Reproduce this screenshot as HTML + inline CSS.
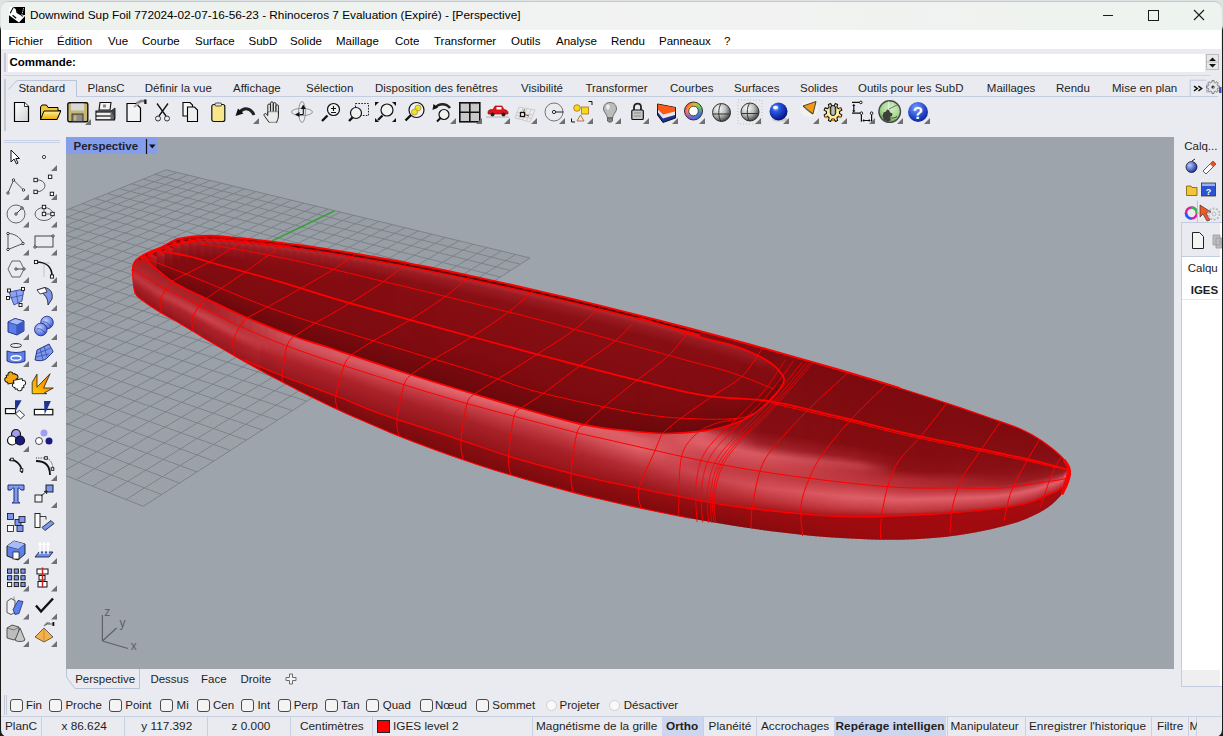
<!DOCTYPE html>
<html><head><meta charset="utf-8"><style>
html,body{margin:0;padding:0;width:1223px;height:736px;overflow:hidden;background:#dfe3e6}
.r{position:absolute;display:block}
.t{position:absolute;white-space:pre;line-height:1;font-family:"Liberation Sans", sans-serif}
</style></head><body>
<div class="r" style="left:0px;top:0px;width:1223px;height:736px;background:linear-gradient(180deg,#dfe3e6 0px,#dfe3e6 26px,#1c1c1c 30px,#1c1c1c 100%)"></div><div class="r" style="left:1px;top:1px;width:1221px;height:736px;background:#eaebf0;border-radius:8px 8px 7px 7px;border-top:1px solid #c4c8cb;box-sizing:border-box;overflow:hidden"></div><div class="r" style="left:1px;top:2px;width:1220px;height:28px;background:linear-gradient(90deg,#edf2ee 0%,#eff2f0 35%,#f2f2f3 50%,#f1f2f1 65%,#edf3ee 100%);border-radius:7px 7px 0 0"></div><svg class="r" style="left:9px;top:7px" width="16" height="16" viewBox="0 0 16 16"><rect x="0" y="0" width="16" height="16" fill="#000"/><path d="M0,0 H3.6 L6.6,1.9 L7.6,6 L12,8.4 L16,8 L16,9 L10,15.5 L0,8.3 Z" fill="#fff"/><path d="M4.2,0.8 C3,2.5 2.2,4.5 1.3,6.3" stroke="#000" stroke-width="1.1" fill="none"/><path d="M3.6,8.2 L7.2,11.2" stroke="#000" stroke-width="1.2"/><path d="M14.6,1.2 L12.6,9" stroke="#ddd" stroke-width="1" stroke-dasharray="1.2 0.8"/><path d="M12,8.4 L14,9.5" stroke="#000" stroke-width="0.8"/></svg><span class="t" style="left:30.0px;top:10.31px;font-size:11.8px;font-weight:400;color:#000;">Downwind Sup Foil 772024-02-07-16-56-23 - Rhinoceros 7 Evaluation (Expiré) - [Perspective]</span><svg class="r" style="left:1095px;top:5px" width="120" height="20"><path d="M8 10.5 H18" stroke="#1a1a1a" stroke-width="1"/><rect x="53.5" y="5.5" width="10" height="10" fill="none" stroke="#1a1a1a" stroke-width="1"/><path d="M99 5 L109 15 M109 5 L99 15" stroke="#1a1a1a" stroke-width="1.1"/></svg><div class="r" style="left:1px;top:30px;width:1220px;height:19px;background:#fff"></div><span class="t" style="left:8.5px;top:35.77px;font-size:11.5px;font-weight:400;color:#000;">Fichier</span><span class="t" style="left:57.0px;top:35.77px;font-size:11.5px;font-weight:400;color:#000;">Édition</span><span class="t" style="left:108.0px;top:35.77px;font-size:11.5px;font-weight:400;color:#000;">Vue</span><span class="t" style="left:142.0px;top:35.77px;font-size:11.5px;font-weight:400;color:#000;">Courbe</span><span class="t" style="left:195.0px;top:35.77px;font-size:11.5px;font-weight:400;color:#000;">Surface</span><span class="t" style="left:248.5px;top:35.77px;font-size:11.5px;font-weight:400;color:#000;">SubD</span><span class="t" style="left:290.0px;top:35.77px;font-size:11.5px;font-weight:400;color:#000;">Solide</span><span class="t" style="left:336.0px;top:35.77px;font-size:11.5px;font-weight:400;color:#000;">Maillage</span><span class="t" style="left:395.0px;top:35.77px;font-size:11.5px;font-weight:400;color:#000;">Cote</span><span class="t" style="left:434.0px;top:35.77px;font-size:11.5px;font-weight:400;color:#000;">Transformer</span><span class="t" style="left:511.0px;top:35.77px;font-size:11.5px;font-weight:400;color:#000;">Outils</span><span class="t" style="left:556.0px;top:35.77px;font-size:11.5px;font-weight:400;color:#000;">Analyse</span><span class="t" style="left:611.0px;top:35.77px;font-size:11.5px;font-weight:400;color:#000;">Rendu</span><span class="t" style="left:659.0px;top:35.77px;font-size:11.5px;font-weight:400;color:#000;">Panneaux</span><span class="t" style="left:724.0px;top:35.77px;font-size:11.5px;font-weight:400;color:#000;">?</span><div class="r" style="left:4px;top:53px;width:2px;height:19px;border-left:1px solid #c4cad6;border-right:1px solid #c4cad6;box-sizing:border-box"></div><div class="r" style="left:8px;top:54px;width:1197px;height:18px;background:#fff"></div><span class="t" style="left:9.5px;top:56.77px;font-size:11.5px;font-weight:700;color:#000;">Commande:</span><div class="r" style="left:1206px;top:54px;width:13px;height:16px;background:#e8e8e8;border:1px solid #bcbcbc;box-sizing:border-box"></div><svg class="r" style="left:1206px;top:54px" width="13" height="16"><path d="M3 7 L6.5 3.5 L10 7 Z M3 10 L10 10 L6.5 13.5 Z" fill="#111"/><path d="M1 8 H12" stroke="#bcbcbc"/></svg><div class="r" style="left:4px;top:75px;width:1206px;height:1px;background:#cfd6e3"></div><div class="r" style="left:4px;top:79px;width:2px;height:52px;border-left:1px solid #c4cad6;border-right:1px solid #c4cad6;box-sizing:border-box"></div><div class="r" style="left:76px;top:96px;width:1142px;height:1px;background:#c3cde0"></div><svg class="r" style="left:7px;top:79px" width="72" height="19"><path d="M1.4,10.5 L9.3,2 Q9.8,1.5 11,1.5 L69.5,1.5 L69.5,18" fill="none" stroke="#b8c4da" stroke-width="1"/></svg><span class="t" style="left:18.4px;top:82.77px;font-size:11.5px;font-weight:400;color:#1e1e1e;">Standard</span><span class="t" style="left:87.6px;top:82.77px;font-size:11.5px;font-weight:400;color:#1e1e1e;">PlansC</span><span class="t" style="left:144.7px;top:82.77px;font-size:11.5px;font-weight:400;color:#1e1e1e;">Définir la vue</span><span class="t" style="left:233.0px;top:82.77px;font-size:11.5px;font-weight:400;color:#1e1e1e;">Affichage</span><span class="t" style="left:306.0px;top:82.77px;font-size:11.5px;font-weight:400;color:#1e1e1e;">Sélection</span><span class="t" style="left:375.0px;top:82.77px;font-size:11.5px;font-weight:400;color:#1e1e1e;">Disposition des fenêtres</span><span class="t" style="left:521.0px;top:82.77px;font-size:11.5px;font-weight:400;color:#1e1e1e;">Visibilité</span><span class="t" style="left:585.4px;top:82.77px;font-size:11.5px;font-weight:400;color:#1e1e1e;">Transformer</span><span class="t" style="left:670.0px;top:82.77px;font-size:11.5px;font-weight:400;color:#1e1e1e;">Courbes</span><span class="t" style="left:734.0px;top:82.77px;font-size:11.5px;font-weight:400;color:#1e1e1e;">Surfaces</span><span class="t" style="left:800.0px;top:82.77px;font-size:11.5px;font-weight:400;color:#1e1e1e;">Solides</span><span class="t" style="left:858.0px;top:82.77px;font-size:11.5px;font-weight:400;color:#1e1e1e;">Outils pour les SubD</span><span class="t" style="left:986.8px;top:82.77px;font-size:11.5px;font-weight:400;color:#1e1e1e;">Maillages</span><span class="t" style="left:1056.0px;top:82.77px;font-size:11.5px;font-weight:400;color:#1e1e1e;">Rendu</span><span class="t" style="left:1112.0px;top:82.77px;font-size:11.5px;font-weight:400;color:#1e1e1e;">Mise en plan</span><svg class="r" style="left:1185px;top:76px" width="38" height="24"><path d="M5.2,20.5 V4.2 H21.5" fill="none" stroke="#bcc8dc" stroke-width="1"/><rect x="21" y="8" width="1.5" height="9" fill="#c8b8e8"/><rect x="34" y="11" width="2.5" height="6" fill="#4050c0"/></svg><svg class="r" style="left:0;top:0" width="1223" height="100"><path d="M1194,86.2 L1197.2,88.5 L1194,90.8 M1198.4,86.2 L1201.6,88.5 L1198.4,90.8" fill="none" stroke="#111" stroke-width="1.5"/><path d="M1217.89,85.94 L1219.53,86.01 L1219.53,87.99 L1217.89,88.06 L1217.20,89.71 L1218.32,90.91 L1216.91,92.32 L1215.71,91.20 L1214.06,91.89 L1213.99,93.53 L1212.01,93.53 L1211.94,91.89 L1210.29,91.20 L1209.09,92.32 L1207.68,90.91 L1208.80,89.71 L1208.11,88.06 L1206.47,87.99 L1206.47,86.01 L1208.11,85.94 L1208.80,84.29 L1207.68,83.09 L1209.09,81.68 L1210.29,82.80 L1211.94,82.11 L1212.01,80.47 L1213.99,80.47 L1214.06,82.11 L1215.71,82.80 L1216.91,81.68 L1218.32,83.09 L1217.20,84.29Z" fill="#e6e6e6" stroke="#7d7d7d" stroke-width="1"/><circle cx="1213" cy="87" r="1.6" fill="#2a2a2a"/><circle cx="1213.6" cy="87.4" r="0.8" fill="#4aa0f0"/></svg><svg class="r" style="left:0;top:0" width="1223" height="140"><g transform="translate(13,102) scale(1.0)"><defs><linearGradient id="pg" x1="0" y1="0" x2="1" y2="1"><stop offset="0" stop-color="#ffffff"/><stop offset="1" stop-color="#d2d2d2"/></linearGradient></defs><path d="M1.5,0.5 H11.5 L15.5,4.5 V19.5 H1.5 Z" fill="url(#pg)" stroke="#000" stroke-width="1.2"/><path d="M11.5,0.5 V4.5 H15.5" fill="#fff" stroke="#000" stroke-width="0.8"/></g><g transform="translate(40,104) scale(1.0)"><defs><linearGradient id="fy" x1="0" y1="0" x2="0" y2="1"><stop offset="0" stop-color="#fff3a0"/><stop offset="1" stop-color="#e8a800"/></linearGradient></defs><path d="M0.5,3 L0.5,15.5 L17,15.5 L20.5,6.5 L18,6.5 L18,3.5 L8,3.5 L6.5,1 L2,1 Z" fill="#f2c63a" stroke="#000" stroke-width="1"/><path d="M0.5,15.5 L4,7 L20.8,7 L17,15.5 Z" fill="url(#fy)" stroke="#000" stroke-width="1"/></g><g transform="translate(67,102) scale(1.0)"><rect x="0.8" y="0.8" width="20" height="19" rx="1.5" fill="#c6b671" stroke="#111" stroke-width="1.4"/><rect x="4" y="1.5" width="13" height="7" fill="#d8d8d8"/><rect x="5" y="12" width="11" height="7.5" fill="#8c8c8c" stroke="#222" stroke-width="0.8"/><rect x="7" y="13.5" width="2.5" height="5" fill="#c6b671"/></g><path d="M85,125 L91,119 L91,125 Z" fill="#707070"/><g transform="translate(95,102) scale(1.0)"><path d="M5,0.5 H16 L15,8 H4 Z" fill="#f4f4f4" stroke="#111" stroke-width="1.1"/><rect x="8" y="2.5" width="3" height="3" fill="#888"/><path d="M1,9 H19.5 V18 H1 Z" fill="#6a6a6a" stroke="#111" stroke-width="1.2"/><rect x="1.5" y="11" width="14" height="2" fill="#f0f0f0"/><rect x="1.5" y="15" width="14" height="2" fill="#f0f0f0"/><path d="M16,9 L20,6 V17" fill="#444" stroke="#111" stroke-width="0.8"/></g><g transform="translate(126,100) scale(1.0)"><path d="M1,3.5 H10 L14.5,8 V21.5 H1 Z" fill="#f3f3f3" stroke="#000" stroke-width="1.2"/><path d="M10.5,3.5 L15,1 H19" stroke="#888" stroke-width="2.6" fill="none"/><rect x="18.3" y="-0.5" width="2.2" height="4.5" fill="#111"/><path d="M8,7 L13,3" stroke="#aaa" stroke-width="2"/></g><g transform="translate(155,103) scale(1.0)"><path d="M2,0.5 L11,13 M13,0.5 L4,13" stroke="#111" stroke-width="1.3"/><ellipse cx="3" cy="15.5" rx="2.5" ry="2.5" fill="none" stroke="#333" stroke-width="1"/><ellipse cx="12" cy="15.5" rx="2.5" ry="2.5" fill="none" stroke="#333" stroke-width="1"/></g><g transform="translate(182,102) scale(1.0)"><path d="M1,0.5 H8 L10.5,3 V14 H1 Z" fill="#f6f6f6" stroke="#000" stroke-width="1.1"/><path d="M5.5,5 H12.5 L15.5,8 V19.5 H5.5 Z" fill="#efefef" stroke="#000" stroke-width="1.1"/></g><g transform="translate(211,103) scale(1.0)"><rect x="0.8" y="1.5" width="13" height="17" rx="2" fill="#f8e68a" stroke="#111" stroke-width="1.2"/><rect x="4" y="0" width="6.5" height="3" rx="1" fill="#e8e8e8" stroke="#222" stroke-width="0.8"/></g><g transform="translate(235,105) scale(1.0)"><path d="M19,10 C16,3 9,2 5,7" stroke="#222" stroke-width="3" fill="none"/><path d="M0.5,11 L3,3.5 L8.5,8.5 Z" fill="#111"/></g><path d="M253,124 L259,118 L259,124 Z" fill="#707070"/><g transform="translate(263,101) scale(1.0)"><g fill="#efefef" stroke="#111" stroke-width="0.9"><rect x="4.8" y="3" width="2.6" height="11" rx="1.3"/><rect x="7.6" y="0.8" width="2.6" height="12" rx="1.3"/><rect x="10.4" y="1.6" width="2.6" height="11.5" rx="1.3"/><rect x="13" y="3.8" width="2.4" height="10" rx="1.2"/></g><path d="M4.8,11 H15.4 V15 C15.4,18 14,19.5 13.6,21.5 H6.2 L1.2,14.6 C0.4,13.2 2,12 3.2,13 L4.8,14.5 Z" fill="#ebebeb" stroke="#111" stroke-width="0.9"/><path d="M5.5,11.2 H14.8" stroke="#ebebeb" stroke-width="1.2"/><path d="M6.5,21 H13" stroke="#c8c8c8" stroke-width="1.5"/></g><g transform="translate(291,101) scale(1.0)"><ellipse cx="11" cy="11" rx="10.5" ry="3.6" fill="none" stroke="#8a8a8a" stroke-width="0.9"/><ellipse cx="11" cy="11" rx="3.4" ry="10.5" fill="none" stroke="#8a8a8a" stroke-width="0.9"/><path d="M12.2,3.5 L14.8,8 L9.8,8 Z M4,13.5 L8.5,11 L8.5,16 Z" fill="#111"/><path d="M12.3,8 V13.5 M8.5,13.5 H12.3" stroke="#111" stroke-width="1.1" fill="none"/></g><g transform="translate(321,103) scale(1.0)"><path d="M1,18 L6.5,12.5" stroke="#111" stroke-width="2.4"/><circle cx="12.5" cy="6.5" r="6" fill="#f2f2f2" stroke="#111" stroke-width="1.2"/><path d="M12.5,3 V8 M10,5.5 H15 M10,9.5 H15" stroke="#111" stroke-width="1.1"/></g><g transform="translate(348,103) scale(1.0)"><rect x="7.5" y="0.5" width="13" height="12" fill="none" stroke="#222" stroke-width="1" stroke-dasharray="1.6 1.3"/><path d="M1,18 L6.5,12.5" stroke="#111" stroke-width="2.4"/><circle cx="8" cy="10" r="5.5" fill="#f2f2f2" stroke="#111" stroke-width="1.2"/></g><g transform="translate(375,102) scale(1.0)"><path d="M0,0 H4 L0,4 Z M21,0 H17 L21,4 Z M0,20 H4 L0,16 Z M21,20 H17 L21,16 Z" fill="#111"/><path d="M3,18 L7.5,13.5" stroke="#111" stroke-width="2.2"/><circle cx="12" cy="8" r="6" fill="#f2f2f2" stroke="#111" stroke-width="1.2"/></g><g transform="translate(405,102) scale(1.0)"><path d="M0.5,18.5 L6.5,12.5" stroke="#111" stroke-width="2.4"/><circle cx="11.5" cy="8" r="7.5" fill="#f2f2f2" stroke="#111" stroke-width="1.2"/><circle cx="13" cy="6" r="3" fill="#f5e21a" stroke="#777" stroke-width="0.6"/><circle cx="9.5" cy="10" r="3" fill="#f5e21a" stroke="#777" stroke-width="0.6"/></g><g transform="translate(432,103) scale(1.0)"><path d="M18,5 C14,0 7,0 3,5" stroke="#222" stroke-width="2.6" fill="none"/><path d="M0.5,7 L1.5,1 L6,4.5 Z" fill="#111"/><path d="M5,18.5 L9,14.5" stroke="#111" stroke-width="2"/><circle cx="12" cy="11.5" r="5" fill="#f2f2f2" stroke="#111" stroke-width="1.2"/></g><path d="M450,124 L456,118 L456,124 Z" fill="#707070"/><g transform="translate(459,102) scale(1.0)"><rect x="0.8" y="0.8" width="20" height="19" fill="#c8c8c8" stroke="#111" stroke-width="1.6"/><path d="M10.8,1 V20 M1,10.3 H21" stroke="#111" stroke-width="1.6"/><path d="M13,1.6 H18" stroke="#2a4fd0" stroke-width="1"/></g><path d="M476,124 L482,118 L482,124 Z" fill="#707070"/><g transform="translate(487,104) scale(1.0)"><path d="M1,8 C1,6 3,5.5 6,5.5 L8,2 H15 L17,5.5 C20,6 21,7 21,8.5 V10 H1 Z" fill="#e0131b" stroke="#900" stroke-width="0.6"/><rect x="9.5" y="3" width="5" height="2.5" fill="#fff"/><circle cx="5.5" cy="10.5" r="2" fill="#222"/><circle cx="16.5" cy="10.5" r="2" fill="#222"/><path d="M-1,13 H22" stroke="#999" stroke-width="0.7"/></g><path d="M504,124 L510,118 L510,124 Z" fill="#707070"/><g transform="translate(515,106) scale(1.0)"><path d="M4,1 L20,4 L15,16 L0,12 Z M8,2 L3.5,13 M12,2.8 L7.5,14 M16,3.5 L11.5,15 M2,6.5 L18,9 M1,9.3 L16.5,12.6" fill="none" stroke="#bfbfbf" stroke-width="0.7"/><path d="M8,8 L9.5,3" stroke="#2a9a2a" stroke-width="1"/><path d="M8,8 L14,10" stroke="#d02020" stroke-width="1"/><rect x="5.5" y="6.5" width="4" height="4" fill="#fff" stroke="#111" stroke-width="1.3"/></g><path d="M531,124 L537,118 L537,124 Z" fill="#707070"/><g transform="translate(544,102) scale(1.0)"><circle cx="10" cy="10" r="9" fill="none" stroke="#666" stroke-width="0.9"/><path d="M10,10 H19.5" stroke="#222" stroke-width="1"/><circle cx="10" cy="10" r="1.6" fill="#fff" stroke="#111" stroke-width="0.9"/></g><path d="M559,124 L565,118 L565,124 Z" fill="#707070"/><g transform="translate(571,101) scale(1.0)"><path d="M17.5,0.5 H21 V4" fill="none" stroke="#111" stroke-width="1"/><path d="M0.5,17.5 V21 H4" fill="none" stroke="#111" stroke-width="1"/><circle cx="6" cy="7" r="3.3" fill="#f3dc16" stroke="#b56a20" stroke-width="0.8"/><rect x="10.5" y="6" width="7" height="7" fill="#f3dc16" stroke="#b56a20" stroke-width="0.8"/><path d="M9.5,14 L13,20 H6 Z" fill="none" stroke="#b56a20" stroke-width="0.9"/></g><path d="M587,124 L593,118 L593,124 Z" fill="#707070"/><g transform="translate(603,102) scale(1.0)"><path d="M7,0.5 C2,0.5 0.5,4 0.5,7 C0.5,10 4,12 4.5,16 H9.5 C10,12 13.5,10 13.5,7 C13.5,4 12,0.5 7,0.5 Z" fill="#bcbcbc" stroke="#555" stroke-width="0.8"/><path d="M4.5,16 H9.5 V19 C9,20.5 5,20.5 4.5,19 Z" fill="#888" stroke="#444" stroke-width="0.7"/><ellipse cx="5" cy="5" rx="1.8" ry="2.8" fill="#efefef"/></g><path d="M615,124 L621,118 L621,124 Z" fill="#707070"/><g transform="translate(631,102) scale(1.0)"><path d="M3,8 V5 C3,0.5 10,0.5 10,5 V8" fill="none" stroke="#222" stroke-width="1.8"/><rect x="0.8" y="8" width="11.5" height="9.5" rx="1" fill="#c8c8c8" stroke="#111" stroke-width="1.2"/><path d="M3,11 H10 M3,14 H10" stroke="#888" stroke-width="1"/></g><path d="M643,124 L649,118 L649,124 Z" fill="#707070"/><g transform="translate(657,103) scale(1.0)"><path d="M0.5,1 L18.5,4.5 V15 L6,19.5 L0.5,12 Z" fill="#1f2f9a" stroke="#111" stroke-width="1"/><path d="M0.8,1.2 L18.2,4.6 V9 L6,12 L0.8,6 Z" fill="#ff5a14"/><path d="M1,6.5 L6,11.5 L18,8.5 V12 L6,15.5 L1,9.5 Z" fill="#e8e8e8"/></g><path d="M672,124 L678,118 L678,124 Z" fill="#707070"/><g transform="translate(684,102) scale(1.0)"><defs><linearGradient id="cw1" x1="0" y1="0" x2="1" y2="1"><stop offset="0" stop-color="#ff2a2a"/><stop offset="0.3" stop-color="#ffd800"/><stop offset="0.6" stop-color="#00c8a0"/><stop offset="1" stop-color="#3050ff"/></linearGradient><linearGradient id="cw2" x1="1" y1="0" x2="0" y2="1"><stop offset="0" stop-color="#80ff20" stop-opacity="0.9"/><stop offset="0.5" stop-color="#ff20c0" stop-opacity="0"/><stop offset="1" stop-color="#c020ff" stop-opacity="0.9"/></linearGradient></defs><circle cx="9.5" cy="9" r="7" fill="none" stroke="url(#cw1)" stroke-width="4"/><circle cx="9.5" cy="9" r="7" fill="none" stroke="url(#cw2)" stroke-width="4"/><circle cx="9.5" cy="9" r="9" fill="none" stroke="#222" stroke-width="0.9"/><circle cx="9.5" cy="9" r="4.8" fill="#fff" stroke="#222" stroke-width="0.8"/></g><path d="M699,124 L705,118 L705,124 Z" fill="#707070"/><g transform="translate(712,103) scale(1.0)"><defs><radialGradient id="sg" cx="0.35" cy="0.3" r="0.75"><stop offset="0" stop-color="#ffffff"/><stop offset="0.5" stop-color="#bdbdbd"/><stop offset="1" stop-color="#3c3c3c"/></radialGradient></defs><circle cx="9.5" cy="9.5" r="9" fill="url(#sg)" stroke="#222" stroke-width="0.9"/><path d="M9,1 C6,5 6,14 9,18.5 M1,11 H18" stroke="#333" stroke-width="1" fill="none"/></g><g transform="translate(738,100) scale(1.0)"><rect x="0" y="0" width="24" height="24" fill="none" stroke="#d6d6d6" stroke-width="2" stroke-dasharray="1 2"/><path d="M0,6 H24 M0,12 H24 M0,18 H24 M6,0 V24 M12,0 V24 M18,0 V24" stroke="#dcdcdc" stroke-width="1.2" stroke-dasharray="1 2"/><g transform="translate(2.5,2.5)"><defs><radialGradient id="sg2" cx="0.35" cy="0.3" r="0.75"><stop offset="0" stop-color="#ffffff"/><stop offset="0.5" stop-color="#bdbdbd"/><stop offset="1" stop-color="#3c3c3c"/></radialGradient></defs><circle cx="9.5" cy="9.5" r="9" fill="url(#sg2)" stroke="#222" stroke-width="0.9"/><path d="M9,1 C6,5 6,14 9,18.5 M1,11 H18" stroke="#333" stroke-width="1" fill="none"/></g></g><path d="M755,124 L761,118 L761,124 Z" fill="#707070"/><g transform="translate(769,102) scale(1.0)"><defs><radialGradient id="bs" cx="0.35" cy="0.3" r="0.8"><stop offset="0" stop-color="#c8dcff"/><stop offset="0.25" stop-color="#2a5ce8"/><stop offset="0.8" stop-color="#0a1a90"/><stop offset="1" stop-color="#050a40"/></radialGradient></defs><ellipse cx="11" cy="17.5" rx="8" ry="2" fill="#bbb" opacity="0.7"/><circle cx="9.5" cy="9.5" r="9" fill="url(#bs)"/><ellipse cx="6.5" cy="5.5" rx="2.6" ry="1.8" fill="#fff" opacity="0.9"/></g><path d="M783,124 L789,118 L789,124 Z" fill="#707070"/><g transform="translate(802,100) scale(1.0)"><ellipse cx="7" cy="9" rx="9" ry="8" fill="#f4f4f4" opacity="0.8"/><path d="M1,6 L14,1.5 L11,14 Z" fill="#f59a10" stroke="#333" stroke-width="0.9"/><path d="M1,6 C3,9 7,12 11,14 C8,12 4,8 1,6" fill="#fff4c0" stroke="#333" stroke-width="0.6"/></g><path d="M813,124 L819,118 L819,124 Z" fill="#707070"/><g transform="translate(822,103) scale(1.0)"><defs><linearGradient id="gcap" x1="0" y1="0" x2="1" y2="0"><stop offset="0" stop-color="#6a6a6a"/><stop offset="0.5" stop-color="#d0d0d0"/><stop offset="1" stop-color="#777"/></linearGradient></defs><path d="M17.52,10.53 L19.89,11.86 L18.96,14.12 L16.34,13.38 L14.88,14.84 L15.62,17.46 L13.36,18.39 L12.03,16.02 L9.97,16.02 L8.64,18.39 L6.38,17.46 L7.12,14.84 L5.66,13.38 L3.04,14.12 L2.11,11.86 L4.48,10.53 L4.48,8.47 L2.11,7.14 L3.04,4.88 L5.66,5.62 L7.12,4.16 L6.38,1.54 L8.64,0.61 L9.97,2.98 L12.03,2.98 L13.36,0.61 L15.62,1.54 L14.88,4.16 L16.34,5.62 L18.96,4.88 L19.89,7.14 L17.52,8.47Z" fill="#f7ee9e" stroke="#111" stroke-width="1.1" stroke-linejoin="round"/><circle cx="4" cy="14" r="1.3" fill="#e07a10"/><circle cx="11" cy="17" r="1.3" fill="#e07a10"/><circle cx="18" cy="14" r="1.3" fill="#e07a10"/><circle cx="18" cy="6" r="1.1" fill="#e8a040"/><rect x="8.3" y="2.5" width="5.4" height="10" rx="2.7" fill="url(#gcap)" stroke="#111" stroke-width="1"/></g><path d="M841,124 L847,118 L847,124 Z" fill="#707070"/><g transform="translate(852,101) scale(1.0)"><path d="M0,1.4 H7.6 M0,12.2 H8.1 M9.4,13.5 V20.8 M19.6,13.5 V20.8 M1.8,4.5 V10 M12,19.5 H17" fill="none" stroke="#111" stroke-width="1.2"/><path d="M0.2,5 L1.8,2.8 L3.4,5 Z M0.2,9.5 L1.8,11.7 L3.4,9.5 Z M12.2,18 L10.2,19.5 L12.2,21 Z M16.8,18 L18.8,19.5 L16.8,21 Z" fill="#111"/><circle cx="8.8" cy="1.4" r="1.3" fill="#fff" stroke="#111" stroke-width="1"/><circle cx="9.4" cy="12.2" r="1.3" fill="#fff" stroke="#111" stroke-width="1"/><circle cx="19.6" cy="12.2" r="1.3" fill="#fff" stroke="#111" stroke-width="1"/></g><path d="M869,124 L875,118 L875,124 Z" fill="#707070"/><g transform="translate(878,100) scale(1.0)"><defs><radialGradient id="gl" cx="0.55" cy="0.35" r="0.7"><stop offset="0" stop-color="#d8f0c8"/><stop offset="0.6" stop-color="#a8d890"/><stop offset="1" stop-color="#5a9848"/></radialGradient></defs><circle cx="11.7" cy="11.6" r="10.8" fill="url(#gl)" stroke="#4a4a4a" stroke-width="1.4"/><path d="M10.5,1.5 V12" stroke="#e8f4e0" stroke-width="1.2" opacity="0.8"/><path d="M11,9 L20,4.5" stroke="#555" stroke-width="0.8"/><path d="M4.5,16 L5.5,12.5 L8,11.5 L9,9.5 L11,10 L12,12.5 L14.5,13.5 L14,16 L11.5,17 L13,20 L10,21.8 L6,20 Z" fill="#3e3e3e"/><path d="M11,17.5 C14,18.5 17,18 19,16.5" stroke="#4a4a4a" stroke-width="1" fill="none"/></g><path d="M897,124 L903,118 L903,124 Z" fill="#707070"/><g transform="translate(908,102) scale(1.0)"><defs><radialGradient id="hq" cx="0.4" cy="0.3" r="0.8"><stop offset="0" stop-color="#7aa0ff"/><stop offset="0.6" stop-color="#2444c8"/><stop offset="1" stop-color="#101e80"/></radialGradient></defs><circle cx="10" cy="10" r="10" fill="url(#hq)"/><text x="10" y="16.5" text-anchor="middle" font-family="Liberation Sans" font-weight="700" font-size="17" fill="#fff">?</text></g><path d="M924,124 L930,118 L930,124 Z" fill="#707070"/></svg><div class="r" style="left:4px;top:140px;width:56px;height:1px;background:#c7d2e6"></div><div class="r" style="left:4px;top:142px;width:56px;height:1px;background:#c7d2e6"></div><svg class="r" style="left:0;top:0" width="64" height="660"><g transform="translate(6,147) scale(1.0)"><path d="M5,3 V15 L8,12 L10.5,17 L12,16 L9.8,11.5 L13.5,11.5 Z" fill="#fff" stroke="#111" stroke-width="1"/></g><g transform="translate(34,147) scale(1.0)"><circle cx="10" cy="10" r="1.6" fill="#fff" stroke="#111" stroke-width="0.8"/></g><g transform="translate(6,176) scale(1.0)"><path d="M2,17 L7.5,4 L17.5,14" fill="none" stroke="#444" stroke-width="0.9"/><circle cx="2" cy="17" r="1.2" fill="#fff" stroke="#111" stroke-width="0.8"/><circle cx="7.5" cy="4" r="1.2" fill="#fff" stroke="#111" stroke-width="0.8"/><circle cx="17.5" cy="14" r="1.2" fill="#fff" stroke="#111" stroke-width="0.8"/></g><g transform="translate(34,176) scale(1.0)"><path d="M1.6,4 C14,3 14,16 1.6,15.9" fill="none" stroke="#444" stroke-width="0.9"/><rect x="-0.09999999999999987" y="2.3" width="3.4" height="3.4" fill="#fff" stroke="#111" stroke-width="0.9"/><rect x="14.400000000000002" y="-0.8999999999999999" width="3.4" height="3.4" fill="#fff" stroke="#111" stroke-width="0.9"/><rect x="-0.09999999999999987" y="14.200000000000001" width="3.4" height="3.4" fill="#fff" stroke="#111" stroke-width="0.9"/><rect x="16.2" y="16.2" width="3.4" height="3.4" fill="#fff" stroke="#111" stroke-width="0.9"/></g><g transform="translate(6,203.5) scale(1.0)"><circle cx="10" cy="10.5" r="9" fill="none" stroke="#555" stroke-width="0.9"/><path d="M10,10.5 L16,4.5" stroke="#222" stroke-width="0.9"/><circle cx="10" cy="10.5" r="1.2" fill="#fff" stroke="#111" stroke-width="0.8"/><circle cx="16" cy="4.5" r="1.2" fill="#fff" stroke="#111" stroke-width="0.8"/></g><g transform="translate(34,203.5) scale(1.0)"><ellipse cx="10" cy="10.5" rx="9" ry="6.5" fill="none" stroke="#555" stroke-width="0.9"/><path d="M10,3.5 V10.5 H18.5" fill="none" stroke="#222" stroke-width="0.7"/><rect x="8.3" y="1.8" width="3.4" height="3.4" fill="#fff" stroke="#111" stroke-width="0.9"/><rect x="8.3" y="8.8" width="3.4" height="3.4" fill="#fff" stroke="#111" stroke-width="0.9"/><rect x="16.8" y="8.8" width="3.4" height="3.4" fill="#fff" stroke="#111" stroke-width="0.9"/></g><g transform="translate(6,231.5) scale(1.0)"><path d="M2,2 C8,2 14,5 17,12 L2,18 Z" fill="none" stroke="#444" stroke-width="0.9"/><circle cx="2" cy="2" r="1.2" fill="#fff" stroke="#111" stroke-width="0.8"/><circle cx="17" cy="12" r="1.2" fill="#fff" stroke="#111" stroke-width="0.8"/><circle cx="2" cy="18" r="1.2" fill="#fff" stroke="#111" stroke-width="0.8"/></g><g transform="translate(34,231.5) scale(1.0)"><rect x="1" y="4.5" width="18" height="11" fill="none" stroke="#333" stroke-width="0.9"/><circle cx="1" cy="15.5" r="1.2" fill="#fff" stroke="#111" stroke-width="0.8"/><circle cx="19" cy="4.5" r="1.2" fill="#fff" stroke="#111" stroke-width="0.8"/></g><g transform="translate(6,259) scale(1.0)"><path d="M6,2 H14 L18,10 L14,18 H6 L2,10 Z" fill="none" stroke="#555" stroke-width="0.9"/><path d="M10,10 H18" stroke="#222" stroke-width="0.8"/><circle cx="10" cy="10" r="1.2" fill="#fff" stroke="#111" stroke-width="0.8"/><circle cx="18" cy="10" r="1.2" fill="#fff" stroke="#111" stroke-width="0.8"/></g><g transform="translate(34,259) scale(1.0)"><path d="M10,4 V18" stroke="#aaa" stroke-width="0.6"/><path d="M10,4 H16" stroke="#aaa" stroke-width="0.6"/><path d="M2,3 C12,3 18,8 18,17" fill="none" stroke="#111" stroke-width="1.6"/><rect x="0.3999999999999999" y="1.4" width="3.2" height="3.2" fill="#fff" stroke="#111" stroke-width="0.9"/><rect x="16.4" y="15.9" width="3.2" height="3.2" fill="#fff" stroke="#111" stroke-width="0.9"/></g><g transform="translate(6,287) scale(1.0)"><path d="M3,5 L18,2 L16,14 L8,18 Z" fill="#8aa2f2" stroke="#2a3a8a" stroke-width="0.8"/><path d="M10,3.5 L12,16 M4,11 L17,8" stroke="#2a3a8a" stroke-width="0.6"/><rect x="1.5" y="2.0" width="3" height="3" fill="#fff" stroke="#111" stroke-width="0.9"/><rect x="15.5" y="0.5" width="3" height="3" fill="#fff" stroke="#111" stroke-width="0.9"/><rect x="0.5" y="9.5" width="3" height="3" fill="#fff" stroke="#111" stroke-width="0.9"/><rect x="13.0" y="16.5" width="3" height="3" fill="#fff" stroke="#111" stroke-width="0.9"/></g><g transform="translate(34,287) scale(1.0)"><path d="M3,3 L11,0.5 C17,2 19,6 18,12 L14,18 C14,12 12,7 3,3 Z" fill="#7d96ee" stroke="#222" stroke-width="0.9"/><path d="M3,3 L11,0.5 L13,5 L6,7 Z" fill="#fff" stroke="#222" stroke-width="0.8"/></g><g transform="translate(6,316) scale(1.0)"><path d="M2,6 L9,2.5 L18,5 L18,15 L11,19 L2,16 Z" fill="#5a7ce8" stroke="#1a2a7a" stroke-width="0.9"/><path d="M2,6 L11,9 L18,5 L9,2.5 Z" fill="#a8bcf8" stroke="#1a2a7a" stroke-width="0.6"/><path d="M11,9 V19" stroke="#1a2a7a" stroke-width="0.6"/><path d="M11,9 L18,5 V15 L11,19 Z" fill="#3a58c8"/></g><g transform="translate(34,316) scale(1.0)"><defs><radialGradient id="lsp" cx="0.4" cy="0.35" r="0.7"><stop offset="0" stop-color="#c4d2ff"/><stop offset="1" stop-color="#3a5ad8"/></radialGradient></defs><circle cx="13" cy="6.5" r="6.3" fill="url(#lsp)" stroke="#1a2a7a" stroke-width="0.8"/><circle cx="6.8" cy="13.5" r="6.3" fill="url(#lsp)" stroke="#1a2a7a" stroke-width="0.8"/><path d="M9,6 C12,5 15,8 17,11 M3,13 C6,12 9,14 11,17" stroke="#1a2a7a" stroke-width="0.6" fill="none"/></g><g transform="translate(6,343) scale(1.0)"><ellipse cx="10" cy="2.5" rx="5.5" ry="2" fill="none" stroke="#222" stroke-width="0.9"/><path d="M1,8 C6,10 14,10 19,8 V18 C14,20.5 6,20.5 1,18 Z" fill="#5d80ea" stroke="#1a2a7a" stroke-width="0.9"/><ellipse cx="10" cy="15" rx="5" ry="2.2" fill="none" stroke="#fff" stroke-width="1.4"/></g><g transform="translate(34,343) scale(1.0)"><path d="M3,7 L15,1 C17,5 19,7 19,9 L12,16 C9,18 5,18 1,17 Z" fill="#7d96ee" stroke="#1a2a7a" stroke-width="0.9"/><path d="M6,5 L9,17 M10,3 L13,14 M2,11 L17,5 M2,14 L15,11" stroke="#1a2a7a" stroke-width="0.5"/></g><g transform="translate(5.5,371) rotate(-12,10,10)"><g fill="#111" stroke="#111" stroke-width="1.8"><rect x="2.5" y="3" width="8" height="8" /><circle cx="6.5" cy="2.6" r="2.1"/><circle cx="2.2" cy="7" r="2.1"/><circle cx="11" cy="6" r="1.9"/></g><g fill="#f5a50f"><rect x="2.5" y="3" width="8" height="8" /><circle cx="6.5" cy="2.6" r="2.1"/><circle cx="2.2" cy="7" r="2.1"/><circle cx="11" cy="6" r="1.9"/></g><g fill="#111" stroke="#111" stroke-width="1.8"><rect x="8.5" y="9.5" width="8" height="8"/><circle cx="17" cy="13.5" r="2.1"/><circle cx="12.5" cy="18" r="2.1"/><circle cx="8.2" cy="14" r="1.7"/></g><g fill="#ffffff"><rect x="8.5" y="9.5" width="8" height="8"/><circle cx="17" cy="13.5" r="2.1"/><circle cx="12.5" cy="18" r="2.1"/><circle cx="8.2" cy="14" r="1.7"/></g></g><defs><linearGradient id="fl" x1="0" y1="1" x2="1" y2="0"><stop offset="0" stop-color="#ffd000"/><stop offset="1" stop-color="#f06a00"/></linearGradient></defs><path d="M32.2,393.7 L32.2,382.3 L37,374.1 L37,387.2 L50.1,373.7 L43.6,388 L53.3,388 L44.4,392.9 L46.8,393.7 Z" fill="url(#fl)" stroke="#222" stroke-width="0.8" stroke-linejoin="miter"/><rect x="5.5" y="408.6" width="10" height="5" fill="#fff" stroke="#111" stroke-width="1.2"/><path d="M15,400.2 H21.6 L15,412 Z" fill="#1e3490"/><path d="M15.5,413.8 L19.3,410.3 L24.6,415.2 L20.6,418.9 Z" fill="#fff" stroke="#222" stroke-width="0.9"/><rect x="34.4" y="409.4" width="18.4" height="5.4" fill="#fff" stroke="#111" stroke-width="1.2"/><path d="M44,401 H50.9 L44.6,414.6 Z" fill="#1e3490"/><g transform="translate(6,428) scale(1.0)"><circle cx="10" cy="6" r="4.5" fill="#9f9ff0" stroke="#111" stroke-width="1.2"/><circle cx="6" cy="12.5" r="4.5" fill="#fff" stroke="#111" stroke-width="1.2"/><circle cx="14" cy="12.5" r="4.5" fill="#1a1a80" stroke="#111" stroke-width="1.2"/></g><g transform="translate(34,428) scale(1.0)"><circle cx="10" cy="5" r="3.5" fill="#9f9ff0"/><circle cx="5" cy="13" r="3.5" fill="#fff" stroke="#222" stroke-width="0.8"/><circle cx="15" cy="13" r="3.5" fill="#1a1a80"/></g><g transform="translate(6,457) scale(1.0)"><path d="M3,3 C10,2 16,8 16,16" fill="none" stroke="#111" stroke-width="1.6"/><rect x="4.7" y="1.2" width="2.6" height="2.6" fill="#fff" stroke="#111" stroke-width="0.9"/><rect x="14.2" y="11.7" width="2.6" height="2.6" fill="#fff" stroke="#111" stroke-width="0.9"/></g><g transform="translate(34,457) scale(1.0)"><path d="M2,4 C12,4 16,10 16,18" fill="none" stroke="#111" stroke-width="1.8"/><path d="M2,1 H12 C16,2 19,6 19,13" fill="none" stroke="#111" stroke-width="0.9" stroke-dasharray="1 1.3"/><rect x="10.7" y="-0.30000000000000004" width="2.6" height="2.6" fill="#fff" stroke="#111" stroke-width="0.9"/><rect x="17.2" y="10.7" width="2.6" height="2.6" fill="#fff" stroke="#111" stroke-width="0.9"/></g><g transform="translate(6,484) scale(1.0)"><path d="M2,1 H18 V6 H15 C14,4 13,4 12,4 V17 C12,18 13,18 14,19 H6 C7,18 8,18 8,17 V4 C7,4 6,4 5,6 H2 Z" fill="#7f9cf2" stroke="#1a2a7a" stroke-width="1"/></g><g transform="translate(34,484) scale(1.0)"><rect x="1" y="11" width="7" height="7" fill="#f3f3f3" stroke="#111" stroke-width="0.9"/><rect x="12" y="1" width="7" height="7" fill="#7d96ee" stroke="#111" stroke-width="0.9"/><path d="M7,12 L13,7 M10,7.5 L13,7 L12.5,10" stroke="#111" stroke-width="0.9" fill="none"/></g><g transform="translate(6,512.5) scale(1.0)"><rect x="1.5" y="1" width="6" height="6" fill="#7d96ee" stroke="#111" stroke-width="0.8"/><rect x="1.5" y="13" width="6" height="6" fill="#fff" stroke="#111" stroke-width="0.8"/><rect x="9" y="7" width="6" height="6" fill="#7d96ee" stroke="#111" stroke-width="0.8"/><rect x="13" y="4" width="6" height="6" fill="#7d96ee" stroke="#111" stroke-width="0.8"/><rect x="11" y="13" width="6" height="6" fill="#7d96ee" stroke="#111" stroke-width="0.8"/></g><g transform="translate(34,512.5) scale(1.0)"><rect x="1" y="1" width="5" height="14" fill="#fff" stroke="#111" stroke-width="0.9"/><path d="M6,4 H12 L12,7" fill="none" stroke="#111" stroke-width="0.8"/><path d="M8,15 L17,8 L20,11 L11,18 Z" fill="#7d96ee" stroke="#111" stroke-width="0.8"/></g><g transform="translate(6,540) scale(1.0)"><path d="M1,6 L8,1 L19,4 V14 L12,20 L1,16 Z" fill="#5d80ea" stroke="#111" stroke-width="0.9"/><path d="M1,6 L12,9 L19,4" fill="none" stroke="#111" stroke-width="0.7"/><path d="M1,6 L8,1 L19,4 L12,9 Z" fill="#a8bcf8"/><rect x="7" y="12" width="6" height="7" fill="#fff" stroke="#111" stroke-width="0.7"/></g><g transform="translate(34,540) scale(1.0)"><path d="M1,17 L5,12 H19 L15,17 Z" fill="#6f8ff0" stroke="#111" stroke-width="0.8"/><path d="M6,14 V3 M10,14 V3 M14,14 V3" stroke="#fff" stroke-width="1.5"/><path d="M4.5,5 L6,2 L7.5,5 M8.5,5 L10,2 L11.5,5 M12.5,5 L14,2 L15.5,5" fill="#fff" stroke="#fff" stroke-width="0.8"/></g><g transform="translate(6,567.5) scale(1.0)"><rect x="1.5" y="1.5" width="4.2" height="4.2" fill="#7d96ee" stroke="#111" stroke-width="0.9"/><rect x="8.2" y="1.5" width="4.2" height="4.2" fill="#7d96ee" stroke="#111" stroke-width="0.9"/><rect x="14.9" y="1.5" width="4.2" height="4.2" fill="#7d96ee" stroke="#111" stroke-width="0.9"/><rect x="1.5" y="8.2" width="4.2" height="4.2" fill="#7d96ee" stroke="#111" stroke-width="0.9"/><rect x="8.2" y="8.2" width="4.2" height="4.2" fill="#7d96ee" stroke="#111" stroke-width="0.9"/><rect x="14.9" y="8.2" width="4.2" height="4.2" fill="#7d96ee" stroke="#111" stroke-width="0.9"/><rect x="1.5" y="14.9" width="4.2" height="4.2" fill="#fff" stroke="#111" stroke-width="0.9"/><rect x="8.2" y="14.9" width="4.2" height="4.2" fill="#7d96ee" stroke="#111" stroke-width="0.9"/><rect x="14.9" y="14.9" width="4.2" height="4.2" fill="#7d96ee" stroke="#111" stroke-width="0.9"/></g><g transform="translate(34,567.5) scale(1.0)"><rect x="3" y="1.5" width="11" height="5" fill="#fff" stroke="#111" stroke-width="1"/><rect x="5" y="8" width="6" height="4.5" fill="#fff" stroke="#111" stroke-width="1"/><rect x="4" y="14" width="9" height="5.5" fill="#fff" stroke="#111" stroke-width="1"/><path d="M8.5,0 V20" stroke="#d02020" stroke-width="1.5"/></g><g transform="translate(6,595.5) scale(1.0)"><path d="M1,6 L5,3 L9,5 V17 L5,19 L1,17 Z" fill="#f0f0f0" stroke="#333" stroke-width="0.8"/><path d="M7,14 L12,5 L17,6 L13,18 L9,19 Z" fill="#5d80ea" stroke="#1a2a7a" stroke-width="0.8"/><path d="M8,1 V5" stroke="#666" stroke-width="0.7"/></g><g transform="translate(34,595.5) scale(1.0)"><path d="M2,10 L7,16 L19,3" fill="none" stroke="#111" stroke-width="2.4"/></g><g transform="translate(6,623) scale(1.0)"><path d="M1,5 L6,2 L13,4 V14 L8,17 L1,15 Z" fill="#bdbdbd" stroke="#333" stroke-width="0.8"/><path d="M1,5 L8,7 L13,4" fill="none" stroke="#444" stroke-width="0.6"/><path d="M14,5 L19,17 C17,19 11,19 9,17 Z" fill="#c8c8c8" stroke="#333" stroke-width="0.8"/></g><g transform="translate(34,623) scale(1.0)"><path d="M10,5 L19,14 L10,19 L1,14 Z" fill="#f5b24a" stroke="#444" stroke-width="0.8"/><path d="M10,5 L10,19" stroke="#b07020" stroke-width="0.6"/><path d="M10,3 L13,0 H16 M14,1 H20" stroke="#888" stroke-width="1.4"/><rect x="18.5" y="-1" width="1.8" height="4" fill="#111"/></g><path d="M51,171 L57,165 L57,171 Z" fill="#707070"/><path d="M23,200 L29,194 L29,200 Z" fill="#707070"/><path d="M51,200 L57,194 L57,200 Z" fill="#707070"/><path d="M23,227.5 L29,221.5 L29,227.5 Z" fill="#707070"/><path d="M51,227.5 L57,221.5 L57,227.5 Z" fill="#707070"/><path d="M23,255.5 L29,249.5 L29,255.5 Z" fill="#707070"/><path d="M51,255.5 L57,249.5 L57,255.5 Z" fill="#707070"/><path d="M23,283 L29,277 L29,283 Z" fill="#707070"/><path d="M51,283 L57,277 L57,283 Z" fill="#707070"/><path d="M23,311 L29,305 L29,311 Z" fill="#707070"/><path d="M51,311 L57,305 L57,311 Z" fill="#707070"/><path d="M23,340 L29,334 L29,340 Z" fill="#707070"/><path d="M51,340 L57,334 L57,340 Z" fill="#707070"/><path d="M23,367 L29,361 L29,367 Z" fill="#707070"/><path d="M51,367 L57,361 L57,367 Z" fill="#707070"/><path d="M23,452 L29,446 L29,452 Z" fill="#707070"/><path d="M51,481 L57,475 L57,481 Z" fill="#707070"/><path d="M51,508 L57,502 L57,508 Z" fill="#707070"/><path d="M23,564 L29,558 L29,564 Z" fill="#707070"/><path d="M51,564 L57,558 L57,564 Z" fill="#707070"/><path d="M23,591.5 L29,585.5 L29,591.5 Z" fill="#707070"/><path d="M51,591.5 L57,585.5 L57,591.5 Z" fill="#707070"/><path d="M23,619.5 L29,613.5 L29,619.5 Z" fill="#707070"/><path d="M51,619.5 L57,613.5 L57,619.5 Z" fill="#707070"/><path d="M23,647 L29,641 L29,647 Z" fill="#707070"/><path d="M51,647 L57,641 L57,647 Z" fill="#707070"/></svg><svg class="r" style="left:66px;top:137px" width="1108" height="532" viewBox="66 137 1108 532"><rect x="66" y="137" width="1108" height="532" fill="#9ea4ac"/><clipPath id="vp"><rect x="66" y="137" width="1108" height="532"/></clipPath><clipPath id="sil"><path d="M132.4,271.6 C132.4,266.5 132.8,264.7 134.8,261.8 C136.8,258.9 140.1,256.9 144.6,254.4 C149.1,251.9 155.9,249.7 161.8,247.0 C167.7,244.3 172.2,240.4 180.2,238.5 C188.2,236.6 200.0,235.8 210.0,235.7 C220.0,235.6 230.0,237.2 240.0,238.2 C250.0,239.1 260.0,240.2 270.0,241.4 C280.0,242.6 290.0,243.8 300.0,245.2 C310.0,246.6 320.0,248.0 330.0,249.6 C340.0,251.2 350.0,252.8 360.0,254.5 C370.0,256.2 380.0,258.0 390.0,259.8 C400.0,261.6 410.0,263.6 420.0,265.5 C430.0,267.4 440.0,269.4 450.0,271.5 C460.0,273.6 470.0,275.7 480.0,277.9 C490.0,280.1 500.0,282.2 510.0,284.5 C520.0,286.8 530.0,289.1 540.0,291.4 C550.0,293.7 560.0,296.0 570.0,298.4 C580.0,300.8 590.0,303.2 600.0,305.7 C610.0,308.1 620.0,310.6 630.0,313.1 C640.0,315.6 650.0,318.1 660.0,320.7 C670.0,323.3 680.0,325.9 690.0,328.5 C700.0,331.1 710.0,333.7 720.0,336.4 C730.0,339.1 740.0,341.8 750.0,344.5 C760.0,347.2 770.0,350.0 780.0,352.8 C790.0,355.6 800.0,358.4 810.0,361.3 C820.0,364.2 830.0,367.1 840.0,370.0 C850.0,372.9 860.0,375.9 870.0,378.9 C880.0,381.9 890.0,385.1 900.0,388.2 C910.0,391.3 920.0,394.5 930.0,397.7 C940.0,400.9 950.0,404.2 960.0,407.6 C970.0,411.0 980.0,414.5 990.0,418.0 C1000.0,421.5 1011.3,425.0 1020.0,428.8 C1028.7,432.6 1034.9,436.1 1042.0,441.0 C1049.1,445.9 1058.0,452.9 1062.7,458.0 C1067.4,463.1 1069.0,467.8 1070.0,471.7 C1071.0,475.6 1069.1,478.6 1068.4,481.4 C1067.7,484.1 1067.5,485.3 1065.7,488.2 C1063.9,491.1 1061.2,495.4 1057.6,499.0 C1054.0,502.6 1050.3,506.2 1044.0,509.9 C1037.7,513.6 1029.0,518.0 1020.0,521.3 C1011.0,524.6 1000.0,527.2 990.0,529.5 C980.0,531.8 970.0,533.5 960.0,535.0 C950.0,536.5 940.0,537.5 930.0,538.3 C920.0,539.1 910.0,539.5 900.0,539.7 C890.0,539.9 880.0,539.8 870.0,539.5 C860.0,539.2 850.0,538.7 840.0,538.1 C830.0,537.5 820.0,536.7 810.0,535.7 C800.0,534.7 790.0,533.5 780.0,532.3 C770.0,531.0 760.0,529.7 750.0,528.2 C740.0,526.7 730.0,525.2 720.0,523.5 C710.0,521.8 700.0,520.1 690.0,518.2 C680.0,516.3 670.0,514.3 660.0,512.3 C650.0,510.2 640.0,508.1 630.0,505.9 C620.0,503.7 610.0,501.4 600.0,499.0 C590.0,496.6 580.0,494.2 570.0,491.6 C560.0,489.0 550.0,486.3 540.0,483.5 C530.0,480.7 520.0,477.8 510.0,474.8 C500.0,471.8 490.0,468.7 480.0,465.4 C470.0,462.1 460.0,458.7 450.0,455.2 C440.0,451.7 430.0,448.0 420.0,444.2 C410.0,440.4 400.0,436.5 390.0,432.4 C380.0,428.3 370.0,424.0 360.0,419.6 C350.0,415.2 340.0,410.6 330.0,405.9 C320.0,401.2 310.0,396.2 300.0,391.2 C290.0,386.1 280.0,381.0 270.0,375.6 C260.0,370.2 250.0,364.7 240.0,359.0 C230.0,353.3 220.0,347.5 210.0,341.6 C200.0,335.7 187.9,328.0 180.0,323.4 C172.1,318.8 168.8,317.5 162.7,313.8 C156.6,310.1 148.0,304.6 143.4,301.0 C138.8,297.4 136.7,297.4 134.9,292.5 C133.1,287.6 132.4,276.7 132.4,271.6Z"/></clipPath><g clip-path="url(#vp)"><polygon points="-266.0,344.0 166.2,169.8 530.0,258.0 143.3,506.3" fill="#a1a7ae"/><path d="M-263.5,343.0L145.6,504.8M-264.6,344.6L167.6,170.1M-261.1,342.0L147.9,503.3M-263.1,345.1L168.9,170.5M-258.6,341.0L150.2,501.8M-261.7,345.7L170.3,170.8M-256.2,340.1L152.5,500.4M-260.2,346.3L171.6,171.1M-253.8,339.1L154.8,498.9M-258.8,346.9L173.0,171.4M-251.4,338.1L157.1,497.4M-257.3,347.4L174.3,171.8M-248.9,337.1L159.4,496.0M-255.9,348.0L175.7,172.1M-244.1,335.2L163.9,493.1M-253.0,349.2L178.4,172.8M-241.7,334.2L166.1,491.6M-251.5,349.8L179.8,173.1M-239.3,333.3L168.4,490.2M-250.0,350.3L181.1,173.4M-236.9,332.3L170.6,488.8M-248.6,350.9L182.5,173.8M-234.6,331.3L172.8,487.3M-247.1,351.5L183.9,174.1M-232.2,330.4L175.1,485.9M-245.6,352.1L185.2,174.4M-229.8,329.4L177.3,484.5M-244.2,352.7L186.6,174.8M-225.1,327.5L181.7,481.7M-241.2,353.8L189.4,175.4M-222.8,326.6L183.9,480.2M-239.7,354.4L190.8,175.8M-220.4,325.6L186.1,478.8M-238.2,355.0L192.1,176.1M-218.1,324.7L188.2,477.4M-236.8,355.6L193.5,176.4M-215.8,323.8L190.4,476.1M-235.3,356.2L194.9,176.8M-213.5,322.8L192.6,474.7M-233.8,356.8L196.3,177.1M-211.1,321.9L194.7,473.3M-232.3,357.4L197.7,177.4M-206.5,320.0L199.0,470.5M-229.3,358.6L200.4,178.1M-204.2,319.1L201.1,469.2M-227.8,359.1L201.8,178.4M-201.9,318.2L203.3,467.8M-226.3,359.7L203.2,178.8M-199.7,317.3L205.4,466.4M-224.8,360.3L204.6,179.1M-197.4,316.3L207.5,465.1M-223.3,360.9L206.0,179.5M-195.1,315.4L209.6,463.7M-221.8,361.5L207.4,179.8M-192.8,314.5L211.7,462.4M-220.3,362.1L208.8,180.1M-188.3,312.7L215.9,459.7M-217.2,363.3L211.6,180.8M-186.1,311.8L218.0,458.4M-215.7,363.9L213.0,181.2M-183.8,310.9L220.0,457.0M-214.2,364.5L214.4,181.5M-181.6,310.0L222.1,455.7M-212.7,365.1L215.8,181.8M-179.4,309.1L224.2,454.4M-211.1,365.8L217.3,182.2M-177.2,308.2L226.2,453.1M-209.6,366.4L218.7,182.5M-174.9,307.3L228.3,451.7M-208.1,367.0L220.1,182.9M-170.5,305.5L232.3,449.1M-205.0,368.2L222.9,183.6M-168.3,304.6L234.4,447.8M-203.5,368.8L224.3,183.9M-166.1,303.7L236.4,446.5M-201.9,369.4L225.8,184.2M-163.9,302.9L238.4,445.2M-200.4,370.0L227.2,184.6M-161.7,302.0L240.4,443.9M-198.8,370.6L228.6,184.9M-159.6,301.1L242.4,442.7M-197.3,371.2L230.0,185.3M-157.4,300.2L244.4,441.4M-195.7,371.9L231.5,185.6M-153.1,298.5L248.4,438.8M-192.6,373.1L234.3,186.3M-150.9,297.6L250.4,437.6M-191.1,373.7L235.8,186.7M-148.8,296.7L252.3,436.3M-189.5,374.3L237.2,187.0M-146.6,295.9L254.3,435.0M-188.0,374.9L238.6,187.4M-144.5,295.0L256.3,433.8M-186.4,375.6L240.1,187.7M-142.3,294.2L258.2,432.5M-184.8,376.2L241.5,188.1M-140.2,293.3L260.2,431.3M-183.2,376.8L242.9,188.4M-136.0,291.6L264.0,428.8M-180.1,378.1L245.8,189.1M-133.9,290.7L266.0,427.5M-178.5,378.7L247.3,189.5M-131.8,289.9L267.9,426.3M-176.9,379.3L248.7,189.8M-129.7,289.0L269.8,425.1M-175.3,379.9L250.2,190.2M-127.6,288.2L271.7,423.8M-173.8,380.6L251.6,190.5M-125.5,287.4L273.6,422.6M-172.2,381.2L253.1,190.9M-123.4,286.5L275.5,421.4M-170.6,381.8L254.6,191.2M-119.2,284.8L279.3,419.0M-167.4,383.1L257.5,191.9M-117.2,284.0L281.2,417.8M-165.8,383.7L258.9,192.3M-115.1,283.2L283.0,416.6M-164.2,384.4L260.4,192.6M-113.0,282.4L284.9,415.4M-162.6,385.0L261.9,193.0M-111.0,281.5L286.8,414.2M-161.0,385.7L263.3,193.3M-108.9,280.7L288.6,413.0M-159.3,386.3L264.8,193.7M-106.9,279.9L290.5,411.8M-157.7,386.9L266.3,194.1M-102.8,278.2L294.2,409.4M-154.5,388.2L269.2,194.8M-100.8,277.4L296.0,408.2M-152.9,388.9L270.7,195.1M-98.8,276.6L297.9,407.1M-151.2,389.5L272.2,195.5M-96.8,275.8L299.7,405.9M-149.6,390.2L273.7,195.9M-94.7,275.0L301.5,404.7M-148.0,390.8L275.1,196.2M-92.7,274.2L303.3,403.6M-146.3,391.4L276.6,196.6M-90.7,273.4L305.1,402.4M-144.7,392.1L278.1,196.9M-86.7,271.8L308.7,400.1M-141.4,393.4L281.1,197.7M-84.8,271.0L310.5,398.9M-139.8,394.0L282.6,198.0M-82.8,270.2L312.3,397.8M-138.1,394.7L284.1,198.4M-80.8,269.4L314.1,396.6M-136.5,395.4L285.6,198.7M-78.8,268.6L315.9,395.5M-134.8,396.0L287.1,199.1M-76.9,267.8L317.6,394.4M-133.2,396.7L288.6,199.5M-74.9,267.0L319.4,393.2M-131.5,397.3L290.1,199.8M-71.0,265.4L322.9,391.0M-128.2,398.6L293.1,200.6M-69.0,264.6L324.7,389.8M-126.5,399.3L294.6,200.9M-67.1,263.8L326.4,388.7M-124.8,400.0L296.1,201.3M-65.2,263.0L328.2,387.6M-123.2,400.6L297.6,201.7M-63.2,262.3L329.9,386.5M-121.5,401.3L299.1,202.0M-61.3,261.5L331.6,385.4M-119.8,402.0L300.6,202.4M-59.4,260.7L333.3,384.3M-118.1,402.6L302.1,202.8M-55.5,259.2L336.8,382.1M-114.8,404.0L305.2,203.5M-53.6,258.4L338.5,381.0M-113.1,404.6L306.7,203.9M-51.7,257.6L340.2,379.9M-111.4,405.3L308.2,204.2M-49.8,256.9L341.9,378.8M-109.7,406.0L309.8,204.6M-47.9,256.1L343.6,377.7M-108.0,406.7L311.3,205.0M-46.0,255.3L345.3,376.6M-106.3,407.3L312.8,205.3M-44.1,254.6L347.0,375.5M-104.6,408.0L314.4,205.7M-40.4,253.1L350.3,373.4M-101.2,409.4L317.4,206.5M-38.5,252.3L352.0,372.3M-99.4,410.0L319.0,206.8M-36.6,251.6L353.7,371.2M-97.7,410.7L320.5,207.2M-34.8,250.8L355.3,370.2M-96.0,411.4L322.0,207.6M-32.9,250.1L357.0,369.1M-94.3,412.1L323.6,208.0M-31.1,249.3L358.6,368.0M-92.6,412.8L325.1,208.3M-29.2,248.6L360.3,367.0M-90.8,413.5L326.7,208.7M-25.5,247.1L363.6,364.9M-87.4,414.8L329.8,209.5M-23.7,246.3L365.2,363.8M-85.6,415.5L331.3,209.8M-21.8,245.6L366.8,362.8M-83.9,416.2L332.9,210.2M-20.0,244.9L368.4,361.7M-82.1,416.9L334.5,210.6M-18.2,244.1L370.1,360.7M-80.4,417.6L336.0,211.0M-16.4,243.4L371.7,359.7M-78.6,418.3L337.6,211.3M-14.5,242.7L373.3,358.6M-76.9,419.0L339.1,211.7M-10.9,241.2L376.5,356.6M-73.4,420.4L342.3,212.5M-9.1,240.5L378.1,355.5M-71.6,421.1L343.8,212.9M-7.3,239.7L379.7,354.5M-69.8,421.8L345.4,213.2M-5.5,239.0L381.3,353.5M-68.1,422.5L347.0,213.6M-3.7,238.3L382.9,352.5M-66.3,423.2L348.6,214.0M-2.0,237.6L384.4,351.5M-64.5,423.9L350.1,214.4M-0.2,236.9L386.0,350.5M-62.7,424.6L351.7,214.8M3.4,235.4L389.1,348.4M-59.2,426.0L354.9,215.5M5.2,234.7L390.7,347.4M-57.4,426.7L356.5,215.9M6.9,234.0L392.3,346.4M-55.6,427.4L358.1,216.3M8.7,233.3L393.8,345.4M-53.8,428.1L359.7,216.7M10.4,232.6L395.4,344.4M-52.0,428.9L361.3,217.1M12.2,231.9L396.9,343.5M-50.2,429.6L362.9,217.5M13.9,231.2L398.5,342.5M-48.4,430.3L364.4,217.9M17.4,229.8L401.5,340.5M-44.8,431.7L367.6,218.6M19.2,229.1L403.0,339.5M-43.0,432.4L369.3,219.0M20.9,228.4L404.6,338.5M-41.1,433.2L370.9,219.4M22.6,227.7L406.1,337.6M-39.3,433.9L372.5,219.8M24.4,227.0L407.6,336.6M-37.5,434.6L374.1,220.2M26.1,226.3L409.1,335.6M-35.7,435.3L375.7,220.6M27.8,225.6L410.6,334.7M-33.8,436.1L377.3,221.0M31.2,224.2L413.6,332.7M-30.2,437.5L380.5,221.8M32.9,223.5L415.1,331.8M-28.3,438.2L382.2,222.2M34.6,222.8L416.6,330.8M-26.5,439.0L383.8,222.6M36.3,222.2L418.1,329.9M-24.6,439.7L385.4,222.9M38.0,221.5L419.6,328.9M-22.8,440.4L387.0,223.3M39.7,220.8L421.1,328.0M-20.9,441.2L388.7,223.7M41.4,220.1L422.5,327.0M-19.1,441.9L390.3,224.1M44.7,218.8L425.5,325.1M-15.4,443.4L393.6,224.9M46.4,218.1L426.9,324.2M-13.5,444.1L395.2,225.3M48.1,217.4L428.4,323.2M-11.6,444.9L396.8,225.7M49.8,216.7L429.8,322.3M-9.8,445.6L398.5,226.1M51.4,216.1L431.3,321.4M-7.9,446.4L400.1,226.5M53.1,215.4L432.7,320.5M-6.0,447.1L401.8,226.9M54.7,214.7L434.2,319.5M-4.1,447.8L403.4,227.3M58.0,213.4L437.0,317.7M-0.3,449.3L406.7,228.1M59.7,212.7L438.5,316.8M1.6,450.1L408.4,228.5M61.3,212.1L439.9,315.8M3.5,450.8L410.0,228.9M63.0,211.4L441.3,314.9M5.4,451.6L411.7,229.3M64.6,210.8L442.8,314.0M7.3,452.4L413.4,229.7M66.2,210.1L444.2,313.1M9.2,453.1L415.0,230.1M67.8,209.4L445.6,312.2M11.1,453.9L416.7,230.5M71.1,208.1L448.4,310.4M14.9,455.4L420.0,231.3M72.7,207.5L449.8,309.5M16.8,456.2L421.7,231.7M74.3,206.8L451.2,308.6M18.8,456.9L423.4,232.2M75.9,206.2L452.6,307.7M20.7,457.7L425.1,232.6M77.5,205.5L454.0,306.8M22.6,458.4L426.7,233.0M79.1,204.9L455.4,305.9M24.6,459.2L428.4,233.4M80.7,204.3L456.7,305.0M26.5,460.0L430.1,233.8M83.9,203.0L459.5,303.3M30.4,461.5L433.5,234.6M85.5,202.3L460.9,302.4M32.3,462.3L435.2,235.0M87.1,201.7L462.2,301.5M34.3,463.1L436.9,235.4M88.6,201.1L463.6,300.6M36.2,463.8L438.6,235.8M90.2,200.4L465.0,299.8M38.2,464.6L440.3,236.2M91.8,199.8L466.3,298.9M40.2,465.4L442.0,236.7M93.4,199.2L467.7,298.0M42.1,466.2L443.7,237.1M96.5,197.9L470.4,296.3M46.1,467.8L447.1,237.9M98.0,197.3L471.7,295.4M48.1,468.5L448.8,238.3M99.6,196.6L473.1,294.6M50.1,469.3L450.5,238.7M101.2,196.0L474.4,293.7M52.0,470.1L452.2,239.1M102.7,195.4L475.7,292.8M54.0,470.9L453.9,239.6M104.2,194.8L477.1,292.0M56.0,471.7L455.6,240.0M105.8,194.1L478.4,291.1M58.0,472.5L457.4,240.4M108.9,192.9L481.0,289.4M62.0,474.1L460.8,241.2M110.4,192.3L482.3,288.6M64.0,474.9L462.5,241.6M111.9,191.7L483.7,287.8M66.1,475.7L464.3,242.1M113.4,191.1L485.0,286.9M68.1,476.5L466.0,242.5M115.0,190.5L486.3,286.1M70.1,477.3L467.7,242.9M116.5,189.8L487.6,285.2M72.1,478.1L469.5,243.3M118.0,189.2L488.9,284.4M74.1,478.9L471.2,243.7M121.0,188.0L491.5,282.7M78.2,480.5L474.7,244.6M122.5,187.4L492.8,281.9M80.3,481.3L476.4,245.0M124.0,186.8L494.0,281.1M82.3,482.1L478.2,245.4M125.5,186.2L495.3,280.3M84.3,482.9L480.0,245.9M127.0,185.6L496.6,279.4M86.4,483.7L481.7,246.3M128.5,185.0L497.9,278.6M88.5,484.6L483.5,246.7M130.0,184.4L499.2,277.8M90.5,485.4L485.2,247.1M133.0,183.2L501.7,276.2M94.6,487.0L488.7,248.0M134.4,182.6L503.0,275.4M96.7,487.8L490.5,248.4M135.9,182.0L504.2,274.6M98.8,488.6L492.3,248.9M137.4,181.4L505.5,273.7M100.9,489.5L494.1,249.3M138.9,180.8L506.7,272.9M102.9,490.3L495.8,249.7M140.3,180.2L508.0,272.1M105.0,491.1L497.6,250.1M141.8,179.6L509.2,271.3M107.1,492.0L499.4,250.6M144.7,178.5L511.7,269.7M111.3,493.6L502.9,251.4M146.2,177.9L513.0,268.9M113.4,494.5L504.7,251.9M147.6,177.3L514.2,268.1M115.5,495.3L506.5,252.3M149.1,176.7L515.4,267.4M117.6,496.1L508.3,252.7M150.5,176.1L516.7,266.6M119.8,497.0L510.1,253.2M151.9,175.5L517.9,265.8M121.9,497.8L511.9,253.6M153.4,175.0L519.1,265.0M124.0,498.6L513.7,254.0M156.3,173.8L521.6,263.4M128.3,500.3L517.3,254.9M157.7,173.2L522.8,262.6M130.4,501.2L519.1,255.4M159.1,172.7L524.0,261.9M132.5,502.0L520.9,255.8M160.5,172.1L525.2,261.1M134.7,502.9L522.7,256.2M162.0,171.5L526.4,260.3M136.8,503.7L524.5,256.7M163.4,170.9L527.6,259.5M139.0,504.6L526.4,257.1M164.8,170.4L528.8,258.8M141.1,505.4L528.2,257.6" stroke="#939aa1" stroke-width="0.45" fill="none"/><path d="M-266.0,344.0L143.3,506.3M-266.0,344.0L166.2,169.8M-246.5,336.2L161.6,494.5M-254.4,348.6L177.0,172.4M-227.5,328.5L179.5,483.1M-242.7,353.2L188.0,175.1M-208.8,321.0L196.9,471.9M-230.8,358.0L199.1,177.8M-190.6,313.6L213.8,461.0M-218.8,362.7L210.2,180.5M-172.7,306.4L230.3,450.4M-206.6,367.6L221.5,183.2M-155.2,299.4L246.4,440.1M-194.2,372.5L232.9,186.0M-138.1,292.4L262.1,430.0M-181.7,377.4L244.4,188.8M-121.3,285.7L277.4,420.2M-169.0,382.5L256.0,191.6M-104.9,279.1L292.3,410.6M-156.1,387.6L267.7,194.4M-88.7,272.6L306.9,401.2M-143.1,392.7L279.6,197.3M-72.9,266.2L321.2,392.1M-129.9,398.0L291.6,200.2M-57.4,259.9L335.1,383.2M-116.5,403.3L303.7,203.1M-42.3,253.8L348.6,374.4M-102.9,408.7L315.9,206.1M-27.4,247.8L361.9,365.9M-89.1,414.1L328.2,209.1M-12.7,241.9L374.9,357.6M-75.1,419.7L340.7,212.1M1.6,236.1L387.6,349.4M-61.0,425.3L353.3,215.2M15.7,230.5L400.0,341.5M-46.6,431.0L366.0,218.3M29.5,224.9L412.1,333.7M-32.0,436.8L378.9,221.4M43.1,219.4L424.0,326.1M-17.2,442.6L391.9,224.5M56.4,214.1L435.6,318.6M-2.2,448.6L405.1,227.7M69.5,208.8L447.0,311.3M13.0,454.6L418.4,230.9M82.3,203.6L458.1,304.2M28.4,460.8L431.8,234.2M94.9,198.5L469.0,297.1M44.1,467.0L445.4,237.5M107.3,193.5L479.7,290.3M60.0,473.3L459.1,240.8M119.5,188.6L490.2,283.6M76.2,479.7L473.0,244.2M131.5,183.8L500.4,277.0M92.6,486.2L487.0,247.6M143.3,179.0L510.5,270.5M109.2,492.8L501.2,251.0M154.8,174.4L520.3,264.2M126.1,499.5L515.5,254.5M166.2,169.8L530.0,258.0M143.3,506.3L530.0,258.0" stroke="#7a8088" stroke-width="0.95" fill="none"/><path d="M272,241 L334.6,210.8" stroke="#3aa03a" stroke-width="1.5"/><g clip-path="url(#sil)"><defs><linearGradient id="g0" gradientUnits="userSpaceOnUse" x1="137.0" y1="255.0" x2="117.74" y2="289.13"><stop offset="0.000" stop-color="#600608"/><stop offset="0.071" stop-color="#600608"/><stop offset="0.084" stop-color="#a32127"/><stop offset="0.363" stop-color="#b1292f"/><stop offset="0.510" stop-color="#c0383e"/><stop offset="0.695" stop-color="#a61f27"/><stop offset="0.889" stop-color="#93151a"/><stop offset="0.916" stop-color="#881014"/><stop offset="1.000" stop-color="#7a0c10"/></linearGradient><linearGradient id="g1" gradientUnits="userSpaceOnUse" x1="145.0" y1="251.2" x2="121.16" y2="290.87"><stop offset="0.000" stop-color="#600608"/><stop offset="0.098" stop-color="#600608"/><stop offset="0.104" stop-color="#a12026"/><stop offset="0.286" stop-color="#a62329"/><stop offset="0.474" stop-color="#b32b31"/><stop offset="0.600" stop-color="#c0383e"/><stop offset="0.756" stop-color="#a61f26"/><stop offset="0.913" stop-color="#94161b"/><stop offset="0.944" stop-color="#881014"/><stop offset="1.000" stop-color="#7a0c10"/></linearGradient><linearGradient id="g2" gradientUnits="userSpaceOnUse" x1="153.0" y1="247.6" x2="123.18" y2="289.32"><stop offset="0.011" stop-color="#600608"/><stop offset="0.089" stop-color="#600608"/><stop offset="0.121" stop-color="#b02a30"/><stop offset="0.200" stop-color="#991b21"/><stop offset="0.291" stop-color="#8f1419"/><stop offset="0.302" stop-color="#a22027"/><stop offset="0.522" stop-color="#af282e"/><stop offset="0.657" stop-color="#c13940"/><stop offset="0.778" stop-color="#a82028"/><stop offset="0.925" stop-color="#94161c"/><stop offset="0.952" stop-color="#881014"/></linearGradient><linearGradient id="g3" gradientUnits="userSpaceOnUse" x1="161.0" y1="244.4" x2="130.58" y2="298.74"><stop offset="0.009" stop-color="#600608"/><stop offset="0.078" stop-color="#600608"/><stop offset="0.107" stop-color="#b02a30"/><stop offset="0.175" stop-color="#991b21"/><stop offset="0.301" stop-color="#860e13"/><stop offset="0.389" stop-color="#6c080c"/><stop offset="0.395" stop-color="#6b080b"/><stop offset="0.403" stop-color="#a42127"/><stop offset="0.579" stop-color="#af282e"/><stop offset="0.673" stop-color="#c1393f"/><stop offset="0.697" stop-color="#c33b41"/><stop offset="0.792" stop-color="#ab2129"/><stop offset="0.934" stop-color="#95171c"/><stop offset="0.958" stop-color="#881014"/><stop offset="1.000" stop-color="#7a0c10"/></linearGradient><linearGradient id="g4" gradientUnits="userSpaceOnUse" x1="169.0" y1="240.1" x2="138.42" y2="306.22"><stop offset="0.000" stop-color="#600608"/><stop offset="0.070" stop-color="#600608"/><stop offset="0.095" stop-color="#b02a30"/><stop offset="0.153" stop-color="#991c22"/><stop offset="0.260" stop-color="#880f14"/><stop offset="0.345" stop-color="#800b10"/><stop offset="0.485" stop-color="#6a080b"/><stop offset="0.488" stop-color="#a62228"/><stop offset="0.622" stop-color="#b0282e"/><stop offset="0.707" stop-color="#c23a41"/><stop offset="0.728" stop-color="#c33b42"/><stop offset="0.813" stop-color="#ab2129"/><stop offset="0.941" stop-color="#95171d"/><stop offset="0.963" stop-color="#881014"/></linearGradient><linearGradient id="g5" gradientUnits="userSpaceOnUse" x1="177.0" y1="236.4" x2="142.96" y2="308.62"><stop offset="0.000" stop-color="#600608"/><stop offset="0.064" stop-color="#600608"/><stop offset="0.086" stop-color="#b02a30"/><stop offset="0.136" stop-color="#9a1c22"/><stop offset="0.279" stop-color="#820c11"/><stop offset="0.419" stop-color="#7d0b0f"/><stop offset="0.539" stop-color="#6b080b"/><stop offset="0.546" stop-color="#a72228"/><stop offset="0.634" stop-color="#ac242a"/><stop offset="0.732" stop-color="#c43c43"/><stop offset="0.751" stop-color="#c43c43"/><stop offset="0.810" stop-color="#b0252c"/><stop offset="0.946" stop-color="#96181e"/><stop offset="0.966" stop-color="#881014"/><stop offset="1.000" stop-color="#7a0c10"/></linearGradient><linearGradient id="g6" gradientUnits="userSpaceOnUse" x1="185.0" y1="234.6" x2="147.13" y2="310.50"><stop offset="0.032" stop-color="#600608"/><stop offset="0.059" stop-color="#600608"/><stop offset="0.080" stop-color="#b02a30"/><stop offset="0.127" stop-color="#9a1c22"/><stop offset="0.264" stop-color="#820c11"/><stop offset="0.435" stop-color="#7e0b0f"/><stop offset="0.566" stop-color="#6a080b"/><stop offset="0.572" stop-color="#a82228"/><stop offset="0.656" stop-color="#ac242a"/><stop offset="0.729" stop-color="#c23a41"/><stop offset="0.748" stop-color="#c63e45"/><stop offset="0.766" stop-color="#c53c44"/><stop offset="0.821" stop-color="#af242b"/><stop offset="0.950" stop-color="#96181f"/><stop offset="0.968" stop-color="#881014"/></linearGradient><linearGradient id="g7" gradientUnits="userSpaceOnUse" x1="193.0" y1="233.5" x2="151.73" y2="312.78"><stop offset="0.030" stop-color="#600608"/><stop offset="0.056" stop-color="#600608"/><stop offset="0.075" stop-color="#b02a30"/><stop offset="0.119" stop-color="#9a1c22"/><stop offset="0.248" stop-color="#820c11"/><stop offset="0.445" stop-color="#7e0b0f"/><stop offset="0.582" stop-color="#6a080b"/><stop offset="0.585" stop-color="#a82128"/><stop offset="0.672" stop-color="#ad252b"/><stop offset="0.743" stop-color="#c43c43"/><stop offset="0.760" stop-color="#c73f47"/><stop offset="0.778" stop-color="#c53d44"/><stop offset="0.830" stop-color="#af232a"/><stop offset="0.953" stop-color="#96181f"/><stop offset="0.970" stop-color="#881014"/><stop offset="1.000" stop-color="#7a0c10"/></linearGradient><linearGradient id="g8" gradientUnits="userSpaceOnUse" x1="201.0" y1="233.0" x2="157.29" y2="316.22"><stop offset="0.000" stop-color="#600608"/><stop offset="0.053" stop-color="#600608"/><stop offset="0.072" stop-color="#b02a30"/><stop offset="0.113" stop-color="#9a1c22"/><stop offset="0.235" stop-color="#830c11"/><stop offset="0.452" stop-color="#7e0b10"/><stop offset="0.592" stop-color="#6a080b"/><stop offset="0.598" stop-color="#a82128"/><stop offset="0.687" stop-color="#ad252b"/><stop offset="0.754" stop-color="#c63e45"/><stop offset="0.778" stop-color="#ca424a"/><stop offset="0.837" stop-color="#af2229"/><stop offset="0.955" stop-color="#971920"/><stop offset="0.972" stop-color="#881014"/><stop offset="1.000" stop-color="#7a0c10"/></linearGradient><linearGradient id="g9" gradientUnits="userSpaceOnUse" x1="209.0" y1="232.7" x2="163.43" y2="320.29"><stop offset="0.000" stop-color="#600608"/><stop offset="0.050" stop-color="#600608"/><stop offset="0.068" stop-color="#b02a30"/><stop offset="0.111" stop-color="#991c21"/><stop offset="0.225" stop-color="#830c11"/><stop offset="0.456" stop-color="#7e0b10"/><stop offset="0.601" stop-color="#6a080b"/><stop offset="0.607" stop-color="#a92128"/><stop offset="0.682" stop-color="#aa2228"/><stop offset="0.715" stop-color="#b52d34"/><stop offset="0.747" stop-color="#c43c44"/><stop offset="0.779" stop-color="#cb434b"/><stop offset="0.811" stop-color="#bf343b"/><stop offset="0.844" stop-color="#af2229"/><stop offset="0.957" stop-color="#971921"/><stop offset="0.973" stop-color="#881014"/><stop offset="1.000" stop-color="#7a0c10"/></linearGradient><linearGradient id="g10" gradientUnits="userSpaceOnUse" x1="217.0" y1="232.9" x2="170.16" y2="324.87"><stop offset="0.000" stop-color="#600608"/><stop offset="0.048" stop-color="#600608"/><stop offset="0.066" stop-color="#b02a30"/><stop offset="0.111" stop-color="#981b21"/><stop offset="0.216" stop-color="#830c11"/><stop offset="0.473" stop-color="#7d0b0f"/><stop offset="0.610" stop-color="#6a080b"/><stop offset="0.614" stop-color="#ac252c"/><stop offset="0.692" stop-color="#ac252b"/><stop offset="0.755" stop-color="#c43c44"/><stop offset="0.786" stop-color="#c94149"/><stop offset="0.818" stop-color="#bd3239"/><stop offset="0.849" stop-color="#af2229"/><stop offset="0.958" stop-color="#971921"/><stop offset="0.974" stop-color="#881014"/><stop offset="1.000" stop-color="#7a0c10"/></linearGradient><linearGradient id="g11" gradientUnits="userSpaceOnUse" x1="225.0" y1="233.6" x2="177.50" y2="330.01"><stop offset="0.000" stop-color="#600608"/><stop offset="0.047" stop-color="#600608"/><stop offset="0.063" stop-color="#b02a30"/><stop offset="0.100" stop-color="#9a1c22"/><stop offset="0.209" stop-color="#830c11"/><stop offset="0.471" stop-color="#7e0b0f"/><stop offset="0.617" stop-color="#6a080b"/><stop offset="0.621" stop-color="#b02a31"/><stop offset="0.700" stop-color="#af282f"/><stop offset="0.761" stop-color="#c43b43"/><stop offset="0.792" stop-color="#c83f47"/><stop offset="0.853" stop-color="#ae2128"/><stop offset="0.960" stop-color="#971921"/><stop offset="0.975" stop-color="#881014"/><stop offset="1.000" stop-color="#7a0c10"/></linearGradient><linearGradient id="g12" gradientUnits="userSpaceOnUse" x1="233.0" y1="234.5" x2="185.39" y2="335.60"><stop offset="0.000" stop-color="#600608"/><stop offset="0.045" stop-color="#600608"/><stop offset="0.062" stop-color="#b02a30"/><stop offset="0.097" stop-color="#9a1c22"/><stop offset="0.202" stop-color="#830c11"/><stop offset="0.482" stop-color="#7d0b0f"/><stop offset="0.622" stop-color="#6a080b"/><stop offset="0.626" stop-color="#b32e36"/><stop offset="0.706" stop-color="#b22c32"/><stop offset="0.766" stop-color="#c33b43"/><stop offset="0.796" stop-color="#c63d45"/><stop offset="0.856" stop-color="#ad2128"/><stop offset="0.961" stop-color="#971921"/><stop offset="0.976" stop-color="#881014"/><stop offset="1.000" stop-color="#7a0c0f"/></linearGradient><linearGradient id="g13" gradientUnits="userSpaceOnUse" x1="241.0" y1="235.3" x2="193.20" y2="340.94"><stop offset="0.000" stop-color="#600608"/><stop offset="0.044" stop-color="#600608"/><stop offset="0.060" stop-color="#b02a30"/><stop offset="0.094" stop-color="#9a1c22"/><stop offset="0.196" stop-color="#830c11"/><stop offset="0.477" stop-color="#7e0b0f"/><stop offset="0.627" stop-color="#6a080b"/><stop offset="0.630" stop-color="#b7333b"/><stop offset="0.712" stop-color="#b42f36"/><stop offset="0.778" stop-color="#c33a42"/><stop offset="0.800" stop-color="#c43b42"/><stop offset="0.859" stop-color="#ad2128"/><stop offset="0.974" stop-color="#951820"/><stop offset="0.976" stop-color="#881014"/><stop offset="0.978" stop-color="#850f13"/></linearGradient><linearGradient id="g14" gradientUnits="userSpaceOnUse" x1="249.0" y1="236.1" x2="200.31" y2="345.38"><stop offset="0.000" stop-color="#600608"/><stop offset="0.043" stop-color="#600608"/><stop offset="0.058" stop-color="#b02a30"/><stop offset="0.092" stop-color="#9a1c22"/><stop offset="0.160" stop-color="#880f14"/><stop offset="0.225" stop-color="#830c11"/><stop offset="0.486" stop-color="#7d0b0f"/><stop offset="0.630" stop-color="#6a080b"/><stop offset="0.633" stop-color="#bb3840"/><stop offset="0.717" stop-color="#b7333a"/><stop offset="0.778" stop-color="#c23941"/><stop offset="0.804" stop-color="#c2373f"/><stop offset="0.847" stop-color="#b0242b"/><stop offset="0.963" stop-color="#971921"/><stop offset="0.977" stop-color="#881014"/><stop offset="1.000" stop-color="#7a0c0f"/></linearGradient><linearGradient id="g15" gradientUnits="userSpaceOnUse" x1="257.0" y1="236.9" x2="207.88" y2="350.22"><stop offset="0.022" stop-color="#600608"/><stop offset="0.042" stop-color="#600608"/><stop offset="0.056" stop-color="#b02a30"/><stop offset="0.089" stop-color="#9a1c22"/><stop offset="0.156" stop-color="#880f14"/><stop offset="0.225" stop-color="#830c11"/><stop offset="0.479" stop-color="#7e0b0f"/><stop offset="0.631" stop-color="#6a080b"/><stop offset="0.633" stop-color="#be3c45"/><stop offset="0.679" stop-color="#bd3b43"/><stop offset="0.721" stop-color="#ba363d"/><stop offset="0.778" stop-color="#c13840"/><stop offset="0.807" stop-color="#bf343c"/><stop offset="0.850" stop-color="#af232a"/><stop offset="0.963" stop-color="#971921"/><stop offset="0.978" stop-color="#880f13"/></linearGradient><linearGradient id="g16" gradientUnits="userSpaceOnUse" x1="265.0" y1="237.8" x2="215.83" y2="355.33"><stop offset="0.022" stop-color="#600608"/><stop offset="0.041" stop-color="#600608"/><stop offset="0.055" stop-color="#b02a30"/><stop offset="0.087" stop-color="#9a1c22"/><stop offset="0.152" stop-color="#880f14"/><stop offset="0.226" stop-color="#830c11"/><stop offset="0.483" stop-color="#7d0b0f"/><stop offset="0.631" stop-color="#6a080b"/><stop offset="0.633" stop-color="#c2414a"/><stop offset="0.682" stop-color="#c03e47"/><stop offset="0.722" stop-color="#be3940"/><stop offset="0.762" stop-color="#c1383f"/><stop offset="0.789" stop-color="#be343b"/><stop offset="0.842" stop-color="#ab2028"/><stop offset="0.949" stop-color="#941820"/><stop offset="0.951" stop-color="#870f13"/><stop offset="0.978" stop-color="#790b0f"/><stop offset="1.000" stop-color="#790b0f"/></linearGradient><linearGradient id="g17" gradientUnits="userSpaceOnUse" x1="273.0" y1="238.8" x2="223.91" y2="360.39"><stop offset="0.021" stop-color="#600608"/><stop offset="0.040" stop-color="#600608"/><stop offset="0.054" stop-color="#b02a30"/><stop offset="0.085" stop-color="#9a1c22"/><stop offset="0.148" stop-color="#880f14"/><stop offset="0.226" stop-color="#830c11"/><stop offset="0.488" stop-color="#7d0b0f"/><stop offset="0.633" stop-color="#6a080b"/><stop offset="0.635" stop-color="#c6464f"/><stop offset="0.670" stop-color="#c5454e"/><stop offset="0.722" stop-color="#c03c43"/><stop offset="0.778" stop-color="#be333b"/><stop offset="0.839" stop-color="#ab2027"/><stop offset="0.943" stop-color="#941820"/><stop offset="0.945" stop-color="#870f13"/><stop offset="0.979" stop-color="#790b0f"/><stop offset="1.000" stop-color="#790b0f"/></linearGradient><linearGradient id="g18" gradientUnits="userSpaceOnUse" x1="281.0" y1="239.7" x2="232.21" y2="365.51"><stop offset="0.021" stop-color="#600608"/><stop offset="0.039" stop-color="#600608"/><stop offset="0.052" stop-color="#b02a30"/><stop offset="0.083" stop-color="#9a1c22"/><stop offset="0.145" stop-color="#880f14"/><stop offset="0.226" stop-color="#830c11"/><stop offset="0.479" stop-color="#7e0b10"/><stop offset="0.634" stop-color="#6a080b"/><stop offset="0.636" stop-color="#c94b54"/><stop offset="0.670" stop-color="#c94a53"/><stop offset="0.721" stop-color="#c23e46"/><stop offset="0.785" stop-color="#ba2f36"/><stop offset="0.823" stop-color="#ae2229"/><stop offset="0.938" stop-color="#941820"/><stop offset="0.940" stop-color="#870f13"/><stop offset="0.979" stop-color="#790b0f"/><stop offset="1.000" stop-color="#790b0f"/></linearGradient><linearGradient id="g19" gradientUnits="userSpaceOnUse" x1="289.0" y1="240.7" x2="240.43" y2="370.40"><stop offset="0.000" stop-color="#600608"/><stop offset="0.038" stop-color="#600608"/><stop offset="0.051" stop-color="#b02a30"/><stop offset="0.081" stop-color="#9a1c22"/><stop offset="0.142" stop-color="#880f14"/><stop offset="0.226" stop-color="#830c11"/><stop offset="0.483" stop-color="#7d0b0f"/><stop offset="0.634" stop-color="#6a080b"/><stop offset="0.636" stop-color="#cd4f59"/><stop offset="0.670" stop-color="#cc4e58"/><stop offset="0.770" stop-color="#bc3138"/><stop offset="0.807" stop-color="#b0232b"/><stop offset="0.932" stop-color="#941820"/><stop offset="0.934" stop-color="#870f13"/><stop offset="0.980" stop-color="#790b0f"/></linearGradient><linearGradient id="g20" gradientUnits="userSpaceOnUse" x1="297.0" y1="241.8" x2="248.61" y2="375.12"><stop offset="0.020" stop-color="#600608"/><stop offset="0.037" stop-color="#600608"/><stop offset="0.050" stop-color="#b02a30"/><stop offset="0.080" stop-color="#9a1c22"/><stop offset="0.139" stop-color="#880f14"/><stop offset="0.225" stop-color="#830c11"/><stop offset="0.486" stop-color="#7d0b0f"/><stop offset="0.634" stop-color="#6a080b"/><stop offset="0.636" stop-color="#d1545e"/><stop offset="0.669" stop-color="#d0535d"/><stop offset="0.755" stop-color="#be343c"/><stop offset="0.804" stop-color="#af2229"/><stop offset="0.924" stop-color="#941820"/><stop offset="0.926" stop-color="#880f13"/><stop offset="0.980" stop-color="#790b0e"/><stop offset="1.000" stop-color="#790b0e"/></linearGradient><linearGradient id="g21" gradientUnits="userSpaceOnUse" x1="305.0" y1="242.9" x2="256.90" y2="379.82"><stop offset="0.019" stop-color="#600608"/><stop offset="0.036" stop-color="#600608"/><stop offset="0.049" stop-color="#b02a30"/><stop offset="0.078" stop-color="#9a1c22"/><stop offset="0.137" stop-color="#890f14"/><stop offset="0.225" stop-color="#830c11"/><stop offset="0.488" stop-color="#7d0b0f"/><stop offset="0.632" stop-color="#6a080b"/><stop offset="0.633" stop-color="#d25660"/><stop offset="0.668" stop-color="#d1555f"/><stop offset="0.752" stop-color="#be343c"/><stop offset="0.800" stop-color="#ae2128"/><stop offset="0.918" stop-color="#941820"/><stop offset="0.920" stop-color="#880f13"/><stop offset="0.980" stop-color="#790b0e"/><stop offset="1.000" stop-color="#790b0e"/></linearGradient><linearGradient id="g22" gradientUnits="userSpaceOnUse" x1="313.0" y1="244.0" x2="264.98" y2="384.23"><stop offset="0.000" stop-color="#600608"/><stop offset="0.036" stop-color="#600608"/><stop offset="0.049" stop-color="#b02a30"/><stop offset="0.077" stop-color="#9a1c22"/><stop offset="0.134" stop-color="#890f14"/><stop offset="0.224" stop-color="#830c11"/><stop offset="0.478" stop-color="#7e0b0f"/><stop offset="0.628" stop-color="#6a080b"/><stop offset="0.631" stop-color="#d35761"/><stop offset="0.667" stop-color="#d2555f"/><stop offset="0.773" stop-color="#b52930"/><stop offset="0.809" stop-color="#ab2027"/><stop offset="0.915" stop-color="#94181f"/><stop offset="0.917" stop-color="#880f13"/><stop offset="0.981" stop-color="#790b0e"/></linearGradient><linearGradient id="g23" gradientUnits="userSpaceOnUse" x1="321.0" y1="245.2" x2="272.83" y2="388.39"><stop offset="0.019" stop-color="#600608"/><stop offset="0.035" stop-color="#600608"/><stop offset="0.048" stop-color="#b02a30"/><stop offset="0.075" stop-color="#9a1c22"/><stop offset="0.132" stop-color="#890f14"/><stop offset="0.223" stop-color="#830c11"/><stop offset="0.479" stop-color="#7d0b0f"/><stop offset="0.625" stop-color="#6a080b"/><stop offset="0.629" stop-color="#d45862"/><stop offset="0.667" stop-color="#d2555f"/><stop offset="0.759" stop-color="#b82e35"/><stop offset="0.794" stop-color="#ad2128"/><stop offset="0.909" stop-color="#94181f"/><stop offset="0.911" stop-color="#880f13"/><stop offset="0.981" stop-color="#790b0e"/><stop offset="1.000" stop-color="#790b0e"/></linearGradient><linearGradient id="g24" gradientUnits="userSpaceOnUse" x1="329.0" y1="246.4" x2="280.64" y2="392.40"><stop offset="0.000" stop-color="#600608"/><stop offset="0.035" stop-color="#600608"/><stop offset="0.047" stop-color="#b02a30"/><stop offset="0.074" stop-color="#9a1c22"/><stop offset="0.130" stop-color="#890f14"/><stop offset="0.223" stop-color="#830c11"/><stop offset="0.481" stop-color="#7d0b0f"/><stop offset="0.623" stop-color="#6a080b"/><stop offset="0.627" stop-color="#d55962"/><stop offset="0.665" stop-color="#d3565f"/><stop offset="0.769" stop-color="#b4282f"/><stop offset="0.803" stop-color="#aa2027"/><stop offset="0.905" stop-color="#94171f"/><stop offset="0.907" stop-color="#880f13"/><stop offset="0.982" stop-color="#790b0e"/></linearGradient><linearGradient id="g25" gradientUnits="userSpaceOnUse" x1="337.0" y1="247.7" x2="288.29" y2="396.21"><stop offset="0.018" stop-color="#600608"/><stop offset="0.034" stop-color="#600608"/><stop offset="0.046" stop-color="#b02a30"/><stop offset="0.073" stop-color="#9a1c22"/><stop offset="0.128" stop-color="#890f14"/><stop offset="0.222" stop-color="#830c11"/><stop offset="0.471" stop-color="#7e0b10"/><stop offset="0.622" stop-color="#6a080b"/><stop offset="0.626" stop-color="#d65a63"/><stop offset="0.653" stop-color="#d65a63"/><stop offset="0.756" stop-color="#b72d34"/><stop offset="0.790" stop-color="#ac2128"/><stop offset="0.902" stop-color="#93171e"/><stop offset="0.904" stop-color="#880f13"/><stop offset="0.982" stop-color="#790b0e"/><stop offset="1.000" stop-color="#790b0e"/></linearGradient><linearGradient id="g26" gradientUnits="userSpaceOnUse" x1="345.0" y1="249.0" x2="295.99" y2="399.96"><stop offset="0.018" stop-color="#600608"/><stop offset="0.034" stop-color="#600608"/><stop offset="0.046" stop-color="#b02a30"/><stop offset="0.072" stop-color="#9a1c22"/><stop offset="0.126" stop-color="#890f14"/><stop offset="0.222" stop-color="#830c11"/><stop offset="0.472" stop-color="#7e0b0f"/><stop offset="0.621" stop-color="#6a080b"/><stop offset="0.625" stop-color="#d65a64"/><stop offset="0.653" stop-color="#d65a64"/><stop offset="0.755" stop-color="#b72d34"/><stop offset="0.778" stop-color="#ae2329"/><stop offset="0.900" stop-color="#93171e"/><stop offset="0.902" stop-color="#880f13"/><stop offset="0.982" stop-color="#790b0e"/></linearGradient><linearGradient id="g27" gradientUnits="userSpaceOnUse" x1="353.0" y1="250.3" x2="303.59" y2="403.55"><stop offset="0.000" stop-color="#600608"/><stop offset="0.033" stop-color="#600608"/><stop offset="0.045" stop-color="#b02a30"/><stop offset="0.071" stop-color="#9a1c22"/><stop offset="0.124" stop-color="#890f14"/><stop offset="0.148" stop-color="#850d12"/><stop offset="0.473" stop-color="#7d0b0f"/><stop offset="0.621" stop-color="#6a080b"/><stop offset="0.625" stop-color="#d75b65"/><stop offset="0.654" stop-color="#d75a64"/><stop offset="0.766" stop-color="#b2272e"/><stop offset="0.789" stop-color="#ab2128"/><stop offset="0.902" stop-color="#92161d"/><stop offset="0.903" stop-color="#880f13"/><stop offset="0.982" stop-color="#790b0d"/></linearGradient><linearGradient id="g28" gradientUnits="userSpaceOnUse" x1="361.0" y1="251.7" x2="311.22" y2="407.10"><stop offset="0.018" stop-color="#600608"/><stop offset="0.033" stop-color="#600608"/><stop offset="0.044" stop-color="#b02a30"/><stop offset="0.070" stop-color="#9a1c22"/><stop offset="0.123" stop-color="#890f14"/><stop offset="0.146" stop-color="#850d12"/><stop offset="0.475" stop-color="#7d0b0f"/><stop offset="0.621" stop-color="#6a080b"/><stop offset="0.624" stop-color="#d85c65"/><stop offset="0.655" stop-color="#d75b64"/><stop offset="0.688" stop-color="#cc4a52"/><stop offset="0.779" stop-color="#ac2229"/><stop offset="0.901" stop-color="#93161d"/><stop offset="0.902" stop-color="#880f13"/><stop offset="0.982" stop-color="#790b0d"/><stop offset="1.000" stop-color="#790b0d"/></linearGradient><linearGradient id="g29" gradientUnits="userSpaceOnUse" x1="369.0" y1="253.0" x2="318.81" y2="410.54"><stop offset="0.000" stop-color="#600608"/><stop offset="0.032" stop-color="#600608"/><stop offset="0.044" stop-color="#b02a30"/><stop offset="0.069" stop-color="#9a1c22"/><stop offset="0.121" stop-color="#890f14"/><stop offset="0.144" stop-color="#850d12"/><stop offset="0.476" stop-color="#7d0b0f"/><stop offset="0.622" stop-color="#6a080b"/><stop offset="0.624" stop-color="#d95d66"/><stop offset="0.655" stop-color="#d75b64"/><stop offset="0.712" stop-color="#c43d45"/><stop offset="0.779" stop-color="#ac2228"/><stop offset="0.902" stop-color="#92161c"/><stop offset="0.904" stop-color="#880f12"/><stop offset="0.983" stop-color="#790b0d"/></linearGradient><linearGradient id="g30" gradientUnits="userSpaceOnUse" x1="377.0" y1="254.5" x2="326.41" y2="413.92"><stop offset="0.017" stop-color="#600608"/><stop offset="0.032" stop-color="#600608"/><stop offset="0.043" stop-color="#b02a30"/><stop offset="0.068" stop-color="#9a1c22"/><stop offset="0.120" stop-color="#890f14"/><stop offset="0.142" stop-color="#850d12"/><stop offset="0.477" stop-color="#7d0b0f"/><stop offset="0.622" stop-color="#6a080b"/><stop offset="0.624" stop-color="#da5e67"/><stop offset="0.656" stop-color="#d85b64"/><stop offset="0.689" stop-color="#cb4850"/><stop offset="0.778" stop-color="#ab2228"/><stop offset="0.899" stop-color="#92161c"/><stop offset="0.901" stop-color="#880f13"/><stop offset="0.983" stop-color="#790b0d"/><stop offset="1.000" stop-color="#790b0d"/></linearGradient><linearGradient id="g31" gradientUnits="userSpaceOnUse" x1="385.0" y1="255.9" x2="333.98" y2="417.20"><stop offset="0.000" stop-color="#600608"/><stop offset="0.032" stop-color="#600608"/><stop offset="0.043" stop-color="#b02a30"/><stop offset="0.068" stop-color="#9a1c22"/><stop offset="0.118" stop-color="#890f14"/><stop offset="0.141" stop-color="#850d12"/><stop offset="0.478" stop-color="#7d0b0f"/><stop offset="0.622" stop-color="#6a080b"/><stop offset="0.623" stop-color="#da5e67"/><stop offset="0.655" stop-color="#d85b64"/><stop offset="0.689" stop-color="#cb4750"/><stop offset="0.778" stop-color="#ab2228"/><stop offset="0.897" stop-color="#92161b"/><stop offset="0.899" stop-color="#880e12"/><stop offset="0.983" stop-color="#780a0d"/><stop offset="1.000" stop-color="#780a0d"/></linearGradient><linearGradient id="g32" gradientUnits="userSpaceOnUse" x1="393.0" y1="257.4" x2="341.55" y2="420.39"><stop offset="0.017" stop-color="#600608"/><stop offset="0.031" stop-color="#600608"/><stop offset="0.042" stop-color="#b02a30"/><stop offset="0.067" stop-color="#9a1c22"/><stop offset="0.118" stop-color="#890f14"/><stop offset="0.139" stop-color="#850d12"/><stop offset="0.479" stop-color="#7d0b0f"/><stop offset="0.622" stop-color="#6a080b"/><stop offset="0.623" stop-color="#db5f68"/><stop offset="0.644" stop-color="#db5f68"/><stop offset="0.677" stop-color="#d25059"/><stop offset="0.699" stop-color="#c64048"/><stop offset="0.778" stop-color="#aa2228"/><stop offset="0.897" stop-color="#91151b"/><stop offset="0.899" stop-color="#880e12"/><stop offset="0.983" stop-color="#780a0d"/><stop offset="1.000" stop-color="#780a0d"/></linearGradient><linearGradient id="g33" gradientUnits="userSpaceOnUse" x1="401.0" y1="258.8" x2="349.11" y2="423.48"><stop offset="0.000" stop-color="#600608"/><stop offset="0.031" stop-color="#600608"/><stop offset="0.042" stop-color="#b02a30"/><stop offset="0.066" stop-color="#9a1c22"/><stop offset="0.118" stop-color="#880f14"/><stop offset="0.422" stop-color="#800b10"/><stop offset="0.524" stop-color="#770a0e"/><stop offset="0.622" stop-color="#6a080b"/><stop offset="0.623" stop-color="#dc6069"/><stop offset="0.644" stop-color="#dc6069"/><stop offset="0.677" stop-color="#d2505a"/><stop offset="0.698" stop-color="#c64048"/><stop offset="0.778" stop-color="#a92128"/><stop offset="0.893" stop-color="#91151a"/><stop offset="0.895" stop-color="#880e12"/><stop offset="0.983" stop-color="#780a0d"/><stop offset="1.000" stop-color="#780a0d"/></linearGradient><linearGradient id="g34" gradientUnits="userSpaceOnUse" x1="409.0" y1="260.4" x2="356.90" y2="426.65"><stop offset="0.016" stop-color="#600608"/><stop offset="0.031" stop-color="#600608"/><stop offset="0.042" stop-color="#b02a30"/><stop offset="0.066" stop-color="#9a1c22"/><stop offset="0.118" stop-color="#880f14"/><stop offset="0.422" stop-color="#800b10"/><stop offset="0.525" stop-color="#770a0e"/><stop offset="0.622" stop-color="#6a080b"/><stop offset="0.624" stop-color="#dd6169"/><stop offset="0.644" stop-color="#dd6169"/><stop offset="0.676" stop-color="#d3505a"/><stop offset="0.698" stop-color="#c63f47"/><stop offset="0.778" stop-color="#a82128"/><stop offset="0.891" stop-color="#91151a"/><stop offset="0.893" stop-color="#880e12"/><stop offset="1.000" stop-color="#780a0d"/></linearGradient><linearGradient id="g35" gradientUnits="userSpaceOnUse" x1="417.0" y1="261.9" x2="364.90" y2="429.89"><stop offset="0.000" stop-color="#600608"/><stop offset="0.030" stop-color="#600608"/><stop offset="0.041" stop-color="#b02a30"/><stop offset="0.065" stop-color="#9a1c22"/><stop offset="0.118" stop-color="#880f14"/><stop offset="0.333" stop-color="#810b10"/><stop offset="0.472" stop-color="#7e0b0f"/><stop offset="0.622" stop-color="#6a080b"/><stop offset="0.624" stop-color="#de626a"/><stop offset="0.644" stop-color="#de626a"/><stop offset="0.676" stop-color="#d3505a"/><stop offset="0.697" stop-color="#c63f47"/><stop offset="0.778" stop-color="#a82127"/><stop offset="0.880" stop-color="#92161b"/><stop offset="0.891" stop-color="#911519"/><stop offset="0.892" stop-color="#880e12"/><stop offset="0.984" stop-color="#780a0c"/></linearGradient><linearGradient id="g36" gradientUnits="userSpaceOnUse" x1="425.0" y1="263.5" x2="373.12" y2="433.23"><stop offset="0.000" stop-color="#600608"/><stop offset="0.030" stop-color="#600608"/><stop offset="0.041" stop-color="#b02a30"/><stop offset="0.065" stop-color="#9a1c22"/><stop offset="0.117" stop-color="#880f14"/><stop offset="0.333" stop-color="#810b10"/><stop offset="0.473" stop-color="#7d0b0f"/><stop offset="0.622" stop-color="#6a080b"/><stop offset="0.624" stop-color="#de626b"/><stop offset="0.644" stop-color="#de626b"/><stop offset="0.676" stop-color="#d4505a"/><stop offset="0.697" stop-color="#c53e46"/><stop offset="0.778" stop-color="#a72127"/><stop offset="0.887" stop-color="#911519"/><stop offset="0.889" stop-color="#880e12"/><stop offset="0.984" stop-color="#780a0c"/></linearGradient><linearGradient id="g37" gradientUnits="userSpaceOnUse" x1="433.0" y1="265.1" x2="381.54" y2="436.63"><stop offset="0.000" stop-color="#600608"/><stop offset="0.030" stop-color="#600608"/><stop offset="0.041" stop-color="#b02a30"/><stop offset="0.064" stop-color="#9a1c22"/><stop offset="0.117" stop-color="#880f14"/><stop offset="0.222" stop-color="#830c11"/><stop offset="0.474" stop-color="#7d0b0f"/><stop offset="0.622" stop-color="#6a080b"/><stop offset="0.624" stop-color="#df636b"/><stop offset="0.644" stop-color="#df636b"/><stop offset="0.675" stop-color="#d4515a"/><stop offset="0.686" stop-color="#cb454d"/><stop offset="0.739" stop-color="#b42d34"/><stop offset="0.781" stop-color="#a52027"/><stop offset="0.886" stop-color="#901419"/><stop offset="0.887" stop-color="#880e12"/><stop offset="1.000" stop-color="#780a0c"/></linearGradient><linearGradient id="g38" gradientUnits="userSpaceOnUse" x1="441.0" y1="266.7" x2="390.07" y2="440.02"><stop offset="0.016" stop-color="#600608"/><stop offset="0.030" stop-color="#600608"/><stop offset="0.040" stop-color="#b02a30"/><stop offset="0.064" stop-color="#9a1c22"/><stop offset="0.117" stop-color="#880f14"/><stop offset="0.421" stop-color="#800b10"/><stop offset="0.496" stop-color="#7a0a0f"/><stop offset="0.623" stop-color="#6a080b"/><stop offset="0.624" stop-color="#e0646c"/><stop offset="0.644" stop-color="#e0646c"/><stop offset="0.675" stop-color="#d4515a"/><stop offset="0.686" stop-color="#cb444d"/><stop offset="0.707" stop-color="#c13941"/><stop offset="0.770" stop-color="#a82228"/><stop offset="0.865" stop-color="#93161b"/><stop offset="0.886" stop-color="#901418"/><stop offset="0.888" stop-color="#880e12"/><stop offset="1.000" stop-color="#780a0c"/></linearGradient><linearGradient id="g39" gradientUnits="userSpaceOnUse" x1="449.0" y1="268.3" x2="398.59" y2="443.33"><stop offset="0.016" stop-color="#600608"/><stop offset="0.030" stop-color="#600608"/><stop offset="0.040" stop-color="#b02a30"/><stop offset="0.063" stop-color="#9a1c22"/><stop offset="0.117" stop-color="#880f14"/><stop offset="0.421" stop-color="#800b10"/><stop offset="0.496" stop-color="#7a0a0f"/><stop offset="0.623" stop-color="#6a080b"/><stop offset="0.625" stop-color="#e0646c"/><stop offset="0.644" stop-color="#e0646c"/><stop offset="0.675" stop-color="#d4505a"/><stop offset="0.686" stop-color="#cb444d"/><stop offset="0.707" stop-color="#c13941"/><stop offset="0.778" stop-color="#a62127"/><stop offset="0.854" stop-color="#95181d"/><stop offset="0.884" stop-color="#911418"/><stop offset="0.886" stop-color="#890e12"/><stop offset="0.984" stop-color="#780a0c"/></linearGradient><linearGradient id="g40" gradientUnits="userSpaceOnUse" x1="457.0" y1="270.0" x2="406.91" y2="446.43"><stop offset="0.016" stop-color="#600608"/><stop offset="0.029" stop-color="#600608"/><stop offset="0.040" stop-color="#b02a30"/><stop offset="0.063" stop-color="#9a1c22"/><stop offset="0.117" stop-color="#880f14"/><stop offset="0.420" stop-color="#800b10"/><stop offset="0.556" stop-color="#73090d"/><stop offset="0.623" stop-color="#6a080b"/><stop offset="0.624" stop-color="#e0646c"/><stop offset="0.644" stop-color="#e0646c"/><stop offset="0.675" stop-color="#d4505a"/><stop offset="0.686" stop-color="#cb444c"/><stop offset="0.738" stop-color="#b42d34"/><stop offset="0.780" stop-color="#a52127"/><stop offset="0.885" stop-color="#911418"/><stop offset="0.887" stop-color="#890e12"/><stop offset="1.000" stop-color="#790a0c"/></linearGradient><linearGradient id="g41" gradientUnits="userSpaceOnUse" x1="465.0" y1="271.7" x2="415.09" y2="449.38"><stop offset="0.016" stop-color="#600608"/><stop offset="0.029" stop-color="#600608"/><stop offset="0.040" stop-color="#b02a30"/><stop offset="0.063" stop-color="#9a1c22"/><stop offset="0.117" stop-color="#880f14"/><stop offset="0.420" stop-color="#800b10"/><stop offset="0.556" stop-color="#73090d"/><stop offset="0.624" stop-color="#6a080b"/><stop offset="0.626" stop-color="#e0646c"/><stop offset="0.644" stop-color="#e0646b"/><stop offset="0.676" stop-color="#d34f59"/><stop offset="0.686" stop-color="#cb434c"/><stop offset="0.760" stop-color="#ac262c"/><stop offset="0.854" stop-color="#96181d"/><stop offset="0.886" stop-color="#911418"/><stop offset="0.887" stop-color="#890e12"/><stop offset="1.000" stop-color="#790a0c"/></linearGradient><linearGradient id="g42" gradientUnits="userSpaceOnUse" x1="473.0" y1="273.4" x2="423.46" y2="452.38"><stop offset="0.016" stop-color="#600608"/><stop offset="0.029" stop-color="#600608"/><stop offset="0.039" stop-color="#b02a30"/><stop offset="0.062" stop-color="#9a1c22"/><stop offset="0.117" stop-color="#880f14"/><stop offset="0.420" stop-color="#800b10"/><stop offset="0.556" stop-color="#73090d"/><stop offset="0.624" stop-color="#6a080b"/><stop offset="0.626" stop-color="#e1656c"/><stop offset="0.645" stop-color="#e0636b"/><stop offset="0.676" stop-color="#d34e58"/><stop offset="0.687" stop-color="#ca434b"/><stop offset="0.778" stop-color="#a62127"/><stop offset="0.885" stop-color="#921418"/><stop offset="0.886" stop-color="#8a0e12"/><stop offset="1.000" stop-color="#790a0c"/></linearGradient><linearGradient id="g43" gradientUnits="userSpaceOnUse" x1="481.0" y1="275.1" x2="431.80" y2="455.29"><stop offset="0.000" stop-color="#600608"/><stop offset="0.029" stop-color="#600608"/><stop offset="0.039" stop-color="#b02a30"/><stop offset="0.062" stop-color="#9a1c22"/><stop offset="0.116" stop-color="#880f14"/><stop offset="0.419" stop-color="#800b10"/><stop offset="0.487" stop-color="#7c0a0f"/><stop offset="0.624" stop-color="#6a080b"/><stop offset="0.627" stop-color="#e1656c"/><stop offset="0.645" stop-color="#e0636a"/><stop offset="0.677" stop-color="#d24e57"/><stop offset="0.687" stop-color="#ca424b"/><stop offset="0.778" stop-color="#a72228"/><stop offset="0.887" stop-color="#921418"/><stop offset="0.889" stop-color="#8b0e12"/><stop offset="0.985" stop-color="#790a0c"/></linearGradient><linearGradient id="g44" gradientUnits="userSpaceOnUse" x1="489.0" y1="276.9" x2="439.99" y2="458.05"><stop offset="0.000" stop-color="#600608"/><stop offset="0.029" stop-color="#600608"/><stop offset="0.039" stop-color="#b02a30"/><stop offset="0.062" stop-color="#9a1c22"/><stop offset="0.116" stop-color="#880f14"/><stop offset="0.419" stop-color="#800b10"/><stop offset="0.488" stop-color="#7c0a0f"/><stop offset="0.625" stop-color="#6a080b"/><stop offset="0.628" stop-color="#e1656c"/><stop offset="0.646" stop-color="#df626a"/><stop offset="0.678" stop-color="#d24d56"/><stop offset="0.688" stop-color="#ca424b"/><stop offset="0.778" stop-color="#a72228"/><stop offset="0.887" stop-color="#931418"/><stop offset="0.889" stop-color="#8b0e12"/><stop offset="1.000" stop-color="#7a0a0c"/></linearGradient><linearGradient id="g45" gradientUnits="userSpaceOnUse" x1="497.0" y1="278.6" x2="448.16" y2="460.72"><stop offset="0.000" stop-color="#600608"/><stop offset="0.029" stop-color="#600608"/><stop offset="0.039" stop-color="#b02a30"/><stop offset="0.061" stop-color="#9a1c22"/><stop offset="0.116" stop-color="#880f14"/><stop offset="0.419" stop-color="#800b10"/><stop offset="0.498" stop-color="#7b0a0f"/><stop offset="0.626" stop-color="#6a080b"/><stop offset="0.629" stop-color="#e1656c"/><stop offset="0.647" stop-color="#df6269"/><stop offset="0.678" stop-color="#d14c55"/><stop offset="0.689" stop-color="#ca424a"/><stop offset="0.778" stop-color="#a82228"/><stop offset="0.889" stop-color="#931418"/><stop offset="0.890" stop-color="#8c0e12"/><stop offset="0.985" stop-color="#7a0a0c"/></linearGradient><linearGradient id="g46" gradientUnits="userSpaceOnUse" x1="505.0" y1="280.4" x2="456.23" y2="463.28"><stop offset="0.015" stop-color="#600608"/><stop offset="0.029" stop-color="#600608"/><stop offset="0.039" stop-color="#b02a30"/><stop offset="0.061" stop-color="#9a1c22"/><stop offset="0.116" stop-color="#880f14"/><stop offset="0.418" stop-color="#800b10"/><stop offset="0.499" stop-color="#7b0a0f"/><stop offset="0.627" stop-color="#6a080b"/><stop offset="0.630" stop-color="#e1656c"/><stop offset="0.647" stop-color="#df6169"/><stop offset="0.679" stop-color="#d14b55"/><stop offset="0.690" stop-color="#ca424a"/><stop offset="0.785" stop-color="#a62127"/><stop offset="0.891" stop-color="#931418"/><stop offset="0.893" stop-color="#8c0e12"/><stop offset="0.985" stop-color="#7a0a0c"/><stop offset="1.000" stop-color="#7a0a0c"/></linearGradient><linearGradient id="g47" gradientUnits="userSpaceOnUse" x1="513.0" y1="282.2" x2="464.31" y2="465.79"><stop offset="0.000" stop-color="#600608"/><stop offset="0.029" stop-color="#600608"/><stop offset="0.039" stop-color="#b02a30"/><stop offset="0.061" stop-color="#9a1c22"/><stop offset="0.116" stop-color="#880f14"/><stop offset="0.418" stop-color="#800b10"/><stop offset="0.499" stop-color="#7b0a0f"/><stop offset="0.627" stop-color="#6a080b"/><stop offset="0.630" stop-color="#e1656c"/><stop offset="0.648" stop-color="#df6169"/><stop offset="0.680" stop-color="#d04b54"/><stop offset="0.701" stop-color="#c53d45"/><stop offset="0.786" stop-color="#a62127"/><stop offset="0.892" stop-color="#941418"/><stop offset="0.894" stop-color="#8d0e12"/><stop offset="0.985" stop-color="#7a0a0c"/><stop offset="1.000" stop-color="#7a0a0c"/></linearGradient><linearGradient id="g48" gradientUnits="userSpaceOnUse" x1="521.0" y1="284.0" x2="472.36" y2="468.23"><stop offset="0.015" stop-color="#600608"/><stop offset="0.028" stop-color="#600608"/><stop offset="0.039" stop-color="#b02a30"/><stop offset="0.061" stop-color="#9a1c22"/><stop offset="0.116" stop-color="#880f14"/><stop offset="0.418" stop-color="#800b10"/><stop offset="0.499" stop-color="#7b0a0f"/><stop offset="0.628" stop-color="#6a080b"/><stop offset="0.631" stop-color="#e1656c"/><stop offset="0.648" stop-color="#df6168"/><stop offset="0.680" stop-color="#d04b54"/><stop offset="0.701" stop-color="#c53d45"/><stop offset="0.787" stop-color="#a62127"/><stop offset="0.893" stop-color="#941418"/><stop offset="0.894" stop-color="#8d0e12"/><stop offset="0.985" stop-color="#7a0a0c"/></linearGradient><linearGradient id="g49" gradientUnits="userSpaceOnUse" x1="529.0" y1="285.8" x2="480.41" y2="470.61"><stop offset="0.000" stop-color="#600608"/><stop offset="0.028" stop-color="#600608"/><stop offset="0.038" stop-color="#b02a30"/><stop offset="0.061" stop-color="#9a1c22"/><stop offset="0.116" stop-color="#880f14"/><stop offset="0.418" stop-color="#800b10"/><stop offset="0.499" stop-color="#7b0a0f"/><stop offset="0.628" stop-color="#6a080b"/><stop offset="0.631" stop-color="#e1656c"/><stop offset="0.648" stop-color="#df6168"/><stop offset="0.702" stop-color="#c53d45"/><stop offset="0.787" stop-color="#a72127"/><stop offset="0.893" stop-color="#941418"/><stop offset="0.895" stop-color="#8e0e12"/><stop offset="0.985" stop-color="#7b0a0c"/><stop offset="1.000" stop-color="#7b0a0c"/></linearGradient><linearGradient id="g50" gradientUnits="userSpaceOnUse" x1="537.0" y1="287.7" x2="488.48" y2="472.95"><stop offset="0.015" stop-color="#600608"/><stop offset="0.028" stop-color="#600608"/><stop offset="0.038" stop-color="#b02a30"/><stop offset="0.061" stop-color="#9a1c22"/><stop offset="0.116" stop-color="#870f14"/><stop offset="0.478" stop-color="#7d0b0f"/><stop offset="0.629" stop-color="#6a080b"/><stop offset="0.632" stop-color="#e2666c"/><stop offset="0.649" stop-color="#df6168"/><stop offset="0.680" stop-color="#d04b54"/><stop offset="0.702" stop-color="#c53d45"/><stop offset="0.787" stop-color="#a72127"/><stop offset="0.892" stop-color="#951418"/><stop offset="0.893" stop-color="#8f0e12"/><stop offset="0.985" stop-color="#7b0a0c"/></linearGradient><linearGradient id="g51" gradientUnits="userSpaceOnUse" x1="545.0" y1="289.6" x2="496.54" y2="475.25"><stop offset="0.000" stop-color="#600608"/><stop offset="0.028" stop-color="#600608"/><stop offset="0.038" stop-color="#b02a30"/><stop offset="0.061" stop-color="#9a1c22"/><stop offset="0.111" stop-color="#880f14"/><stop offset="0.479" stop-color="#7d0b0f"/><stop offset="0.630" stop-color="#6a080b"/><stop offset="0.633" stop-color="#e2666c"/><stop offset="0.659" stop-color="#da5a62"/><stop offset="0.702" stop-color="#c63e46"/><stop offset="0.787" stop-color="#a72127"/><stop offset="0.891" stop-color="#951418"/><stop offset="0.893" stop-color="#8f0e12"/><stop offset="0.985" stop-color="#7b0a0c"/><stop offset="1.000" stop-color="#7b0a0c"/></linearGradient><linearGradient id="g52" gradientUnits="userSpaceOnUse" x1="553.0" y1="291.4" x2="504.61" y2="477.51"><stop offset="0.015" stop-color="#600608"/><stop offset="0.028" stop-color="#600608"/><stop offset="0.038" stop-color="#b02a30"/><stop offset="0.060" stop-color="#9a1c22"/><stop offset="0.111" stop-color="#880f14"/><stop offset="0.479" stop-color="#7e0b0f"/><stop offset="0.631" stop-color="#6a080b"/><stop offset="0.634" stop-color="#e2666c"/><stop offset="0.659" stop-color="#da5a62"/><stop offset="0.702" stop-color="#c63e46"/><stop offset="0.787" stop-color="#a72228"/><stop offset="0.893" stop-color="#961418"/><stop offset="0.894" stop-color="#8f0e12"/><stop offset="0.985" stop-color="#7b0a0c"/></linearGradient><linearGradient id="g53" gradientUnits="userSpaceOnUse" x1="558.5" y1="292.7" x2="510.15" y2="479.03"><stop offset="0.015" stop-color="#600608"/><stop offset="0.028" stop-color="#600608"/><stop offset="0.038" stop-color="#b02a30"/><stop offset="0.060" stop-color="#9a1c22"/><stop offset="0.111" stop-color="#880f14"/><stop offset="0.479" stop-color="#7e0b0f"/><stop offset="0.631" stop-color="#6a080b"/><stop offset="0.634" stop-color="#e2666c"/><stop offset="0.659" stop-color="#da5a62"/><stop offset="0.702" stop-color="#c63e46"/><stop offset="0.786" stop-color="#a72228"/><stop offset="0.892" stop-color="#961418"/><stop offset="0.894" stop-color="#900e12"/><stop offset="0.985" stop-color="#7c0a0c"/><stop offset="1.000" stop-color="#7c0a0c"/></linearGradient><linearGradient id="g54" gradientUnits="userSpaceOnUse" x1="562.0" y1="293.5" x2="513.41" y2="479.83"><stop offset="0.000" stop-color="#600608"/><stop offset="0.028" stop-color="#600608"/><stop offset="0.038" stop-color="#b02a30"/><stop offset="0.060" stop-color="#9a1c22"/><stop offset="0.111" stop-color="#880f14"/><stop offset="0.480" stop-color="#7e0b0f"/><stop offset="0.631" stop-color="#6a080b"/><stop offset="0.634" stop-color="#e2666c"/><stop offset="0.659" stop-color="#da5a62"/><stop offset="0.702" stop-color="#c73f47"/><stop offset="0.786" stop-color="#a82228"/><stop offset="0.891" stop-color="#961418"/><stop offset="0.892" stop-color="#900e12"/><stop offset="0.985" stop-color="#7c0a0c"/></linearGradient><linearGradient id="g55" gradientUnits="userSpaceOnUse" x1="566.0" y1="294.5" x2="516.83" y2="480.57"><stop offset="0.015" stop-color="#600608"/><stop offset="0.028" stop-color="#600608"/><stop offset="0.038" stop-color="#b02a30"/><stop offset="0.060" stop-color="#9a1c22"/><stop offset="0.111" stop-color="#880f14"/><stop offset="0.480" stop-color="#7d0b0f"/><stop offset="0.632" stop-color="#6a080b"/><stop offset="0.635" stop-color="#e2656b"/><stop offset="0.659" stop-color="#db5a63"/><stop offset="0.712" stop-color="#c43c44"/><stop offset="0.786" stop-color="#a92329"/><stop offset="0.891" stop-color="#961418"/><stop offset="0.892" stop-color="#910e12"/><stop offset="0.985" stop-color="#7c0a0c"/></linearGradient><linearGradient id="g56" gradientUnits="userSpaceOnUse" x1="570.0" y1="295.4" x2="520.02" y2="481.15"><stop offset="0.000" stop-color="#600608"/><stop offset="0.028" stop-color="#600608"/><stop offset="0.038" stop-color="#b02a30"/><stop offset="0.060" stop-color="#9a1c22"/><stop offset="0.111" stop-color="#880f14"/><stop offset="0.480" stop-color="#7d0b0f"/><stop offset="0.632" stop-color="#6a080b"/><stop offset="0.635" stop-color="#e1656b"/><stop offset="0.667" stop-color="#d8575f"/><stop offset="0.702" stop-color="#c9424a"/><stop offset="0.786" stop-color="#a9232a"/><stop offset="0.890" stop-color="#961418"/><stop offset="0.892" stop-color="#910e12"/><stop offset="0.985" stop-color="#7c0a0c"/><stop offset="1.000" stop-color="#7c0a0c"/></linearGradient><linearGradient id="g57" gradientUnits="userSpaceOnUse" x1="574.0" y1="296.4" x2="524.12" y2="482.24"><stop offset="0.000" stop-color="#600608"/><stop offset="0.028" stop-color="#600608"/><stop offset="0.038" stop-color="#b02a30"/><stop offset="0.060" stop-color="#9a1c22"/><stop offset="0.111" stop-color="#880f14"/><stop offset="0.481" stop-color="#7d0b0f"/><stop offset="0.631" stop-color="#6a080b"/><stop offset="0.634" stop-color="#e1646b"/><stop offset="0.660" stop-color="#db5b63"/><stop offset="0.713" stop-color="#c63f47"/><stop offset="0.786" stop-color="#aa242a"/><stop offset="0.892" stop-color="#961418"/><stop offset="0.893" stop-color="#910e12"/><stop offset="0.985" stop-color="#7c0a0c"/></linearGradient><linearGradient id="g58" gradientUnits="userSpaceOnUse" x1="578.0" y1="297.3" x2="531.73" y2="485.24"><stop offset="0.015" stop-color="#600608"/><stop offset="0.028" stop-color="#600608"/><stop offset="0.038" stop-color="#b02a30"/><stop offset="0.060" stop-color="#9a1c22"/><stop offset="0.111" stop-color="#880f14"/><stop offset="0.481" stop-color="#7d0b0f"/><stop offset="0.631" stop-color="#6a080b"/><stop offset="0.634" stop-color="#e1646a"/><stop offset="0.660" stop-color="#db5b63"/><stop offset="0.734" stop-color="#bf3840"/><stop offset="0.797" stop-color="#a92329"/><stop offset="0.890" stop-color="#971418"/><stop offset="0.892" stop-color="#920e12"/><stop offset="0.985" stop-color="#7c0a0c"/></linearGradient><linearGradient id="g59" gradientUnits="userSpaceOnUse" x1="582.0" y1="298.3" x2="538.55" y2="487.67"><stop offset="0.015" stop-color="#600608"/><stop offset="0.028" stop-color="#600608"/><stop offset="0.038" stop-color="#b02a30"/><stop offset="0.060" stop-color="#9a1c22"/><stop offset="0.111" stop-color="#880f14"/><stop offset="0.481" stop-color="#7d0b0f"/><stop offset="0.631" stop-color="#6a080b"/><stop offset="0.634" stop-color="#e0636a"/><stop offset="0.670" stop-color="#d85760"/><stop offset="0.723" stop-color="#c43e46"/><stop offset="0.786" stop-color="#ac252c"/><stop offset="0.890" stop-color="#971418"/><stop offset="0.892" stop-color="#920e12"/><stop offset="0.985" stop-color="#7c0a0c"/><stop offset="1.000" stop-color="#7c0a0c"/></linearGradient><linearGradient id="g60" gradientUnits="userSpaceOnUse" x1="586.0" y1="299.3" x2="543.54" y2="489.13"><stop offset="0.000" stop-color="#600608"/><stop offset="0.028" stop-color="#600608"/><stop offset="0.038" stop-color="#b02a30"/><stop offset="0.060" stop-color="#9a1c22"/><stop offset="0.111" stop-color="#880f14"/><stop offset="0.480" stop-color="#7d0b0f"/><stop offset="0.630" stop-color="#6a080b"/><stop offset="0.633" stop-color="#e06269"/><stop offset="0.659" stop-color="#dc5c64"/><stop offset="0.778" stop-color="#af292f"/><stop offset="0.891" stop-color="#971418"/><stop offset="0.893" stop-color="#920e12"/><stop offset="0.985" stop-color="#7c0a0c"/><stop offset="1.000" stop-color="#7c0a0c"/></linearGradient><linearGradient id="g61" gradientUnits="userSpaceOnUse" x1="590.0" y1="300.2" x2="547.86" y2="490.25"><stop offset="0.000" stop-color="#600608"/><stop offset="0.028" stop-color="#600608"/><stop offset="0.038" stop-color="#b02a30"/><stop offset="0.060" stop-color="#9a1c22"/><stop offset="0.111" stop-color="#880f14"/><stop offset="0.480" stop-color="#7d0b0f"/><stop offset="0.629" stop-color="#6a080b"/><stop offset="0.632" stop-color="#df6268"/><stop offset="0.659" stop-color="#dc5c64"/><stop offset="0.786" stop-color="#ad272d"/><stop offset="0.891" stop-color="#971418"/><stop offset="0.893" stop-color="#920e12"/><stop offset="0.985" stop-color="#7d0a0c"/></linearGradient><linearGradient id="g62" gradientUnits="userSpaceOnUse" x1="594.0" y1="301.2" x2="552.01" y2="491.29"><stop offset="0.000" stop-color="#600608"/><stop offset="0.028" stop-color="#600608"/><stop offset="0.038" stop-color="#b02a30"/><stop offset="0.060" stop-color="#9a1c22"/><stop offset="0.111" stop-color="#880f14"/><stop offset="0.479" stop-color="#7d0b0f"/><stop offset="0.627" stop-color="#6a080b"/><stop offset="0.630" stop-color="#df6168"/><stop offset="0.667" stop-color="#da5a62"/><stop offset="0.786" stop-color="#ae272e"/><stop offset="0.890" stop-color="#971418"/><stop offset="0.891" stop-color="#930e12"/><stop offset="0.985" stop-color="#7d0a0c"/><stop offset="1.000" stop-color="#7d0a0c"/></linearGradient><linearGradient id="g63" gradientUnits="userSpaceOnUse" x1="598.0" y1="302.2" x2="556.07" y2="492.27"><stop offset="0.000" stop-color="#600608"/><stop offset="0.028" stop-color="#600608"/><stop offset="0.038" stop-color="#b02a30"/><stop offset="0.060" stop-color="#9a1c22"/><stop offset="0.111" stop-color="#880f14"/><stop offset="0.479" stop-color="#7d0b0f"/><stop offset="0.627" stop-color="#6a080b"/><stop offset="0.629" stop-color="#de6067"/><stop offset="0.648" stop-color="#de6067"/><stop offset="0.690" stop-color="#d45259"/><stop offset="0.785" stop-color="#af282f"/><stop offset="0.889" stop-color="#971418"/><stop offset="0.891" stop-color="#930e12"/><stop offset="0.985" stop-color="#7d0a0c"/><stop offset="1.000" stop-color="#7d0a0c"/></linearGradient><linearGradient id="g64" gradientUnits="userSpaceOnUse" x1="602.0" y1="303.2" x2="559.73" y2="493.07"><stop offset="0.015" stop-color="#600608"/><stop offset="0.028" stop-color="#600608"/><stop offset="0.038" stop-color="#b02a30"/><stop offset="0.060" stop-color="#9a1c22"/><stop offset="0.111" stop-color="#880f14"/><stop offset="0.479" stop-color="#7d0b0f"/><stop offset="0.624" stop-color="#6a080b"/><stop offset="0.626" stop-color="#dd5e65"/><stop offset="0.647" stop-color="#de6067"/><stop offset="0.690" stop-color="#d5545b"/><stop offset="0.785" stop-color="#b02930"/><stop offset="0.869" stop-color="#9b181d"/><stop offset="0.890" stop-color="#971418"/><stop offset="0.892" stop-color="#930e12"/><stop offset="0.985" stop-color="#7d0a0c"/></linearGradient><linearGradient id="g65" gradientUnits="userSpaceOnUse" x1="606.0" y1="304.2" x2="563.31" y2="493.81"><stop offset="0.015" stop-color="#600608"/><stop offset="0.028" stop-color="#600608"/><stop offset="0.038" stop-color="#b02a30"/><stop offset="0.060" stop-color="#9a1c22"/><stop offset="0.111" stop-color="#880f14"/><stop offset="0.478" stop-color="#7d0b0f"/><stop offset="0.621" stop-color="#6a080b"/><stop offset="0.624" stop-color="#db5d64"/><stop offset="0.636" stop-color="#df6168"/><stop offset="0.679" stop-color="#d95961"/><stop offset="0.784" stop-color="#b02931"/><stop offset="0.889" stop-color="#971418"/><stop offset="0.890" stop-color="#930e12"/><stop offset="0.985" stop-color="#7d0a0c"/></linearGradient><linearGradient id="g66" gradientUnits="userSpaceOnUse" x1="610.0" y1="305.2" x2="567.05" y2="494.62"><stop offset="0.015" stop-color="#600608"/><stop offset="0.028" stop-color="#600608"/><stop offset="0.038" stop-color="#b02a30"/><stop offset="0.060" stop-color="#9a1c22"/><stop offset="0.111" stop-color="#880f14"/><stop offset="0.478" stop-color="#7d0b0f"/><stop offset="0.619" stop-color="#6a080b"/><stop offset="0.622" stop-color="#da5b62"/><stop offset="0.636" stop-color="#de6067"/><stop offset="0.689" stop-color="#d7575e"/><stop offset="0.784" stop-color="#b12a31"/><stop offset="0.879" stop-color="#99161b"/><stop offset="0.889" stop-color="#971418"/><stop offset="0.891" stop-color="#930e12"/><stop offset="0.985" stop-color="#7d0a0c"/></linearGradient><linearGradient id="g67" gradientUnits="userSpaceOnUse" x1="614.0" y1="306.1" x2="570.89" y2="495.46"><stop offset="0.000" stop-color="#600608"/><stop offset="0.028" stop-color="#600608"/><stop offset="0.038" stop-color="#b02a30"/><stop offset="0.060" stop-color="#9a1c22"/><stop offset="0.111" stop-color="#880f14"/><stop offset="0.467" stop-color="#7e0b0f"/><stop offset="0.618" stop-color="#6a080b"/><stop offset="0.619" stop-color="#d8585f"/><stop offset="0.636" stop-color="#de6067"/><stop offset="0.689" stop-color="#d8585f"/><stop offset="0.783" stop-color="#b22b32"/><stop offset="0.878" stop-color="#99161b"/><stop offset="0.889" stop-color="#971418"/><stop offset="0.889" stop-color="#940e12"/><stop offset="0.985" stop-color="#7d0a0c"/><stop offset="1.000" stop-color="#7d0a0c"/></linearGradient><linearGradient id="g68" gradientUnits="userSpaceOnUse" x1="618.0" y1="307.1" x2="574.73" y2="496.30"><stop offset="0.015" stop-color="#600608"/><stop offset="0.028" stop-color="#600608"/><stop offset="0.038" stop-color="#b02a30"/><stop offset="0.060" stop-color="#9a1c22"/><stop offset="0.111" stop-color="#880f14"/><stop offset="0.467" stop-color="#7d0b0f"/><stop offset="0.614" stop-color="#6a080b"/><stop offset="0.616" stop-color="#d6555d"/><stop offset="0.635" stop-color="#de5f67"/><stop offset="0.688" stop-color="#d95a61"/><stop offset="0.783" stop-color="#b32b33"/><stop offset="0.867" stop-color="#9b191e"/><stop offset="0.888" stop-color="#971418"/><stop offset="0.889" stop-color="#940e12"/><stop offset="0.985" stop-color="#7d0a0c"/><stop offset="1.000" stop-color="#7d0a0c"/></linearGradient><linearGradient id="g69" gradientUnits="userSpaceOnUse" x1="622.0" y1="308.1" x2="578.70" y2="497.20"><stop offset="0.000" stop-color="#600608"/><stop offset="0.028" stop-color="#600608"/><stop offset="0.038" stop-color="#b02a30"/><stop offset="0.060" stop-color="#9a1c22"/><stop offset="0.111" stop-color="#880f14"/><stop offset="0.467" stop-color="#7d0b0f"/><stop offset="0.612" stop-color="#6a080b"/><stop offset="0.614" stop-color="#d4535a"/><stop offset="0.635" stop-color="#de5f66"/><stop offset="0.688" stop-color="#da5b62"/><stop offset="0.783" stop-color="#b32c34"/><stop offset="0.867" stop-color="#9b191e"/><stop offset="0.886" stop-color="#981418"/><stop offset="0.889" stop-color="#940e12"/><stop offset="0.985" stop-color="#7e0a0c"/></linearGradient><linearGradient id="g70" gradientUnits="userSpaceOnUse" x1="626.0" y1="309.1" x2="582.69" y2="498.09"><stop offset="0.015" stop-color="#600608"/><stop offset="0.028" stop-color="#600608"/><stop offset="0.038" stop-color="#b02a30"/><stop offset="0.060" stop-color="#9a1c22"/><stop offset="0.111" stop-color="#880f14"/><stop offset="0.467" stop-color="#7d0b0f"/><stop offset="0.609" stop-color="#6a080b"/><stop offset="0.612" stop-color="#d25158"/><stop offset="0.635" stop-color="#dd5e66"/><stop offset="0.688" stop-color="#db5d64"/><stop offset="0.782" stop-color="#b42d34"/><stop offset="0.867" stop-color="#9c191e"/><stop offset="0.886" stop-color="#981418"/><stop offset="0.888" stop-color="#950e12"/><stop offset="0.985" stop-color="#7e0a0c"/></linearGradient><linearGradient id="g71" gradientUnits="userSpaceOnUse" x1="630.0" y1="310.1" x2="586.74" y2="498.99"><stop offset="0.000" stop-color="#600608"/><stop offset="0.028" stop-color="#600608"/><stop offset="0.038" stop-color="#b02a30"/><stop offset="0.060" stop-color="#9a1c22"/><stop offset="0.115" stop-color="#870f14"/><stop offset="0.466" stop-color="#7d0b0f"/><stop offset="0.607" stop-color="#6a080b"/><stop offset="0.610" stop-color="#cf4e55"/><stop offset="0.635" stop-color="#dd5e65"/><stop offset="0.687" stop-color="#dd5f65"/><stop offset="0.782" stop-color="#b52e35"/><stop offset="0.866" stop-color="#9c191e"/><stop offset="0.886" stop-color="#981418"/><stop offset="0.887" stop-color="#950e12"/><stop offset="0.985" stop-color="#7e0a0c"/><stop offset="1.000" stop-color="#7e0a0c"/></linearGradient><linearGradient id="g72" gradientUnits="userSpaceOnUse" x1="634.0" y1="311.1" x2="590.80" y2="499.90"><stop offset="0.015" stop-color="#600608"/><stop offset="0.028" stop-color="#600608"/><stop offset="0.038" stop-color="#b02a30"/><stop offset="0.060" stop-color="#9a1c22"/><stop offset="0.115" stop-color="#870f14"/><stop offset="0.466" stop-color="#7d0b0f"/><stop offset="0.604" stop-color="#6a080b"/><stop offset="0.607" stop-color="#cc4a51"/><stop offset="0.635" stop-color="#dd5d65"/><stop offset="0.687" stop-color="#de6067"/><stop offset="0.782" stop-color="#b62e36"/><stop offset="0.855" stop-color="#9e1c21"/><stop offset="0.887" stop-color="#981418"/><stop offset="0.889" stop-color="#950e12"/><stop offset="0.985" stop-color="#7e0a0c"/><stop offset="1.000" stop-color="#7e0a0c"/></linearGradient><linearGradient id="g73" gradientUnits="userSpaceOnUse" x1="638.0" y1="312.1" x2="594.90" y2="500.81"><stop offset="0.000" stop-color="#600608"/><stop offset="0.028" stop-color="#600608"/><stop offset="0.038" stop-color="#b02a30"/><stop offset="0.060" stop-color="#9a1c22"/><stop offset="0.115" stop-color="#870f14"/><stop offset="0.466" stop-color="#7c0a0f"/><stop offset="0.603" stop-color="#6a080b"/><stop offset="0.605" stop-color="#c9474e"/><stop offset="0.634" stop-color="#dc5d65"/><stop offset="0.687" stop-color="#df6268"/><stop offset="0.781" stop-color="#b72f37"/><stop offset="0.855" stop-color="#9e1c21"/><stop offset="0.885" stop-color="#981418"/><stop offset="0.887" stop-color="#960e12"/><stop offset="0.985" stop-color="#7e0a0c"/></linearGradient><linearGradient id="g74" gradientUnits="userSpaceOnUse" x1="642.0" y1="313.1" x2="599.03" y2="501.73"><stop offset="0.000" stop-color="#600608"/><stop offset="0.028" stop-color="#600608"/><stop offset="0.038" stop-color="#b02a30"/><stop offset="0.061" stop-color="#9a1c22"/><stop offset="0.115" stop-color="#870f14"/><stop offset="0.466" stop-color="#7c0a0f"/><stop offset="0.599" stop-color="#6a080b"/><stop offset="0.602" stop-color="#c8454c"/><stop offset="0.634" stop-color="#dc5c64"/><stop offset="0.687" stop-color="#de6168"/><stop offset="0.781" stop-color="#b73038"/><stop offset="0.865" stop-color="#9d191f"/><stop offset="0.886" stop-color="#981418"/><stop offset="0.889" stop-color="#950e12"/><stop offset="0.985" stop-color="#7e0a0c"/><stop offset="1.000" stop-color="#7e0a0c"/></linearGradient><linearGradient id="g75" gradientUnits="userSpaceOnUse" x1="646.0" y1="314.1" x2="603.14" y2="502.63"><stop offset="0.000" stop-color="#600608"/><stop offset="0.028" stop-color="#600608"/><stop offset="0.038" stop-color="#b02a30"/><stop offset="0.061" stop-color="#9a1c22"/><stop offset="0.115" stop-color="#870f14"/><stop offset="0.466" stop-color="#7c0a0f"/><stop offset="0.596" stop-color="#6a080b"/><stop offset="0.599" stop-color="#c9464e"/><stop offset="0.634" stop-color="#db5b63"/><stop offset="0.686" stop-color="#dd5f65"/><stop offset="0.781" stop-color="#b83038"/><stop offset="0.865" stop-color="#9d1a1f"/><stop offset="0.885" stop-color="#991519"/><stop offset="0.886" stop-color="#960e12"/><stop offset="0.985" stop-color="#7e0a0c"/></linearGradient><linearGradient id="g76" gradientUnits="userSpaceOnUse" x1="650.0" y1="315.1" x2="607.37" y2="503.58"><stop offset="0.015" stop-color="#600608"/><stop offset="0.028" stop-color="#600608"/><stop offset="0.038" stop-color="#b02a30"/><stop offset="0.061" stop-color="#9a1c22"/><stop offset="0.115" stop-color="#870f14"/><stop offset="0.466" stop-color="#7c0a0f"/><stop offset="0.593" stop-color="#6a080b"/><stop offset="0.596" stop-color="#ca484f"/><stop offset="0.602" stop-color="#cb484f"/><stop offset="0.634" stop-color="#da5a62"/><stop offset="0.686" stop-color="#db5d63"/><stop offset="0.791" stop-color="#b52e36"/><stop offset="0.865" stop-color="#9e1b20"/><stop offset="0.884" stop-color="#9a161a"/><stop offset="0.886" stop-color="#970e12"/><stop offset="0.985" stop-color="#7e0a0c"/><stop offset="1.000" stop-color="#7e0a0c"/></linearGradient><linearGradient id="g77" gradientUnits="userSpaceOnUse" x1="654.0" y1="316.2" x2="611.46" y2="504.45"><stop offset="0.015" stop-color="#600608"/><stop offset="0.028" stop-color="#600608"/><stop offset="0.038" stop-color="#b02a30"/><stop offset="0.061" stop-color="#9a1c22"/><stop offset="0.115" stop-color="#870f14"/><stop offset="0.444" stop-color="#7e0b10"/><stop offset="0.590" stop-color="#6a080b"/><stop offset="0.592" stop-color="#cc4951"/><stop offset="0.602" stop-color="#cc4a51"/><stop offset="0.634" stop-color="#d95860"/><stop offset="0.686" stop-color="#d95a61"/><stop offset="0.770" stop-color="#be373f"/><stop offset="0.854" stop-color="#a11e24"/><stop offset="0.884" stop-color="#9a161b"/><stop offset="0.886" stop-color="#970e12"/><stop offset="0.985" stop-color="#7f0a0c"/><stop offset="1.000" stop-color="#7f0a0c"/></linearGradient><linearGradient id="g78" gradientUnits="userSpaceOnUse" x1="658.0" y1="317.2" x2="615.80" y2="505.43"><stop offset="0.000" stop-color="#600608"/><stop offset="0.028" stop-color="#600608"/><stop offset="0.038" stop-color="#b02a30"/><stop offset="0.061" stop-color="#9a1c22"/><stop offset="0.115" stop-color="#870f14"/><stop offset="0.444" stop-color="#7e0b0f"/><stop offset="0.586" stop-color="#6a080b"/><stop offset="0.589" stop-color="#cd4b52"/><stop offset="0.602" stop-color="#ce4b52"/><stop offset="0.633" stop-color="#d8575f"/><stop offset="0.686" stop-color="#d8585f"/><stop offset="0.759" stop-color="#c33c45"/><stop offset="0.812" stop-color="#af2930"/><stop offset="0.884" stop-color="#9b171b"/><stop offset="0.886" stop-color="#970e12"/><stop offset="0.985" stop-color="#7f0a0c"/></linearGradient><linearGradient id="g79" gradientUnits="userSpaceOnUse" x1="662.0" y1="318.2" x2="619.88" y2="506.28"><stop offset="0.015" stop-color="#600608"/><stop offset="0.028" stop-color="#600608"/><stop offset="0.038" stop-color="#b02a30"/><stop offset="0.061" stop-color="#9a1c22"/><stop offset="0.115" stop-color="#870f14"/><stop offset="0.444" stop-color="#7d0b0f"/><stop offset="0.582" stop-color="#6a080b"/><stop offset="0.585" stop-color="#ce4c54"/><stop offset="0.616" stop-color="#d35158"/><stop offset="0.644" stop-color="#d7565e"/><stop offset="0.686" stop-color="#d6565d"/><stop offset="0.759" stop-color="#c43d46"/><stop offset="0.812" stop-color="#b02a31"/><stop offset="0.885" stop-color="#9b171c"/><stop offset="0.887" stop-color="#970e12"/><stop offset="0.985" stop-color="#7f0a0c"/></linearGradient><linearGradient id="g80" gradientUnits="userSpaceOnUse" x1="666.0" y1="319.2" x2="624.29" y2="507.27"><stop offset="0.000" stop-color="#600608"/><stop offset="0.028" stop-color="#600608"/><stop offset="0.039" stop-color="#b02a30"/><stop offset="0.061" stop-color="#9a1c22"/><stop offset="0.115" stop-color="#870f14"/><stop offset="0.444" stop-color="#7d0b0f"/><stop offset="0.578" stop-color="#6a080b"/><stop offset="0.581" stop-color="#cf4e55"/><stop offset="0.617" stop-color="#d35159"/><stop offset="0.644" stop-color="#d6555d"/><stop offset="0.686" stop-color="#d4535a"/><stop offset="0.759" stop-color="#c43e46"/><stop offset="0.822" stop-color="#ad272e"/><stop offset="0.885" stop-color="#9b171c"/><stop offset="0.887" stop-color="#970e12"/><stop offset="0.985" stop-color="#7f0a0c"/><stop offset="1.000" stop-color="#7f0a0c"/></linearGradient><linearGradient id="g81" gradientUnits="userSpaceOnUse" x1="670.0" y1="320.3" x2="628.40" y2="508.11"><stop offset="0.015" stop-color="#600608"/><stop offset="0.028" stop-color="#600608"/><stop offset="0.039" stop-color="#b02a30"/><stop offset="0.061" stop-color="#9a1c22"/><stop offset="0.115" stop-color="#870f14"/><stop offset="0.333" stop-color="#810b10"/><stop offset="0.416" stop-color="#800b10"/><stop offset="0.573" stop-color="#6a080b"/><stop offset="0.576" stop-color="#d04f56"/><stop offset="0.654" stop-color="#d5535b"/><stop offset="0.696" stop-color="#d04d54"/><stop offset="0.759" stop-color="#c53e47"/><stop offset="0.822" stop-color="#ad282f"/><stop offset="0.885" stop-color="#9c181d"/><stop offset="0.887" stop-color="#980e12"/><stop offset="0.985" stop-color="#7f0a0c"/></linearGradient><linearGradient id="g82" gradientUnits="userSpaceOnUse" x1="674.0" y1="321.3" x2="632.85" y2="509.10"><stop offset="0.015" stop-color="#600608"/><stop offset="0.028" stop-color="#600608"/><stop offset="0.039" stop-color="#b02a30"/><stop offset="0.061" stop-color="#9a1c22"/><stop offset="0.116" stop-color="#870e13"/><stop offset="0.333" stop-color="#810b10"/><stop offset="0.416" stop-color="#800b10"/><stop offset="0.568" stop-color="#6a080b"/><stop offset="0.570" stop-color="#d15058"/><stop offset="0.612" stop-color="#d35159"/><stop offset="0.667" stop-color="#d35058"/><stop offset="0.685" stop-color="#d14f56"/><stop offset="0.727" stop-color="#cb454e"/><stop offset="0.759" stop-color="#c53f48"/><stop offset="0.822" stop-color="#ae2830"/><stop offset="0.884" stop-color="#9d191e"/><stop offset="0.885" stop-color="#980e12"/><stop offset="0.985" stop-color="#7f0a0c"/><stop offset="1.000" stop-color="#7f0a0c"/></linearGradient><linearGradient id="g83" gradientUnits="userSpaceOnUse" x1="678.0" y1="322.4" x2="637.00" y2="509.95"><stop offset="0.015" stop-color="#600608"/><stop offset="0.028" stop-color="#600608"/><stop offset="0.039" stop-color="#b02a30"/><stop offset="0.061" stop-color="#9a1c22"/><stop offset="0.116" stop-color="#870e13"/><stop offset="0.416" stop-color="#7f0b10"/><stop offset="0.563" stop-color="#6a080b"/><stop offset="0.566" stop-color="#d25259"/><stop offset="0.590" stop-color="#d6555d"/><stop offset="0.685" stop-color="#cf4c54"/><stop offset="0.727" stop-color="#cb454e"/><stop offset="0.759" stop-color="#c64049"/><stop offset="0.811" stop-color="#b22c33"/><stop offset="0.883" stop-color="#9d191f"/><stop offset="0.885" stop-color="#980e12"/><stop offset="0.985" stop-color="#7f0a0c"/></linearGradient><linearGradient id="g84" gradientUnits="userSpaceOnUse" x1="682.0" y1="323.4" x2="641.49" y2="510.93"><stop offset="0.000" stop-color="#600608"/><stop offset="0.029" stop-color="#600608"/><stop offset="0.039" stop-color="#b02a30"/><stop offset="0.061" stop-color="#9a1c22"/><stop offset="0.116" stop-color="#870e13"/><stop offset="0.416" stop-color="#7f0b10"/><stop offset="0.557" stop-color="#6a080b"/><stop offset="0.559" stop-color="#d3535a"/><stop offset="0.590" stop-color="#d8575f"/><stop offset="0.717" stop-color="#cb454d"/><stop offset="0.748" stop-color="#ca444d"/><stop offset="0.822" stop-color="#b02931"/><stop offset="0.883" stop-color="#9e1a1f"/><stop offset="0.885" stop-color="#990e12"/><stop offset="0.985" stop-color="#7f0a0c"/><stop offset="1.000" stop-color="#7f0a0c"/></linearGradient><linearGradient id="g85" gradientUnits="userSpaceOnUse" x1="686.0" y1="324.5" x2="645.69" y2="511.77"><stop offset="0.015" stop-color="#600608"/><stop offset="0.029" stop-color="#600608"/><stop offset="0.039" stop-color="#b02a30"/><stop offset="0.061" stop-color="#9a1c22"/><stop offset="0.116" stop-color="#870e13"/><stop offset="0.416" stop-color="#7e0b10"/><stop offset="0.551" stop-color="#6a080b"/><stop offset="0.554" stop-color="#d4545c"/><stop offset="0.590" stop-color="#da5961"/><stop offset="0.706" stop-color="#c9434c"/><stop offset="0.748" stop-color="#ca444e"/><stop offset="0.832" stop-color="#ad272e"/><stop offset="0.883" stop-color="#9f1b20"/><stop offset="0.885" stop-color="#990e12"/><stop offset="0.985" stop-color="#800a0c"/></linearGradient><linearGradient id="g86" gradientUnits="userSpaceOnUse" x1="690.0" y1="325.5" x2="650.22" y2="512.75"><stop offset="0.000" stop-color="#600608"/><stop offset="0.029" stop-color="#600608"/><stop offset="0.039" stop-color="#b02a30"/><stop offset="0.061" stop-color="#9a1c22"/><stop offset="0.116" stop-color="#870e13"/><stop offset="0.416" stop-color="#7d0b0f"/><stop offset="0.545" stop-color="#6a080b"/><stop offset="0.548" stop-color="#d5565e"/><stop offset="0.590" stop-color="#dc5b63"/><stop offset="0.653" stop-color="#cf4b53"/><stop offset="0.706" stop-color="#c8424a"/><stop offset="0.748" stop-color="#cb444e"/><stop offset="0.822" stop-color="#b12a32"/><stop offset="0.885" stop-color="#9f1b20"/><stop offset="0.886" stop-color="#990e12"/><stop offset="0.985" stop-color="#800a0c"/><stop offset="1.000" stop-color="#800a0c"/></linearGradient><linearGradient id="g87" gradientUnits="userSpaceOnUse" x1="694.0" y1="326.5" x2="654.47" y2="513.59"><stop offset="0.000" stop-color="#600608"/><stop offset="0.029" stop-color="#600608"/><stop offset="0.039" stop-color="#b02a30"/><stop offset="0.061" stop-color="#9a1c22"/><stop offset="0.116" stop-color="#870e13"/><stop offset="0.416" stop-color="#7d0b0f"/><stop offset="0.539" stop-color="#6a080b"/><stop offset="0.542" stop-color="#d6575f"/><stop offset="0.590" stop-color="#dd5d65"/><stop offset="0.642" stop-color="#cf4b53"/><stop offset="0.706" stop-color="#c74048"/><stop offset="0.748" stop-color="#cb454f"/><stop offset="0.822" stop-color="#b22b32"/><stop offset="0.885" stop-color="#9f1b21"/><stop offset="0.886" stop-color="#990e12"/><stop offset="0.985" stop-color="#800a0c"/><stop offset="1.000" stop-color="#800a0c"/></linearGradient><linearGradient id="g88" gradientUnits="userSpaceOnUse" x1="698.0" y1="327.6" x2="659.05" y2="514.56"><stop offset="0.015" stop-color="#600608"/><stop offset="0.029" stop-color="#600608"/><stop offset="0.039" stop-color="#b02a30"/><stop offset="0.061" stop-color="#9a1c22"/><stop offset="0.116" stop-color="#870e13"/><stop offset="0.416" stop-color="#7c0a0f"/><stop offset="0.532" stop-color="#6a080b"/><stop offset="0.535" stop-color="#d6575f"/><stop offset="0.589" stop-color="#df5f67"/><stop offset="0.642" stop-color="#ce4a52"/><stop offset="0.695" stop-color="#c53e46"/><stop offset="0.748" stop-color="#cb454f"/><stop offset="0.822" stop-color="#b32b33"/><stop offset="0.885" stop-color="#a01c22"/><stop offset="0.886" stop-color="#990e12"/><stop offset="0.985" stop-color="#800a0c"/><stop offset="1.000" stop-color="#800a0c"/></linearGradient><linearGradient id="g89" gradientUnits="userSpaceOnUse" x1="702.0" y1="328.6" x2="663.38" y2="515.40"><stop offset="0.015" stop-color="#830d11"/><stop offset="0.044" stop-color="#850e13"/><stop offset="0.047" stop-color="#a8252b"/><stop offset="0.062" stop-color="#9a1c22"/><stop offset="0.116" stop-color="#870e13"/><stop offset="0.333" stop-color="#810b10"/><stop offset="0.463" stop-color="#74090d"/><stop offset="0.526" stop-color="#6a080b"/><stop offset="0.528" stop-color="#cd4c54"/><stop offset="0.536" stop-color="#d65860"/><stop offset="0.589" stop-color="#e06068"/><stop offset="0.642" stop-color="#ce4951"/><stop offset="0.695" stop-color="#c43c44"/><stop offset="0.748" stop-color="#cc464f"/><stop offset="0.832" stop-color="#b02931"/><stop offset="0.883" stop-color="#a11c22"/><stop offset="0.885" stop-color="#9a0e12"/><stop offset="0.985" stop-color="#800a0c"/><stop offset="1.000" stop-color="#800a0c"/></linearGradient><linearGradient id="g90" gradientUnits="userSpaceOnUse" x1="706.0" y1="329.7" x2="668.00" y2="516.36"><stop offset="0.015" stop-color="#830d11"/><stop offset="0.044" stop-color="#850e12"/><stop offset="0.047" stop-color="#a9252b"/><stop offset="0.062" stop-color="#9a1c22"/><stop offset="0.116" stop-color="#870e13"/><stop offset="0.333" stop-color="#810b10"/><stop offset="0.462" stop-color="#73090d"/><stop offset="0.517" stop-color="#6a080b"/><stop offset="0.520" stop-color="#c14048"/><stop offset="0.536" stop-color="#d2545c"/><stop offset="0.589" stop-color="#df5f67"/><stop offset="0.642" stop-color="#ce4951"/><stop offset="0.695" stop-color="#c43c44"/><stop offset="0.747" stop-color="#cc4650"/><stop offset="0.843" stop-color="#ae272e"/><stop offset="0.885" stop-color="#a11b21"/><stop offset="0.886" stop-color="#9a0e12"/><stop offset="0.985" stop-color="#810a0c"/><stop offset="1.000" stop-color="#810a0c"/></linearGradient><linearGradient id="g91" gradientUnits="userSpaceOnUse" x1="710.0" y1="330.7" x2="672.42" y2="517.23"><stop offset="0.000" stop-color="#810c10"/><stop offset="0.043" stop-color="#840d12"/><stop offset="0.046" stop-color="#a9262c"/><stop offset="0.062" stop-color="#9a1c22"/><stop offset="0.116" stop-color="#870e13"/><stop offset="0.333" stop-color="#810b10"/><stop offset="0.472" stop-color="#70090c"/><stop offset="0.509" stop-color="#6a080b"/><stop offset="0.512" stop-color="#b6333b"/><stop offset="0.536" stop-color="#cf5058"/><stop offset="0.589" stop-color="#de5f67"/><stop offset="0.642" stop-color="#ce4951"/><stop offset="0.694" stop-color="#c43c44"/><stop offset="0.747" stop-color="#cc4650"/><stop offset="0.790" stop-color="#c03941"/><stop offset="0.883" stop-color="#a21b21"/><stop offset="0.885" stop-color="#9a0e12"/><stop offset="0.985" stop-color="#810a0c"/></linearGradient><linearGradient id="g92" gradientUnits="userSpaceOnUse" x1="714.0" y1="331.8" x2="677.07" y2="518.17"><stop offset="0.000" stop-color="#810c10"/><stop offset="0.043" stop-color="#830d12"/><stop offset="0.046" stop-color="#aa262c"/><stop offset="0.062" stop-color="#9a1c22"/><stop offset="0.116" stop-color="#870e13"/><stop offset="0.333" stop-color="#800b10"/><stop offset="0.472" stop-color="#6f090c"/><stop offset="0.501" stop-color="#6a080b"/><stop offset="0.504" stop-color="#ab272f"/><stop offset="0.535" stop-color="#cb4c54"/><stop offset="0.588" stop-color="#de5e66"/><stop offset="0.641" stop-color="#ce4951"/><stop offset="0.694" stop-color="#c43c44"/><stop offset="0.747" stop-color="#cc4750"/><stop offset="0.779" stop-color="#c43e47"/><stop offset="0.883" stop-color="#a21b20"/><stop offset="0.885" stop-color="#9a0e12"/><stop offset="0.985" stop-color="#820a0c"/></linearGradient><linearGradient id="g93" gradientUnits="userSpaceOnUse" x1="718.0" y1="332.9" x2="681.65" y2="519.07"><stop offset="0.000" stop-color="#800c10"/><stop offset="0.043" stop-color="#830d12"/><stop offset="0.046" stop-color="#aa262c"/><stop offset="0.062" stop-color="#9a1c22"/><stop offset="0.116" stop-color="#870e13"/><stop offset="0.222" stop-color="#820c11"/><stop offset="0.333" stop-color="#800b10"/><stop offset="0.493" stop-color="#6a080b"/><stop offset="0.495" stop-color="#a11d24"/><stop offset="0.535" stop-color="#c74850"/><stop offset="0.588" stop-color="#dd5e66"/><stop offset="0.641" stop-color="#ce4951"/><stop offset="0.694" stop-color="#c33c43"/><stop offset="0.747" stop-color="#cd4750"/><stop offset="0.789" stop-color="#c13b43"/><stop offset="0.885" stop-color="#a21a1f"/><stop offset="0.886" stop-color="#9a0e12"/><stop offset="0.985" stop-color="#830a0c"/></linearGradient><linearGradient id="g94" gradientUnits="userSpaceOnUse" x1="722.0" y1="333.9" x2="686.28" y2="519.97"><stop offset="0.016" stop-color="#810c10"/><stop offset="0.042" stop-color="#820d11"/><stop offset="0.045" stop-color="#aa262c"/><stop offset="0.062" stop-color="#9a1c22"/><stop offset="0.116" stop-color="#870e13"/><stop offset="0.222" stop-color="#820c11"/><stop offset="0.333" stop-color="#800b10"/><stop offset="0.483" stop-color="#6a080b"/><stop offset="0.486" stop-color="#9e1b22"/><stop offset="0.503" stop-color="#a6242b"/><stop offset="0.534" stop-color="#c3444c"/><stop offset="0.587" stop-color="#dc5d65"/><stop offset="0.651" stop-color="#cc474e"/><stop offset="0.693" stop-color="#c33c43"/><stop offset="0.757" stop-color="#cd4750"/><stop offset="0.884" stop-color="#a3191e"/><stop offset="0.886" stop-color="#9a0e11"/><stop offset="0.984" stop-color="#830a0c"/><stop offset="1.000" stop-color="#830a0c"/></linearGradient><linearGradient id="g95" gradientUnits="userSpaceOnUse" x1="726.0" y1="335.0" x2="691.10" y2="520.94"><stop offset="0.016" stop-color="#800c10"/><stop offset="0.042" stop-color="#810d11"/><stop offset="0.045" stop-color="#aa262c"/><stop offset="0.062" stop-color="#9a1c22"/><stop offset="0.116" stop-color="#870e13"/><stop offset="0.316" stop-color="#800b10"/><stop offset="0.472" stop-color="#6a080b"/><stop offset="0.475" stop-color="#9a191f"/><stop offset="0.491" stop-color="#9d1b22"/><stop offset="0.534" stop-color="#bf4048"/><stop offset="0.587" stop-color="#dc5c64"/><stop offset="0.672" stop-color="#c74149"/><stop offset="0.693" stop-color="#c33c43"/><stop offset="0.757" stop-color="#cd4851"/><stop offset="0.884" stop-color="#a3191e"/><stop offset="0.885" stop-color="#9a0d11"/><stop offset="0.984" stop-color="#840a0c"/></linearGradient><linearGradient id="g96" gradientUnits="userSpaceOnUse" x1="730.0" y1="336.1" x2="695.67" y2="521.79"><stop offset="0.000" stop-color="#7f0b10"/><stop offset="0.042" stop-color="#810c11"/><stop offset="0.046" stop-color="#aa262c"/><stop offset="0.062" stop-color="#9a1c22"/><stop offset="0.116" stop-color="#870e13"/><stop offset="0.315" stop-color="#800b10"/><stop offset="0.333" stop-color="#800b10"/><stop offset="0.461" stop-color="#6a080b"/><stop offset="0.465" stop-color="#96161d"/><stop offset="0.491" stop-color="#9b1a21"/><stop offset="0.523" stop-color="#b2333a"/><stop offset="0.554" stop-color="#c84951"/><stop offset="0.586" stop-color="#db5c64"/><stop offset="0.667" stop-color="#c8424a"/><stop offset="0.692" stop-color="#c33c43"/><stop offset="0.756" stop-color="#ce4951"/><stop offset="0.883" stop-color="#a4181d"/><stop offset="0.885" stop-color="#9b0d11"/><stop offset="0.984" stop-color="#840a0c"/><stop offset="1.000" stop-color="#840a0c"/></linearGradient><linearGradient id="g97" gradientUnits="userSpaceOnUse" x1="734.0" y1="337.2" x2="700.86" y2="522.85"><stop offset="0.000" stop-color="#7e0b0f"/><stop offset="0.043" stop-color="#800c11"/><stop offset="0.046" stop-color="#aa262c"/><stop offset="0.063" stop-color="#9a1c22"/><stop offset="0.116" stop-color="#870e13"/><stop offset="0.333" stop-color="#7f0b10"/><stop offset="0.450" stop-color="#6a080b"/><stop offset="0.453" stop-color="#93151b"/><stop offset="0.490" stop-color="#9a1920"/><stop offset="0.585" stop-color="#da5b63"/><stop offset="0.681" stop-color="#c53e46"/><stop offset="0.702" stop-color="#c33d44"/><stop offset="0.755" stop-color="#ce4952"/><stop offset="0.797" stop-color="#c13b42"/><stop offset="0.882" stop-color="#a5171c"/><stop offset="0.884" stop-color="#9b0d11"/><stop offset="0.984" stop-color="#850a0c"/></linearGradient><linearGradient id="g98" gradientUnits="userSpaceOnUse" x1="738.0" y1="338.2" x2="705.26" y2="523.61"><stop offset="0.000" stop-color="#7e0b0f"/><stop offset="0.044" stop-color="#800c10"/><stop offset="0.048" stop-color="#a9252b"/><stop offset="0.063" stop-color="#9a1c22"/><stop offset="0.115" stop-color="#870e13"/><stop offset="0.333" stop-color="#7e0b0f"/><stop offset="0.437" stop-color="#6a080b"/><stop offset="0.441" stop-color="#91141a"/><stop offset="0.478" stop-color="#95161d"/><stop offset="0.500" stop-color="#9d1d24"/><stop offset="0.585" stop-color="#d95a62"/><stop offset="0.616" stop-color="#d35159"/><stop offset="0.691" stop-color="#c23c43"/><stop offset="0.754" stop-color="#cf4a52"/><stop offset="0.786" stop-color="#c64048"/><stop offset="0.880" stop-color="#a6181c"/><stop offset="0.881" stop-color="#9b0d11"/><stop offset="0.984" stop-color="#850a0c"/><stop offset="1.000" stop-color="#850a0c"/></linearGradient><linearGradient id="g99" gradientUnits="userSpaceOnUse" x1="742.0" y1="339.3" x2="710.67" y2="524.71"><stop offset="0.016" stop-color="#7e0b0f"/><stop offset="0.046" stop-color="#7f0c10"/><stop offset="0.050" stop-color="#a7242a"/><stop offset="0.063" stop-color="#9a1c22"/><stop offset="0.131" stop-color="#830c11"/><stop offset="0.333" stop-color="#7c0a0f"/><stop offset="0.424" stop-color="#6a080b"/><stop offset="0.427" stop-color="#8e1218"/><stop offset="0.478" stop-color="#93151b"/><stop offset="0.509" stop-color="#a2222a"/><stop offset="0.562" stop-color="#c74850"/><stop offset="0.584" stop-color="#d85961"/><stop offset="0.605" stop-color="#d6555d"/><stop offset="0.679" stop-color="#c43e45"/><stop offset="0.700" stop-color="#c33c43"/><stop offset="0.753" stop-color="#cf4b53"/><stop offset="0.778" stop-color="#ca444c"/><stop offset="0.879" stop-color="#a6171c"/><stop offset="0.881" stop-color="#9b0d11"/><stop offset="0.984" stop-color="#860a0c"/></linearGradient><linearGradient id="g100" gradientUnits="userSpaceOnUse" x1="746.0" y1="340.4" x2="714.98" y2="525.41"><stop offset="0.000" stop-color="#7d0b0f"/><stop offset="0.049" stop-color="#7f0c10"/><stop offset="0.052" stop-color="#a42228"/><stop offset="0.063" stop-color="#9a1c22"/><stop offset="0.131" stop-color="#830c11"/><stop offset="0.314" stop-color="#7d0b0f"/><stop offset="0.409" stop-color="#6a080b"/><stop offset="0.413" stop-color="#8c1117"/><stop offset="0.466" stop-color="#8d1218"/><stop offset="0.498" stop-color="#991a21"/><stop offset="0.540" stop-color="#b3343c"/><stop offset="0.583" stop-color="#d75860"/><stop offset="0.604" stop-color="#d6555d"/><stop offset="0.678" stop-color="#c43e45"/><stop offset="0.699" stop-color="#c33c43"/><stop offset="0.753" stop-color="#d04b53"/><stop offset="0.774" stop-color="#cc474e"/><stop offset="0.848" stop-color="#b1262b"/><stop offset="0.880" stop-color="#a6161a"/><stop offset="0.882" stop-color="#9b0d11"/><stop offset="0.984" stop-color="#860a0c"/></linearGradient><linearGradient id="g101" gradientUnits="userSpaceOnUse" x1="750.0" y1="341.5" x2="719.82" y2="526.27"><stop offset="0.000" stop-color="#7c0b0f"/><stop offset="0.053" stop-color="#7e0b10"/><stop offset="0.056" stop-color="#a12026"/><stop offset="0.063" stop-color="#9a1c22"/><stop offset="0.132" stop-color="#830c11"/><stop offset="0.314" stop-color="#7b0a0f"/><stop offset="0.393" stop-color="#6a080b"/><stop offset="0.397" stop-color="#891015"/><stop offset="0.465" stop-color="#8b1116"/><stop offset="0.507" stop-color="#9c1e25"/><stop offset="0.539" stop-color="#af3038"/><stop offset="0.582" stop-color="#d6575f"/><stop offset="0.592" stop-color="#d85961"/><stop offset="0.688" stop-color="#c23c42"/><stop offset="0.720" stop-color="#c8434a"/><stop offset="0.752" stop-color="#d04c54"/><stop offset="0.762" stop-color="#d14c54"/><stop offset="0.847" stop-color="#b2262b"/><stop offset="0.879" stop-color="#a7151a"/><stop offset="0.881" stop-color="#9b0d11"/><stop offset="0.984" stop-color="#870a0c"/><stop offset="1.000" stop-color="#870a0c"/></linearGradient><linearGradient id="g102" gradientUnits="userSpaceOnUse" x1="754.0" y1="342.6" x2="724.32" y2="527.01"><stop offset="0.000" stop-color="#7c0b0f"/><stop offset="0.057" stop-color="#7e0b10"/><stop offset="0.060" stop-color="#9d1e24"/><stop offset="0.115" stop-color="#870e13"/><stop offset="0.132" stop-color="#830c11"/><stop offset="0.222" stop-color="#810b10"/><stop offset="0.333" stop-color="#74090d"/><stop offset="0.375" stop-color="#6a080b"/><stop offset="0.379" stop-color="#870f14"/><stop offset="0.464" stop-color="#891015"/><stop offset="0.517" stop-color="#9f2027"/><stop offset="0.538" stop-color="#ac2c34"/><stop offset="0.581" stop-color="#d5565e"/><stop offset="0.591" stop-color="#d75860"/><stop offset="0.687" stop-color="#c13b42"/><stop offset="0.708" stop-color="#c53f46"/><stop offset="0.751" stop-color="#d14d54"/><stop offset="0.761" stop-color="#d24d55"/><stop offset="0.836" stop-color="#b62c31"/><stop offset="0.878" stop-color="#a71519"/><stop offset="0.880" stop-color="#9b0d11"/><stop offset="0.984" stop-color="#880a0d"/><stop offset="1.000" stop-color="#880a0d"/></linearGradient><linearGradient id="g103" gradientUnits="userSpaceOnUse" x1="758.0" y1="343.7" x2="728.91" y2="527.76"><stop offset="0.016" stop-color="#7c0b0f"/><stop offset="0.062" stop-color="#7d0b0f"/><stop offset="0.064" stop-color="#9a1c22"/><stop offset="0.132" stop-color="#830c11"/><stop offset="0.222" stop-color="#810b10"/><stop offset="0.333" stop-color="#6f090c"/><stop offset="0.355" stop-color="#6a080b"/><stop offset="0.359" stop-color="#840e13"/><stop offset="0.473" stop-color="#8a1116"/><stop offset="0.526" stop-color="#a02128"/><stop offset="0.537" stop-color="#a82830"/><stop offset="0.580" stop-color="#d3555d"/><stop offset="0.590" stop-color="#d75860"/><stop offset="0.686" stop-color="#c13b42"/><stop offset="0.707" stop-color="#c53f46"/><stop offset="0.760" stop-color="#d24e56"/><stop offset="0.835" stop-color="#b72c31"/><stop offset="0.877" stop-color="#a81418"/><stop offset="0.879" stop-color="#9b0d11"/><stop offset="1.000" stop-color="#880a0d"/></linearGradient><linearGradient id="g104" gradientUnits="userSpaceOnUse" x1="762.0" y1="344.8" x2="733.55" y2="528.51"><stop offset="0.000" stop-color="#7b0a0f"/><stop offset="0.067" stop-color="#7d0b0f"/><stop offset="0.071" stop-color="#981a20"/><stop offset="0.133" stop-color="#830c11"/><stop offset="0.222" stop-color="#810b10"/><stop offset="0.333" stop-color="#6a080b"/><stop offset="0.336" stop-color="#830d12"/><stop offset="0.461" stop-color="#860e13"/><stop offset="0.525" stop-color="#9e1f26"/><stop offset="0.547" stop-color="#b1323a"/><stop offset="0.579" stop-color="#d2545c"/><stop offset="0.589" stop-color="#d6575f"/><stop offset="0.685" stop-color="#c13b42"/><stop offset="0.706" stop-color="#c53f46"/><stop offset="0.760" stop-color="#d34f57"/><stop offset="0.834" stop-color="#b82d32"/><stop offset="0.877" stop-color="#a81418"/><stop offset="0.878" stop-color="#9c0d11"/><stop offset="0.984" stop-color="#890a0d"/></linearGradient><linearGradient id="g105" gradientUnits="userSpaceOnUse" x1="766.0" y1="345.9" x2="737.94" y2="529.17"><stop offset="0.016" stop-color="#7c0b0f"/><stop offset="0.074" stop-color="#7d0b0f"/><stop offset="0.077" stop-color="#96191f"/><stop offset="0.115" stop-color="#870e13"/><stop offset="0.133" stop-color="#820c11"/><stop offset="0.222" stop-color="#800b10"/><stop offset="0.308" stop-color="#6a080b"/><stop offset="0.311" stop-color="#820d11"/><stop offset="0.460" stop-color="#860e13"/><stop offset="0.524" stop-color="#9e1e26"/><stop offset="0.545" stop-color="#b03139"/><stop offset="0.577" stop-color="#d1535b"/><stop offset="0.588" stop-color="#d5565e"/><stop offset="0.684" stop-color="#c13b41"/><stop offset="0.759" stop-color="#d45058"/><stop offset="0.823" stop-color="#bc3339"/><stop offset="0.874" stop-color="#a91519"/><stop offset="0.876" stop-color="#9c0d11"/><stop offset="0.984" stop-color="#890a0d"/></linearGradient><linearGradient id="g106" gradientUnits="userSpaceOnUse" x1="770.0" y1="347.0" x2="742.68" y2="529.93"><stop offset="0.016" stop-color="#7c0b0f"/><stop offset="0.081" stop-color="#7d0b0f"/><stop offset="0.084" stop-color="#93171d"/><stop offset="0.115" stop-color="#870e13"/><stop offset="0.134" stop-color="#820c11"/><stop offset="0.222" stop-color="#7c0a0f"/><stop offset="0.282" stop-color="#6a080b"/><stop offset="0.285" stop-color="#820d11"/><stop offset="0.459" stop-color="#860e13"/><stop offset="0.523" stop-color="#9d1e25"/><stop offset="0.544" stop-color="#b03038"/><stop offset="0.576" stop-color="#d0525a"/><stop offset="0.587" stop-color="#d4555d"/><stop offset="0.683" stop-color="#c13b41"/><stop offset="0.736" stop-color="#cf4b52"/><stop offset="0.758" stop-color="#d45158"/><stop offset="0.822" stop-color="#bc343a"/><stop offset="0.875" stop-color="#a81418"/><stop offset="0.877" stop-color="#9c0d11"/><stop offset="0.984" stop-color="#8a0a0d"/></linearGradient><linearGradient id="g107" gradientUnits="userSpaceOnUse" x1="774.0" y1="348.1" x2="746.92" y2="530.51"><stop offset="0.016" stop-color="#7c0b0f"/><stop offset="0.091" stop-color="#7d0b0f"/><stop offset="0.095" stop-color="#90151a"/><stop offset="0.115" stop-color="#870e13"/><stop offset="0.222" stop-color="#750a0e"/><stop offset="0.254" stop-color="#6b080b"/><stop offset="0.258" stop-color="#810c11"/><stop offset="0.457" stop-color="#860e13"/><stop offset="0.522" stop-color="#9d1e25"/><stop offset="0.543" stop-color="#af2f37"/><stop offset="0.575" stop-color="#cf5058"/><stop offset="0.586" stop-color="#d3545c"/><stop offset="0.660" stop-color="#c54047"/><stop offset="0.682" stop-color="#c13b41"/><stop offset="0.735" stop-color="#cf4b52"/><stop offset="0.757" stop-color="#d55159"/><stop offset="0.821" stop-color="#bd343a"/><stop offset="0.873" stop-color="#a91519"/><stop offset="0.874" stop-color="#9c0d11"/><stop offset="1.000" stop-color="#8a0a0d"/></linearGradient><linearGradient id="g108" gradientUnits="userSpaceOnUse" x1="778.0" y1="349.2" x2="751.74" y2="531.26"><stop offset="0.016" stop-color="#7c0b0f"/><stop offset="0.107" stop-color="#7e0b0f"/><stop offset="0.110" stop-color="#890f15"/><stop offset="0.135" stop-color="#810b10"/><stop offset="0.224" stop-color="#6b080b"/><stop offset="0.227" stop-color="#800c10"/><stop offset="0.456" stop-color="#860e13"/><stop offset="0.520" stop-color="#9c1d25"/><stop offset="0.531" stop-color="#a3232b"/><stop offset="0.574" stop-color="#ce4f57"/><stop offset="0.584" stop-color="#d2535b"/><stop offset="0.638" stop-color="#c9444b"/><stop offset="0.681" stop-color="#c13b41"/><stop offset="0.713" stop-color="#c9444a"/><stop offset="0.756" stop-color="#d5525a"/><stop offset="0.820" stop-color="#be353b"/><stop offset="0.872" stop-color="#a91519"/><stop offset="0.873" stop-color="#9c0c10"/><stop offset="0.984" stop-color="#8b0a0d"/></linearGradient><linearGradient id="g109" gradientUnits="userSpaceOnUse" x1="782.0" y1="350.4" x2="755.93" y2="531.80"><stop offset="0.016" stop-color="#7c0b0f"/><stop offset="0.135" stop-color="#800b10"/><stop offset="0.184" stop-color="#6b080b"/><stop offset="0.187" stop-color="#7f0c10"/><stop offset="0.455" stop-color="#860e13"/><stop offset="0.519" stop-color="#9c1d24"/><stop offset="0.530" stop-color="#a3232a"/><stop offset="0.572" stop-color="#cd4e56"/><stop offset="0.583" stop-color="#d1525a"/><stop offset="0.626" stop-color="#ca454d"/><stop offset="0.680" stop-color="#c13b41"/><stop offset="0.701" stop-color="#c54046"/><stop offset="0.755" stop-color="#d6525a"/><stop offset="0.819" stop-color="#be363c"/><stop offset="0.873" stop-color="#a81418"/><stop offset="0.874" stop-color="#9c0c10"/><stop offset="0.984" stop-color="#8b0a0d"/></linearGradient><linearGradient id="g110" gradientUnits="userSpaceOnUse" x1="786.0" y1="351.5" x2="760.66" y2="532.49"><stop offset="0.016" stop-color="#7c0b0f"/><stop offset="0.453" stop-color="#860e13"/><stop offset="0.528" stop-color="#a22229"/><stop offset="0.571" stop-color="#cc4d55"/><stop offset="0.582" stop-color="#d05159"/><stop offset="0.625" stop-color="#c9444c"/><stop offset="0.678" stop-color="#c13b41"/><stop offset="0.700" stop-color="#c54046"/><stop offset="0.754" stop-color="#d6535b"/><stop offset="0.818" stop-color="#bf363c"/><stop offset="0.870" stop-color="#a91519"/><stop offset="0.872" stop-color="#9d0c10"/><stop offset="1.000" stop-color="#8c0a0d"/></linearGradient><linearGradient id="g111" gradientUnits="userSpaceOnUse" x1="790.0" y1="352.6" x2="764.93" y2="533.04"><stop offset="0.016" stop-color="#7c0b0f"/><stop offset="0.452" stop-color="#850e13"/><stop offset="0.516" stop-color="#9b1c23"/><stop offset="0.527" stop-color="#a12129"/><stop offset="0.570" stop-color="#cb4c54"/><stop offset="0.581" stop-color="#cf4f57"/><stop offset="0.624" stop-color="#c8434b"/><stop offset="0.688" stop-color="#c13c42"/><stop offset="0.753" stop-color="#d7545c"/><stop offset="0.817" stop-color="#bf373d"/><stop offset="0.869" stop-color="#a91519"/><stop offset="0.871" stop-color="#9d0c10"/><stop offset="1.000" stop-color="#8d0a0d"/></linearGradient><linearGradient id="g112" gradientUnits="userSpaceOnUse" x1="794.0" y1="353.7" x2="769.52" y2="533.66"><stop offset="0.016" stop-color="#7c0b0f"/><stop offset="0.450" stop-color="#850e12"/><stop offset="0.515" stop-color="#9b1c23"/><stop offset="0.525" stop-color="#a02128"/><stop offset="0.568" stop-color="#ca4b53"/><stop offset="0.579" stop-color="#ce4e56"/><stop offset="0.622" stop-color="#c8424a"/><stop offset="0.687" stop-color="#c13c42"/><stop offset="0.751" stop-color="#d7545c"/><stop offset="0.816" stop-color="#c0373e"/><stop offset="0.868" stop-color="#a91519"/><stop offset="0.870" stop-color="#9d0c10"/><stop offset="1.000" stop-color="#8d0a0d"/></linearGradient><linearGradient id="g113" gradientUnits="userSpaceOnUse" x1="798.0" y1="354.9" x2="773.88" y2="534.20"><stop offset="0.000" stop-color="#7b0a0e"/><stop offset="0.459" stop-color="#870f14"/><stop offset="0.524" stop-color="#a02027"/><stop offset="0.567" stop-color="#c94a52"/><stop offset="0.578" stop-color="#cd4d55"/><stop offset="0.621" stop-color="#c74149"/><stop offset="0.686" stop-color="#c13b42"/><stop offset="0.750" stop-color="#d8555d"/><stop offset="0.815" stop-color="#c0383e"/><stop offset="0.867" stop-color="#a91519"/><stop offset="0.869" stop-color="#9d0c10"/><stop offset="0.984" stop-color="#8e0a0d"/></linearGradient><linearGradient id="g114" gradientUnits="userSpaceOnUse" x1="802.0" y1="356.0" x2="778.36" y2="534.76"><stop offset="0.016" stop-color="#7c0b0f"/><stop offset="0.447" stop-color="#850e12"/><stop offset="0.522" stop-color="#9f1f26"/><stop offset="0.566" stop-color="#c84951"/><stop offset="0.576" stop-color="#cc4c54"/><stop offset="0.620" stop-color="#c64048"/><stop offset="0.684" stop-color="#c13b41"/><stop offset="0.749" stop-color="#d8565d"/><stop offset="0.814" stop-color="#c1383f"/><stop offset="0.866" stop-color="#a91519"/><stop offset="0.868" stop-color="#9d0c10"/><stop offset="1.000" stop-color="#8e0a0d"/></linearGradient><linearGradient id="g115" gradientUnits="userSpaceOnUse" x1="806.0" y1="357.2" x2="782.81" y2="535.28"><stop offset="0.000" stop-color="#7b0a0e"/><stop offset="0.445" stop-color="#850d12"/><stop offset="0.521" stop-color="#9e1e25"/><stop offset="0.556" stop-color="#c1424a"/><stop offset="0.575" stop-color="#cb4b53"/><stop offset="0.607" stop-color="#c64149"/><stop offset="0.683" stop-color="#c13b41"/><stop offset="0.748" stop-color="#d8565e"/><stop offset="0.813" stop-color="#c13940"/><stop offset="0.866" stop-color="#a91519"/><stop offset="0.867" stop-color="#9d0c10"/><stop offset="1.000" stop-color="#8f0a0d"/></linearGradient><linearGradient id="g116" gradientUnits="userSpaceOnUse" x1="810.0" y1="358.3" x2="787.17" y2="535.76"><stop offset="0.000" stop-color="#7b0a0e"/><stop offset="0.444" stop-color="#850d12"/><stop offset="0.519" stop-color="#9e1e25"/><stop offset="0.556" stop-color="#c2424a"/><stop offset="0.574" stop-color="#ca4a52"/><stop offset="0.606" stop-color="#c54047"/><stop offset="0.682" stop-color="#c13b41"/><stop offset="0.747" stop-color="#d9575f"/><stop offset="0.812" stop-color="#c23a40"/><stop offset="0.867" stop-color="#a81418"/><stop offset="0.868" stop-color="#9d0c10"/><stop offset="1.000" stop-color="#8f0a0d"/></linearGradient><linearGradient id="g117" gradientUnits="userSpaceOnUse" x1="814.0" y1="359.4" x2="791.72" y2="536.27"><stop offset="0.000" stop-color="#7b0a0e"/><stop offset="0.444" stop-color="#850e12"/><stop offset="0.518" stop-color="#9d1d24"/><stop offset="0.556" stop-color="#c2434b"/><stop offset="0.572" stop-color="#c94951"/><stop offset="0.605" stop-color="#c43e46"/><stop offset="0.681" stop-color="#c13b41"/><stop offset="0.746" stop-color="#d9575f"/><stop offset="0.790" stop-color="#cb454d"/><stop offset="0.833" stop-color="#b82b31"/><stop offset="0.866" stop-color="#a81418"/><stop offset="0.868" stop-color="#9d0c10"/><stop offset="0.983" stop-color="#900a0d"/></linearGradient><linearGradient id="g118" gradientUnits="userSpaceOnUse" x1="818.0" y1="360.6" x2="795.98" y2="536.68"><stop offset="0.017" stop-color="#7c0a0f"/><stop offset="0.444" stop-color="#850e12"/><stop offset="0.516" stop-color="#9c1d23"/><stop offset="0.560" stop-color="#c5464e"/><stop offset="0.571" stop-color="#c84850"/><stop offset="0.604" stop-color="#c33d45"/><stop offset="0.680" stop-color="#c13b41"/><stop offset="0.745" stop-color="#da5860"/><stop offset="0.811" stop-color="#c33b42"/><stop offset="0.865" stop-color="#a81418"/><stop offset="0.867" stop-color="#9d0c10"/><stop offset="0.983" stop-color="#910a0d"/></linearGradient><linearGradient id="g119" gradientUnits="userSpaceOnUse" x1="822.0" y1="361.8" x2="800.63" y2="537.18"><stop offset="0.000" stop-color="#7b0a0e"/><stop offset="0.449" stop-color="#860e13"/><stop offset="0.515" stop-color="#9c1c23"/><stop offset="0.559" stop-color="#c5454d"/><stop offset="0.570" stop-color="#c7464e"/><stop offset="0.602" stop-color="#c23c44"/><stop offset="0.679" stop-color="#c13b41"/><stop offset="0.744" stop-color="#da5860"/><stop offset="0.788" stop-color="#cc464e"/><stop offset="0.832" stop-color="#b92c32"/><stop offset="0.863" stop-color="#a91519"/><stop offset="0.865" stop-color="#9e0c10"/><stop offset="1.000" stop-color="#910a0d"/></linearGradient><linearGradient id="g120" gradientUnits="userSpaceOnUse" x1="826.0" y1="362.9" x2="804.85" y2="537.54"><stop offset="0.000" stop-color="#7b0a0e"/><stop offset="0.448" stop-color="#860e13"/><stop offset="0.513" stop-color="#9c1c22"/><stop offset="0.557" stop-color="#c4444c"/><stop offset="0.579" stop-color="#c44149"/><stop offset="0.601" stop-color="#c13b43"/><stop offset="0.678" stop-color="#c13b41"/><stop offset="0.743" stop-color="#da5961"/><stop offset="0.787" stop-color="#cc474f"/><stop offset="0.831" stop-color="#b92c32"/><stop offset="0.864" stop-color="#a81418"/><stop offset="0.866" stop-color="#9e0b0f"/><stop offset="1.000" stop-color="#920a0d"/></linearGradient><linearGradient id="g121" gradientUnits="userSpaceOnUse" x1="830.0" y1="364.1" x2="809.46" y2="537.98"><stop offset="0.000" stop-color="#7b0a0e"/><stop offset="0.446" stop-color="#860e13"/><stop offset="0.512" stop-color="#9b1b22"/><stop offset="0.556" stop-color="#c3444c"/><stop offset="0.578" stop-color="#c34048"/><stop offset="0.600" stop-color="#c03a42"/><stop offset="0.676" stop-color="#c13b41"/><stop offset="0.742" stop-color="#db5961"/><stop offset="0.764" stop-color="#d5525a"/><stop offset="0.808" stop-color="#c53c44"/><stop offset="0.863" stop-color="#a81418"/><stop offset="0.865" stop-color="#9e0b0f"/><stop offset="1.000" stop-color="#920a0d"/></linearGradient><linearGradient id="g122" gradientUnits="userSpaceOnUse" x1="834.0" y1="365.2" x2="813.77" y2="538.34"><stop offset="0.017" stop-color="#7c0a0f"/><stop offset="0.433" stop-color="#830d11"/><stop offset="0.510" stop-color="#9b1b22"/><stop offset="0.556" stop-color="#c3434b"/><stop offset="0.587" stop-color="#c03b43"/><stop offset="0.609" stop-color="#bf3940"/><stop offset="0.675" stop-color="#c03b41"/><stop offset="0.741" stop-color="#db5a62"/><stop offset="0.763" stop-color="#d6535b"/><stop offset="0.807" stop-color="#c53d45"/><stop offset="0.862" stop-color="#a81418"/><stop offset="0.863" stop-color="#9e0b0f"/><stop offset="1.000" stop-color="#930a0d"/></linearGradient><linearGradient id="g123" gradientUnits="userSpaceOnUse" x1="838.0" y1="366.4" x2="818.24" y2="538.71"><stop offset="0.017" stop-color="#7c0a0e"/><stop offset="0.442" stop-color="#850e12"/><stop offset="0.508" stop-color="#9a1b21"/><stop offset="0.552" stop-color="#c2424a"/><stop offset="0.574" stop-color="#c13e46"/><stop offset="0.596" stop-color="#be373f"/><stop offset="0.673" stop-color="#c03a40"/><stop offset="0.739" stop-color="#db5a62"/><stop offset="0.761" stop-color="#d7545c"/><stop offset="0.816" stop-color="#c0363d"/><stop offset="0.859" stop-color="#a91519"/><stop offset="0.860" stop-color="#9e0b0f"/><stop offset="1.000" stop-color="#930a0d"/></linearGradient><linearGradient id="g124" gradientUnits="userSpaceOnUse" x1="842.0" y1="367.6" x2="822.71" y2="539.06"><stop offset="0.000" stop-color="#7b0a0e"/><stop offset="0.429" stop-color="#830c11"/><stop offset="0.506" stop-color="#9a1a20"/><stop offset="0.528" stop-color="#ac2c33"/><stop offset="0.550" stop-color="#c1424a"/><stop offset="0.594" stop-color="#bd363e"/><stop offset="0.672" stop-color="#c03a40"/><stop offset="0.738" stop-color="#dc5a62"/><stop offset="0.749" stop-color="#dc5a62"/><stop offset="0.804" stop-color="#c63e46"/><stop offset="0.857" stop-color="#a91519"/><stop offset="0.859" stop-color="#9e0b0f"/><stop offset="1.000" stop-color="#940a0d"/></linearGradient><linearGradient id="g125" gradientUnits="userSpaceOnUse" x1="846.0" y1="368.8" x2="827.03" y2="539.35"><stop offset="0.017" stop-color="#7c0a0e"/><stop offset="0.427" stop-color="#820c10"/><stop offset="0.504" stop-color="#991a20"/><stop offset="0.527" stop-color="#ab2b32"/><stop offset="0.549" stop-color="#c04048"/><stop offset="0.571" stop-color="#c03c44"/><stop offset="0.593" stop-color="#bc353d"/><stop offset="0.670" stop-color="#c03a40"/><stop offset="0.736" stop-color="#dc5b63"/><stop offset="0.747" stop-color="#dc5b63"/><stop offset="0.802" stop-color="#c73f47"/><stop offset="0.857" stop-color="#a81418"/><stop offset="0.859" stop-color="#9e0b0f"/><stop offset="1.000" stop-color="#940a0d"/></linearGradient><linearGradient id="g126" gradientUnits="userSpaceOnUse" x1="850.0" y1="369.9" x2="831.68" y2="539.71"><stop offset="0.000" stop-color="#7b0a0e"/><stop offset="0.436" stop-color="#840d12"/><stop offset="0.502" stop-color="#99191f"/><stop offset="0.525" stop-color="#a92930"/><stop offset="0.547" stop-color="#bf3f47"/><stop offset="0.558" stop-color="#c03f47"/><stop offset="0.591" stop-color="#bb333b"/><stop offset="0.668" stop-color="#c03a40"/><stop offset="0.734" stop-color="#dc5b63"/><stop offset="0.745" stop-color="#dd5c64"/><stop offset="0.800" stop-color="#c74047"/><stop offset="0.855" stop-color="#a81418"/><stop offset="0.857" stop-color="#9e0b0f"/><stop offset="1.000" stop-color="#950a0e"/></linearGradient><linearGradient id="g127" gradientUnits="userSpaceOnUse" x1="854.0" y1="371.1" x2="835.99" y2="539.97"><stop offset="0.000" stop-color="#7b0a0e"/><stop offset="0.434" stop-color="#840d11"/><stop offset="0.511" stop-color="#9d1d24"/><stop offset="0.545" stop-color="#bd3d45"/><stop offset="0.567" stop-color="#be3b43"/><stop offset="0.590" stop-color="#ba323a"/><stop offset="0.667" stop-color="#c03a40"/><stop offset="0.732" stop-color="#dc5b63"/><stop offset="0.743" stop-color="#de5d65"/><stop offset="0.798" stop-color="#c84048"/><stop offset="0.851" stop-color="#a9151a"/><stop offset="0.853" stop-color="#9f0b0f"/><stop offset="0.982" stop-color="#960a0e"/></linearGradient><linearGradient id="g128" gradientUnits="userSpaceOnUse" x1="858.0" y1="372.3" x2="840.51" y2="540.25"><stop offset="0.018" stop-color="#7b0a0e"/><stop offset="0.432" stop-color="#830d11"/><stop offset="0.509" stop-color="#9c1c22"/><stop offset="0.542" stop-color="#bc3c43"/><stop offset="0.556" stop-color="#bf3d45"/><stop offset="0.589" stop-color="#b93139"/><stop offset="0.667" stop-color="#c03a40"/><stop offset="0.730" stop-color="#dc5c63"/><stop offset="0.741" stop-color="#de5e66"/><stop offset="0.796" stop-color="#c94149"/><stop offset="0.851" stop-color="#a81418"/><stop offset="0.853" stop-color="#9f0b0f"/><stop offset="1.000" stop-color="#960a0e"/></linearGradient><linearGradient id="g129" gradientUnits="userSpaceOnUse" x1="862.0" y1="373.5" x2="845.05" y2="540.52"><stop offset="0.018" stop-color="#7b0a0e"/><stop offset="0.430" stop-color="#830c10"/><stop offset="0.507" stop-color="#991a20"/><stop offset="0.540" stop-color="#b83840"/><stop offset="0.551" stop-color="#bc3c44"/><stop offset="0.588" stop-color="#b72f37"/><stop offset="0.667" stop-color="#c13b41"/><stop offset="0.728" stop-color="#dc5b63"/><stop offset="0.739" stop-color="#df5e66"/><stop offset="0.805" stop-color="#c33941"/><stop offset="0.847" stop-color="#a9161a"/><stop offset="0.849" stop-color="#9f0b0f"/><stop offset="0.982" stop-color="#970a0e"/></linearGradient><linearGradient id="g130" gradientUnits="userSpaceOnUse" x1="866.0" y1="374.7" x2="849.43" y2="540.73"><stop offset="0.018" stop-color="#7b0a0e"/><stop offset="0.428" stop-color="#820c10"/><stop offset="0.505" stop-color="#97181e"/><stop offset="0.538" stop-color="#b2333a"/><stop offset="0.549" stop-color="#b8383f"/><stop offset="0.587" stop-color="#b52e35"/><stop offset="0.670" stop-color="#c23c43"/><stop offset="0.736" stop-color="#df5e66"/><stop offset="0.792" stop-color="#c9424a"/><stop offset="0.845" stop-color="#a9161a"/><stop offset="0.847" stop-color="#a81418"/><stop offset="0.848" stop-color="#9f0b0f"/><stop offset="1.000" stop-color="#970a0e"/></linearGradient><linearGradient id="g131" gradientUnits="userSpaceOnUse" x1="870.0" y1="375.9" x2="854.08" y2="540.96"><stop offset="0.000" stop-color="#7b0a0e"/><stop offset="0.426" stop-color="#820c10"/><stop offset="0.503" stop-color="#95171c"/><stop offset="0.547" stop-color="#b3333b"/><stop offset="0.586" stop-color="#b32c34"/><stop offset="0.668" stop-color="#c13b42"/><stop offset="0.734" stop-color="#df5e66"/><stop offset="0.800" stop-color="#c43b42"/><stop offset="0.833" stop-color="#b01f24"/><stop offset="0.843" stop-color="#a9161a"/><stop offset="0.844" stop-color="#9f0b0f"/><stop offset="1.000" stop-color="#980a0e"/></linearGradient><linearGradient id="g132" gradientUnits="userSpaceOnUse" x1="874.0" y1="377.1" x2="858.63" y2="541.16"><stop offset="0.000" stop-color="#7b0a0e"/><stop offset="0.434" stop-color="#840d11"/><stop offset="0.501" stop-color="#93161b"/><stop offset="0.545" stop-color="#ae2f36"/><stop offset="0.584" stop-color="#b12b32"/><stop offset="0.667" stop-color="#c13a41"/><stop offset="0.732" stop-color="#de5e66"/><stop offset="0.776" stop-color="#cf4850"/><stop offset="0.809" stop-color="#bf343b"/><stop offset="0.842" stop-color="#a81418"/><stop offset="0.844" stop-color="#9f0b0f"/><stop offset="0.982" stop-color="#980a0e"/></linearGradient><linearGradient id="g133" gradientUnits="userSpaceOnUse" x1="878.0" y1="378.3" x2="863.26" y2="541.35"><stop offset="0.000" stop-color="#7b0a0e"/><stop offset="0.432" stop-color="#840d11"/><stop offset="0.509" stop-color="#95181d"/><stop offset="0.542" stop-color="#a82a31"/><stop offset="0.586" stop-color="#b02a31"/><stop offset="0.667" stop-color="#c13a41"/><stop offset="0.730" stop-color="#de5e66"/><stop offset="0.763" stop-color="#d44f57"/><stop offset="0.807" stop-color="#bf363c"/><stop offset="0.818" stop-color="#b92d33"/><stop offset="0.840" stop-color="#a81418"/><stop offset="0.842" stop-color="#9f0a0e"/><stop offset="1.000" stop-color="#990a0e"/></linearGradient><linearGradient id="g134" gradientUnits="userSpaceOnUse" x1="882.0" y1="379.6" x2="868.27" y2="541.58"><stop offset="0.006" stop-color="#7b0a0e"/><stop offset="0.430" stop-color="#840d11"/><stop offset="0.507" stop-color="#92161b"/><stop offset="0.540" stop-color="#a2252b"/><stop offset="0.584" stop-color="#ad282f"/><stop offset="0.617" stop-color="#b73037"/><stop offset="0.661" stop-color="#bf383f"/><stop offset="0.705" stop-color="#d34f57"/><stop offset="0.727" stop-color="#de5d65"/><stop offset="0.749" stop-color="#d9565e"/><stop offset="0.805" stop-color="#c0373e"/><stop offset="0.827" stop-color="#b12126"/><stop offset="0.836" stop-color="#a9161a"/><stop offset="0.838" stop-color="#9f0a0e"/><stop offset="1.000" stop-color="#990a0e"/></linearGradient><linearGradient id="g135" gradientUnits="userSpaceOnUse" x1="886.0" y1="380.8" x2="873.85" y2="541.87"><stop offset="0.002" stop-color="#7b0a0e"/><stop offset="0.438" stop-color="#850d12"/><stop offset="0.504" stop-color="#901419"/><stop offset="0.537" stop-color="#9d2025"/><stop offset="0.581" stop-color="#aa262c"/><stop offset="0.615" stop-color="#b62f36"/><stop offset="0.659" stop-color="#be373e"/><stop offset="0.692" stop-color="#cc474f"/><stop offset="0.725" stop-color="#dd5c64"/><stop offset="0.736" stop-color="#de5d65"/><stop offset="0.813" stop-color="#ba3036"/><stop offset="0.836" stop-color="#a81418"/><stop offset="0.837" stop-color="#a00a0e"/><stop offset="1.000" stop-color="#9a0a0e"/></linearGradient><linearGradient id="g136" gradientUnits="userSpaceOnUse" x1="890.0" y1="382.1" x2="879.04" y2="542.04"><stop offset="0.019" stop-color="#7b0a0e"/><stop offset="0.435" stop-color="#850d12"/><stop offset="0.512" stop-color="#91151a"/><stop offset="0.557" stop-color="#9d1e24"/><stop offset="0.601" stop-color="#b32d33"/><stop offset="0.656" stop-color="#bd353d"/><stop offset="0.690" stop-color="#cb464d"/><stop offset="0.723" stop-color="#dd5c64"/><stop offset="0.734" stop-color="#de5d65"/><stop offset="0.800" stop-color="#c23a40"/><stop offset="0.811" stop-color="#bb3137"/><stop offset="0.833" stop-color="#a81418"/><stop offset="0.835" stop-color="#a00a0e"/><stop offset="0.981" stop-color="#9b0a0e"/></linearGradient><linearGradient id="g137" gradientUnits="userSpaceOnUse" x1="894.0" y1="383.3" x2="884.26" y2="542.18"><stop offset="0.019" stop-color="#7b0a0e"/><stop offset="0.432" stop-color="#840d11"/><stop offset="0.521" stop-color="#901419"/><stop offset="0.556" stop-color="#9a1b20"/><stop offset="0.598" stop-color="#b22c32"/><stop offset="0.654" stop-color="#bc343c"/><stop offset="0.687" stop-color="#ca444c"/><stop offset="0.720" stop-color="#dc5b63"/><stop offset="0.731" stop-color="#df5e66"/><stop offset="0.778" stop-color="#cb444b"/><stop offset="0.809" stop-color="#bc3339"/><stop offset="0.831" stop-color="#a81418"/><stop offset="0.833" stop-color="#a00a0e"/><stop offset="1.000" stop-color="#9b0a0e"/></linearGradient><linearGradient id="g138" gradientUnits="userSpaceOnUse" x1="898.0" y1="384.6" x2="889.51" y2="542.28"><stop offset="0.019" stop-color="#7b0a0e"/><stop offset="0.440" stop-color="#850d12"/><stop offset="0.540" stop-color="#8e1217"/><stop offset="0.596" stop-color="#b12b31"/><stop offset="0.651" stop-color="#bb333b"/><stop offset="0.685" stop-color="#c9434b"/><stop offset="0.729" stop-color="#df5f67"/><stop offset="0.778" stop-color="#cb434b"/><stop offset="0.796" stop-color="#c33c43"/><stop offset="0.807" stop-color="#bd343a"/><stop offset="0.829" stop-color="#a81418"/><stop offset="0.831" stop-color="#a00a0e"/><stop offset="0.981" stop-color="#9c0a0e"/></linearGradient><linearGradient id="g139" gradientUnits="userSpaceOnUse" x1="902.0" y1="385.8" x2="895.02" y2="542.35"><stop offset="0.000" stop-color="#7b0a0e"/><stop offset="0.444" stop-color="#850d12"/><stop offset="0.537" stop-color="#8c1015"/><stop offset="0.593" stop-color="#b02a30"/><stop offset="0.649" stop-color="#ba333a"/><stop offset="0.682" stop-color="#c84149"/><stop offset="0.727" stop-color="#df5f67"/><stop offset="0.771" stop-color="#cd454d"/><stop offset="0.794" stop-color="#c33d43"/><stop offset="0.805" stop-color="#bd353b"/><stop offset="0.827" stop-color="#a81418"/><stop offset="0.829" stop-color="#a00a0e"/><stop offset="0.981" stop-color="#9c0a0e"/></linearGradient><linearGradient id="g140" gradientUnits="userSpaceOnUse" x1="906.0" y1="387.1" x2="900.21" y2="542.34"><stop offset="0.019" stop-color="#7c0a0e"/><stop offset="0.433" stop-color="#850d11"/><stop offset="0.534" stop-color="#8c1015"/><stop offset="0.568" stop-color="#9f1e24"/><stop offset="0.590" stop-color="#ae292f"/><stop offset="0.646" stop-color="#b9323a"/><stop offset="0.680" stop-color="#c84149"/><stop offset="0.725" stop-color="#df5f67"/><stop offset="0.769" stop-color="#cd454d"/><stop offset="0.792" stop-color="#c33d43"/><stop offset="0.803" stop-color="#bd353b"/><stop offset="0.825" stop-color="#a81519"/><stop offset="0.827" stop-color="#a00a0e"/><stop offset="1.000" stop-color="#9c0a0e"/></linearGradient><linearGradient id="g141" gradientUnits="userSpaceOnUse" x1="910.0" y1="388.3" x2="905.35" y2="542.28"><stop offset="0.000" stop-color="#7b0a0e"/><stop offset="0.430" stop-color="#850d11"/><stop offset="0.531" stop-color="#8b1015"/><stop offset="0.556" stop-color="#98191e"/><stop offset="0.587" stop-color="#ad282e"/><stop offset="0.643" stop-color="#b83139"/><stop offset="0.677" stop-color="#c74048"/><stop offset="0.722" stop-color="#df5f67"/><stop offset="0.779" stop-color="#c84148"/><stop offset="0.801" stop-color="#bd353b"/><stop offset="0.822" stop-color="#aa181c"/><stop offset="0.824" stop-color="#a00a0e"/><stop offset="1.000" stop-color="#9c0a0e"/></linearGradient><linearGradient id="g142" gradientUnits="userSpaceOnUse" x1="914.0" y1="389.6" x2="910.45" y2="542.18"><stop offset="0.000" stop-color="#7b0a0e"/><stop offset="0.448" stop-color="#860e12"/><stop offset="0.539" stop-color="#8e1217"/><stop offset="0.584" stop-color="#ab272d"/><stop offset="0.641" stop-color="#b73038"/><stop offset="0.675" stop-color="#c63f47"/><stop offset="0.720" stop-color="#df5f67"/><stop offset="0.777" stop-color="#c84148"/><stop offset="0.799" stop-color="#bd353b"/><stop offset="0.820" stop-color="#ab181c"/><stop offset="0.822" stop-color="#a10a0e"/><stop offset="1.000" stop-color="#9c0a0e"/></linearGradient><linearGradient id="g143" gradientUnits="userSpaceOnUse" x1="918.0" y1="390.9" x2="915.51" y2="542.03"><stop offset="0.020" stop-color="#7c0a0e"/><stop offset="0.433" stop-color="#850d12"/><stop offset="0.536" stop-color="#8e1116"/><stop offset="0.581" stop-color="#aa262c"/><stop offset="0.638" stop-color="#b63037"/><stop offset="0.672" stop-color="#c53e46"/><stop offset="0.718" stop-color="#df5f68"/><stop offset="0.797" stop-color="#bd353b"/><stop offset="0.820" stop-color="#a9161a"/><stop offset="0.822" stop-color="#a10a0e"/><stop offset="1.000" stop-color="#9c0a0e"/></linearGradient><linearGradient id="g144" gradientUnits="userSpaceOnUse" x1="922.0" y1="392.1" x2="920.48" y2="541.84"><stop offset="0.020" stop-color="#7c0a0e"/><stop offset="0.429" stop-color="#850d12"/><stop offset="0.532" stop-color="#8d1116"/><stop offset="0.578" stop-color="#a9252b"/><stop offset="0.635" stop-color="#b52f36"/><stop offset="0.670" stop-color="#c53e46"/><stop offset="0.715" stop-color="#df5f68"/><stop offset="0.796" stop-color="#bd353b"/><stop offset="0.817" stop-color="#ab191d"/><stop offset="0.819" stop-color="#a10a0e"/><stop offset="1.000" stop-color="#9d0a0e"/></linearGradient><linearGradient id="g145" gradientUnits="userSpaceOnUse" x1="926.0" y1="393.4" x2="925.36" y2="541.59"><stop offset="0.020" stop-color="#7c0a0e"/><stop offset="0.425" stop-color="#850d12"/><stop offset="0.529" stop-color="#8c1116"/><stop offset="0.575" stop-color="#a8242a"/><stop offset="0.632" stop-color="#b42e36"/><stop offset="0.667" stop-color="#c43d45"/><stop offset="0.713" stop-color="#df5f67"/><stop offset="0.794" stop-color="#bd353b"/><stop offset="0.817" stop-color="#a9171b"/><stop offset="0.819" stop-color="#a10a0e"/><stop offset="1.000" stop-color="#9d0a0e"/></linearGradient><linearGradient id="g146" gradientUnits="userSpaceOnUse" x1="930.0" y1="394.7" x2="930.11" y2="541.30"><stop offset="0.000" stop-color="#7c0a0e"/><stop offset="0.421" stop-color="#850d12"/><stop offset="0.525" stop-color="#8c1015"/><stop offset="0.583" stop-color="#aa262c"/><stop offset="0.630" stop-color="#b32d35"/><stop offset="0.667" stop-color="#c53e46"/><stop offset="0.711" stop-color="#df5f67"/><stop offset="0.792" stop-color="#bd353b"/><stop offset="0.814" stop-color="#ab1a1e"/><stop offset="0.816" stop-color="#a10a0e"/><stop offset="1.000" stop-color="#9d0a0e"/></linearGradient><linearGradient id="g147" gradientUnits="userSpaceOnUse" x1="934.0" y1="396.0" x2="934.71" y2="540.97"><stop offset="0.000" stop-color="#7c0a0e"/><stop offset="0.416" stop-color="#850d12"/><stop offset="0.521" stop-color="#8c1015"/><stop offset="0.580" stop-color="#a9262b"/><stop offset="0.627" stop-color="#b22d34"/><stop offset="0.667" stop-color="#c63f47"/><stop offset="0.709" stop-color="#df5e67"/><stop offset="0.791" stop-color="#bd353b"/><stop offset="0.814" stop-color="#aa171c"/><stop offset="0.816" stop-color="#a20a0e"/><stop offset="1.000" stop-color="#9d0a0e"/></linearGradient><linearGradient id="g148" gradientUnits="userSpaceOnUse" x1="938.0" y1="397.3" x2="939.14" y2="540.60"><stop offset="0.000" stop-color="#7c0a0e"/><stop offset="0.423" stop-color="#860d12"/><stop offset="0.518" stop-color="#8b1015"/><stop offset="0.577" stop-color="#a8252b"/><stop offset="0.624" stop-color="#b12c33"/><stop offset="0.667" stop-color="#c74048"/><stop offset="0.707" stop-color="#de5e66"/><stop offset="0.730" stop-color="#d7535c"/><stop offset="0.789" stop-color="#bd353b"/><stop offset="0.811" stop-color="#ac1a1f"/><stop offset="0.813" stop-color="#a20a0e"/><stop offset="1.000" stop-color="#9d0a0e"/></linearGradient><linearGradient id="g149" gradientUnits="userSpaceOnUse" x1="942.0" y1="398.6" x2="943.35" y2="540.21"><stop offset="0.000" stop-color="#7c0a0e"/><stop offset="0.418" stop-color="#860d12"/><stop offset="0.514" stop-color="#8b1015"/><stop offset="0.573" stop-color="#a7242a"/><stop offset="0.621" stop-color="#b02b32"/><stop offset="0.667" stop-color="#c84149"/><stop offset="0.704" stop-color="#de5e66"/><stop offset="0.716" stop-color="#dc5b63"/><stop offset="0.764" stop-color="#c84148"/><stop offset="0.788" stop-color="#bd353b"/><stop offset="0.812" stop-color="#aa181d"/><stop offset="0.814" stop-color="#a20a0e"/><stop offset="1.000" stop-color="#9d0a0e"/></linearGradient><linearGradient id="g150" gradientUnits="userSpaceOnUse" x1="946.0" y1="399.9" x2="947.33" y2="539.78"><stop offset="0.021" stop-color="#7d0b0f"/><stop offset="0.426" stop-color="#860e12"/><stop offset="0.510" stop-color="#8b1015"/><stop offset="0.570" stop-color="#a62429"/><stop offset="0.618" stop-color="#af2a31"/><stop offset="0.654" stop-color="#c13941"/><stop offset="0.702" stop-color="#de5d66"/><stop offset="0.714" stop-color="#dc5b63"/><stop offset="0.762" stop-color="#c84148"/><stop offset="0.786" stop-color="#bd353b"/><stop offset="0.808" stop-color="#ac1b20"/><stop offset="0.810" stop-color="#a20b0f"/><stop offset="0.979" stop-color="#9d0b0f"/></linearGradient><linearGradient id="g151" gradientUnits="userSpaceOnUse" x1="950.0" y1="401.2" x2="951.03" y2="539.33"><stop offset="0.000" stop-color="#7c0b0f"/><stop offset="0.421" stop-color="#860e12"/><stop offset="0.506" stop-color="#8b1015"/><stop offset="0.567" stop-color="#a52329"/><stop offset="0.615" stop-color="#ad2a30"/><stop offset="0.651" stop-color="#c03941"/><stop offset="0.700" stop-color="#dd5d65"/><stop offset="0.712" stop-color="#dd5b64"/><stop offset="0.785" stop-color="#bd353b"/><stop offset="0.809" stop-color="#ab191e"/><stop offset="0.811" stop-color="#a20b0f"/><stop offset="1.000" stop-color="#9d0b0f"/></linearGradient><linearGradient id="g152" gradientUnits="userSpaceOnUse" x1="954.0" y1="402.6" x2="954.38" y2="538.83"><stop offset="0.022" stop-color="#7d0b0f"/><stop offset="0.416" stop-color="#860e12"/><stop offset="0.502" stop-color="#8b1015"/><stop offset="0.563" stop-color="#a42228"/><stop offset="0.612" stop-color="#ac2930"/><stop offset="0.649" stop-color="#bf3840"/><stop offset="0.698" stop-color="#dd5c65"/><stop offset="0.710" stop-color="#dd5b64"/><stop offset="0.784" stop-color="#bd343b"/><stop offset="0.808" stop-color="#ab191e"/><stop offset="0.810" stop-color="#a20b0f"/><stop offset="1.000" stop-color="#9d0b0f"/></linearGradient><linearGradient id="g153" gradientUnits="userSpaceOnUse" x1="958.0" y1="403.9" x2="957.23" y2="538.28"><stop offset="0.022" stop-color="#7d0b0f"/><stop offset="0.412" stop-color="#860e12"/><stop offset="0.511" stop-color="#8e1217"/><stop offset="0.560" stop-color="#a32227"/><stop offset="0.609" stop-color="#ab282f"/><stop offset="0.646" stop-color="#be373f"/><stop offset="0.696" stop-color="#dd5c65"/><stop offset="0.708" stop-color="#dd5c64"/><stop offset="0.782" stop-color="#bd343b"/><stop offset="0.807" stop-color="#ab1a1f"/><stop offset="0.809" stop-color="#a30b0f"/><stop offset="0.978" stop-color="#9d0b0f"/></linearGradient><linearGradient id="g154" gradientUnits="userSpaceOnUse" x1="962.0" y1="405.3" x2="960.11" y2="537.68"><stop offset="0.000" stop-color="#7d0b0f"/><stop offset="0.407" stop-color="#860e12"/><stop offset="0.507" stop-color="#8d1217"/><stop offset="0.557" stop-color="#a22126"/><stop offset="0.607" stop-color="#aa272e"/><stop offset="0.644" stop-color="#be363e"/><stop offset="0.694" stop-color="#dc5b64"/><stop offset="0.707" stop-color="#dd5c65"/><stop offset="0.781" stop-color="#bd343b"/><stop offset="0.806" stop-color="#ac1a1f"/><stop offset="0.809" stop-color="#a30b0f"/><stop offset="1.000" stop-color="#9d0b0f"/></linearGradient><linearGradient id="g155" gradientUnits="userSpaceOnUse" x1="966.0" y1="406.6" x2="963.72" y2="537.04"><stop offset="0.023" stop-color="#7d0b0f"/><stop offset="0.428" stop-color="#870e13"/><stop offset="0.504" stop-color="#8c1116"/><stop offset="0.556" stop-color="#a12026"/><stop offset="0.604" stop-color="#a8262d"/><stop offset="0.642" stop-color="#bd353d"/><stop offset="0.692" stop-color="#dc5b64"/><stop offset="0.705" stop-color="#de5c65"/><stop offset="0.780" stop-color="#bd343b"/><stop offset="0.805" stop-color="#ac1b20"/><stop offset="0.808" stop-color="#a30b0f"/><stop offset="1.000" stop-color="#9e0b0f"/></linearGradient><linearGradient id="g156" gradientUnits="userSpaceOnUse" x1="970.0" y1="408.0" x2="967.68" y2="536.39"><stop offset="0.023" stop-color="#7d0b0f"/><stop offset="0.424" stop-color="#870e13"/><stop offset="0.500" stop-color="#8c1116"/><stop offset="0.564" stop-color="#a12126"/><stop offset="0.602" stop-color="#a7252b"/><stop offset="0.640" stop-color="#bc343c"/><stop offset="0.690" stop-color="#db5a63"/><stop offset="0.703" stop-color="#de5d66"/><stop offset="0.779" stop-color="#bd343b"/><stop offset="0.802" stop-color="#ae1d22"/><stop offset="0.805" stop-color="#a30b0f"/><stop offset="0.977" stop-color="#9e0b0f"/></linearGradient><linearGradient id="g157" gradientUnits="userSpaceOnUse" x1="974.0" y1="409.4" x2="971.76" y2="535.70"><stop offset="0.000" stop-color="#7d0b0f"/><stop offset="0.420" stop-color="#870e13"/><stop offset="0.496" stop-color="#8b1015"/><stop offset="0.561" stop-color="#a02025"/><stop offset="0.599" stop-color="#a5242a"/><stop offset="0.638" stop-color="#bb343b"/><stop offset="0.689" stop-color="#db5962"/><stop offset="0.702" stop-color="#de5d66"/><stop offset="0.778" stop-color="#bd343b"/><stop offset="0.804" stop-color="#ac1b20"/><stop offset="0.807" stop-color="#a30b0f"/><stop offset="0.976" stop-color="#9e0b0f"/></linearGradient><linearGradient id="g158" gradientUnits="userSpaceOnUse" x1="978.0" y1="410.8" x2="976.05" y2="534.97"><stop offset="0.000" stop-color="#7d0b0f"/><stop offset="0.415" stop-color="#870e12"/><stop offset="0.493" stop-color="#8b1015"/><stop offset="0.558" stop-color="#9f1f25"/><stop offset="0.596" stop-color="#a42429"/><stop offset="0.648" stop-color="#c23b43"/><stop offset="0.687" stop-color="#da5962"/><stop offset="0.700" stop-color="#de5e67"/><stop offset="0.778" stop-color="#bd343b"/><stop offset="0.801" stop-color="#ae1e23"/><stop offset="0.804" stop-color="#a40b0f"/><stop offset="1.000" stop-color="#9e0b0f"/></linearGradient><linearGradient id="g159" gradientUnits="userSpaceOnUse" x1="982.0" y1="412.2" x2="980.67" y2="534.20"><stop offset="0.000" stop-color="#7d0b0f"/><stop offset="0.444" stop-color="#880f13"/><stop offset="0.502" stop-color="#8e1217"/><stop offset="0.556" stop-color="#9e1f24"/><stop offset="0.594" stop-color="#a22328"/><stop offset="0.646" stop-color="#c13a42"/><stop offset="0.686" stop-color="#d95861"/><stop offset="0.699" stop-color="#df5e67"/><stop offset="0.778" stop-color="#bd343a"/><stop offset="0.801" stop-color="#ae1e24"/><stop offset="0.803" stop-color="#a40b0f"/><stop offset="0.975" stop-color="#9e0b0f"/></linearGradient><linearGradient id="g160" gradientUnits="userSpaceOnUse" x1="986.0" y1="413.6" x2="985.82" y2="533.38"><stop offset="0.000" stop-color="#7d0b0f"/><stop offset="0.441" stop-color="#880f13"/><stop offset="0.499" stop-color="#8d1217"/><stop offset="0.578" stop-color="#a02126"/><stop offset="0.591" stop-color="#a12227"/><stop offset="0.644" stop-color="#c03840"/><stop offset="0.697" stop-color="#df5f68"/><stop offset="0.778" stop-color="#bd333a"/><stop offset="0.803" stop-color="#ad1d22"/><stop offset="0.806" stop-color="#a40b0f"/><stop offset="1.000" stop-color="#9e0b0f"/></linearGradient><linearGradient id="g161" gradientUnits="userSpaceOnUse" x1="990.0" y1="415.0" x2="991.48" y2="532.48"><stop offset="0.000" stop-color="#7d0b0f"/><stop offset="0.441" stop-color="#880f13"/><stop offset="0.495" stop-color="#8c1116"/><stop offset="0.562" stop-color="#9d1e24"/><stop offset="0.589" stop-color="#a02127"/><stop offset="0.642" stop-color="#bf373f"/><stop offset="0.696" stop-color="#df5f68"/><stop offset="0.778" stop-color="#bd3339"/><stop offset="0.803" stop-color="#ad1d22"/><stop offset="0.806" stop-color="#a40b0f"/><stop offset="1.000" stop-color="#9e0b0f"/></linearGradient><linearGradient id="g162" gradientUnits="userSpaceOnUse" x1="994.0" y1="416.4" x2="997.51" y2="531.47"><stop offset="0.000" stop-color="#7d0b0f"/><stop offset="0.437" stop-color="#880f13"/><stop offset="0.504" stop-color="#8f1419"/><stop offset="0.558" stop-color="#9c1e23"/><stop offset="0.599" stop-color="#a4242a"/><stop offset="0.640" stop-color="#be363e"/><stop offset="0.694" stop-color="#df5f68"/><stop offset="0.778" stop-color="#bc3339"/><stop offset="0.803" stop-color="#ad1d23"/><stop offset="0.806" stop-color="#a40b0f"/><stop offset="0.974" stop-color="#9e0b0f"/></linearGradient><linearGradient id="g163" gradientUnits="userSpaceOnUse" x1="998.0" y1="417.7" x2="1003.27" y2="530.38"><stop offset="0.027" stop-color="#7e0b0f"/><stop offset="0.435" stop-color="#880f13"/><stop offset="0.500" stop-color="#8f1318"/><stop offset="0.569" stop-color="#9c1e23"/><stop offset="0.596" stop-color="#a32329"/><stop offset="0.638" stop-color="#bd353d"/><stop offset="0.693" stop-color="#df5e68"/><stop offset="0.778" stop-color="#bc3339"/><stop offset="0.803" stop-color="#ae1e23"/><stop offset="0.806" stop-color="#a50b0f"/><stop offset="0.973" stop-color="#9e0b0f"/></linearGradient><linearGradient id="g164" gradientUnits="userSpaceOnUse" x1="1002.0" y1="419.1" x2="1009.65" y2="529.11"><stop offset="0.027" stop-color="#7e0b0f"/><stop offset="0.425" stop-color="#880f13"/><stop offset="0.495" stop-color="#8e1318"/><stop offset="0.565" stop-color="#9b1e23"/><stop offset="0.593" stop-color="#a22228"/><stop offset="0.635" stop-color="#bc343c"/><stop offset="0.691" stop-color="#df5e68"/><stop offset="0.778" stop-color="#bc3239"/><stop offset="0.804" stop-color="#ae1e24"/><stop offset="0.806" stop-color="#a50b0f"/><stop offset="1.000" stop-color="#9e0b0f"/></linearGradient><linearGradient id="g165" gradientUnits="userSpaceOnUse" x1="1006.0" y1="420.5" x2="1016.14" y2="527.64"><stop offset="0.028" stop-color="#7f0b0f"/><stop offset="0.418" stop-color="#880f13"/><stop offset="0.489" stop-color="#8d1217"/><stop offset="0.589" stop-color="#a02227"/><stop offset="0.632" stop-color="#bb333b"/><stop offset="0.689" stop-color="#de5e67"/><stop offset="0.775" stop-color="#be343b"/><stop offset="0.804" stop-color="#ae1f24"/><stop offset="0.807" stop-color="#a50b0f"/><stop offset="1.000" stop-color="#9e0b0f"/></linearGradient><linearGradient id="g166" gradientUnits="userSpaceOnUse" x1="1010.0" y1="421.9" x2="1022.09" y2="526.10"><stop offset="0.000" stop-color="#7e0b0f"/><stop offset="0.410" stop-color="#880f13"/><stop offset="0.483" stop-color="#8d1217"/><stop offset="0.585" stop-color="#9f2126"/><stop offset="0.629" stop-color="#ba333b"/><stop offset="0.687" stop-color="#de5e67"/><stop offset="0.775" stop-color="#be343b"/><stop offset="0.801" stop-color="#b02127"/><stop offset="0.804" stop-color="#a50b0f"/><stop offset="0.972" stop-color="#9f0b0f"/></linearGradient><linearGradient id="g167" gradientUnits="userSpaceOnUse" x1="1014.0" y1="423.3" x2="1027.45" y2="524.52"><stop offset="0.000" stop-color="#7f0b0f"/><stop offset="0.401" stop-color="#880f13"/><stop offset="0.475" stop-color="#8c1217"/><stop offset="0.580" stop-color="#9e2025"/><stop offset="0.624" stop-color="#b9323a"/><stop offset="0.684" stop-color="#de5e67"/><stop offset="0.714" stop-color="#d5525a"/><stop offset="0.778" stop-color="#bb3137"/><stop offset="0.803" stop-color="#af1f25"/><stop offset="0.806" stop-color="#a50b0f"/><stop offset="0.971" stop-color="#9f0b0f"/></linearGradient><linearGradient id="g168" gradientUnits="userSpaceOnUse" x1="1018.0" y1="424.9" x2="1032.21" y2="522.94"><stop offset="0.030" stop-color="#7f0b0f"/><stop offset="0.436" stop-color="#8a1014"/><stop offset="0.573" stop-color="#9c1f24"/><stop offset="0.619" stop-color="#b93139"/><stop offset="0.680" stop-color="#de5d67"/><stop offset="0.711" stop-color="#d6525b"/><stop offset="0.799" stop-color="#b02228"/><stop offset="0.802" stop-color="#af2026"/><stop offset="0.805" stop-color="#a50b0f"/><stop offset="1.000" stop-color="#9f0b0f"/></linearGradient><linearGradient id="g169" gradientUnits="userSpaceOnUse" x1="1022.0" y1="426.7" x2="1036.33" y2="521.38"><stop offset="0.031" stop-color="#800b0f"/><stop offset="0.444" stop-color="#8a1015"/><stop offset="0.566" stop-color="#9a1e23"/><stop offset="0.613" stop-color="#b83038"/><stop offset="0.676" stop-color="#dd5d66"/><stop offset="0.707" stop-color="#d6525b"/><stop offset="0.798" stop-color="#b02228"/><stop offset="0.801" stop-color="#a60b0f"/><stop offset="1.000" stop-color="#9f0b0f"/></linearGradient><linearGradient id="g170" gradientUnits="userSpaceOnUse" x1="1026.0" y1="428.6" x2="1039.62" y2="519.91"><stop offset="0.032" stop-color="#800b0f"/><stop offset="0.428" stop-color="#8a1015"/><stop offset="0.557" stop-color="#981d21"/><stop offset="0.606" stop-color="#b62f37"/><stop offset="0.670" stop-color="#dd5c66"/><stop offset="0.687" stop-color="#dc5b64"/><stop offset="0.800" stop-color="#af2126"/><stop offset="0.803" stop-color="#a60b0f"/><stop offset="1.000" stop-color="#9f0b0f"/></linearGradient><linearGradient id="g171" gradientUnits="userSpaceOnUse" x1="1030.0" y1="430.7" x2="1042.06" y2="518.53"><stop offset="0.034" stop-color="#810b0f"/><stop offset="0.431" stop-color="#8a1015"/><stop offset="0.548" stop-color="#961b20"/><stop offset="0.598" stop-color="#b52e36"/><stop offset="0.667" stop-color="#dd5c66"/><stop offset="0.682" stop-color="#dc5b65"/><stop offset="0.799" stop-color="#af2127"/><stop offset="0.802" stop-color="#a60c10"/><stop offset="0.967" stop-color="#9f0c10"/></linearGradient><linearGradient id="g172" gradientUnits="userSpaceOnUse" x1="1034.0" y1="432.9" x2="1045.86" y2="516.61"><stop offset="0.000" stop-color="#800b0f"/><stop offset="0.416" stop-color="#8a1015"/><stop offset="0.537" stop-color="#951b1f"/><stop offset="0.607" stop-color="#bd363e"/><stop offset="0.667" stop-color="#e06069"/><stop offset="0.797" stop-color="#b02127"/><stop offset="0.801" stop-color="#a60c10"/><stop offset="1.000" stop-color="#9f0c10"/></linearGradient><linearGradient id="g173" gradientUnits="userSpaceOnUse" x1="1038.0" y1="435.4" x2="1050.41" y2="514.30"><stop offset="0.037" stop-color="#810b0f"/><stop offset="0.414" stop-color="#8b1116"/><stop offset="0.522" stop-color="#941a1e"/><stop offset="0.576" stop-color="#b02b32"/><stop offset="0.612" stop-color="#c54048"/><stop offset="0.648" stop-color="#da5862"/><stop offset="0.667" stop-color="#dd5d66"/><stop offset="0.789" stop-color="#b1242a"/><stop offset="0.792" stop-color="#a60c10"/><stop offset="1.000" stop-color="#9f0c10"/></linearGradient><linearGradient id="g174" gradientUnits="userSpaceOnUse" x1="1042.0" y1="438.0" x2="1054.39" y2="511.98"><stop offset="0.000" stop-color="#810b0f"/><stop offset="0.408" stop-color="#8b1116"/><stop offset="0.521" stop-color="#971c20"/><stop offset="0.577" stop-color="#b83038"/><stop offset="0.633" stop-color="#d85660"/><stop offset="0.652" stop-color="#df5e68"/><stop offset="0.783" stop-color="#b02228"/><stop offset="0.787" stop-color="#a70c10"/><stop offset="1.000" stop-color="#9f0c10"/></linearGradient><linearGradient id="g175" gradientUnits="userSpaceOnUse" x1="1046.0" y1="440.8" x2="1056.74" y2="509.99"><stop offset="0.000" stop-color="#820c10"/><stop offset="0.361" stop-color="#8a1015"/><stop offset="0.499" stop-color="#941a1e"/><stop offset="0.558" stop-color="#b52e36"/><stop offset="0.637" stop-color="#e0606a"/><stop offset="0.771" stop-color="#b2242a"/><stop offset="0.775" stop-color="#a70c10"/><stop offset="1.000" stop-color="#9f0c10"/></linearGradient><linearGradient id="g176" gradientUnits="userSpaceOnUse" x1="1050.0" y1="443.8" x2="1058.80" y2="507.64"><stop offset="0.014" stop-color="#820c10"/><stop offset="0.384" stop-color="#8c1217"/><stop offset="0.478" stop-color="#93191d"/><stop offset="0.541" stop-color="#b22c34"/><stop offset="0.625" stop-color="#df5e68"/><stop offset="0.688" stop-color="#cd474f"/><stop offset="0.768" stop-color="#b2242a"/><stop offset="0.773" stop-color="#a70c10"/><stop offset="0.954" stop-color="#a00c10"/></linearGradient><linearGradient id="g177" gradientUnits="userSpaceOnUse" x1="1054.0" y1="447.0" x2="1062.10" y2="504.33"><stop offset="0.019" stop-color="#830c10"/><stop offset="0.376" stop-color="#8d1318"/><stop offset="0.478" stop-color="#971c20"/><stop offset="0.547" stop-color="#bb333b"/><stop offset="0.616" stop-color="#dd5c66"/><stop offset="0.639" stop-color="#db5a63"/><stop offset="0.771" stop-color="#b2242a"/><stop offset="0.777" stop-color="#a70c10"/><stop offset="0.949" stop-color="#a00c10"/></linearGradient><linearGradient id="g178" gradientUnits="userSpaceOnUse" x1="1058.0" y1="450.4" x2="1066.10" y2="500.27"><stop offset="0.015" stop-color="#840c10"/><stop offset="0.351" stop-color="#8d1318"/><stop offset="0.451" stop-color="#941a1e"/><stop offset="0.528" stop-color="#b72f37"/><stop offset="0.604" stop-color="#da5963"/><stop offset="0.630" stop-color="#dc5b65"/><stop offset="0.778" stop-color="#b2242a"/><stop offset="0.784" stop-color="#a70c10"/><stop offset="1.000" stop-color="#a00c10"/></linearGradient><linearGradient id="g179" gradientUnits="userSpaceOnUse" x1="1062.0" y1="454.3" x2="1070.85" y2="494.87"><stop offset="0.020" stop-color="#850d11"/><stop offset="0.317" stop-color="#8d1318"/><stop offset="0.436" stop-color="#971c20"/><stop offset="0.525" stop-color="#be373f"/><stop offset="0.588" stop-color="#d7555f"/><stop offset="0.615" stop-color="#df5e68"/><stop offset="0.786" stop-color="#b2242b"/><stop offset="0.793" stop-color="#a80c10"/><stop offset="0.929" stop-color="#a00c10"/><stop offset="1.000" stop-color="#a00c10"/></linearGradient><linearGradient id="g180" gradientUnits="userSpaceOnUse" x1="1066.0" y1="459.6" x2="1079.29" y2="483.23"><stop offset="0.017" stop-color="#870e13"/><stop offset="0.237" stop-color="#8e1419"/><stop offset="0.333" stop-color="#941a1e"/><stop offset="0.420" stop-color="#b72f37"/><stop offset="0.493" stop-color="#d4525b"/><stop offset="0.530" stop-color="#de5e68"/><stop offset="0.713" stop-color="#b02228"/><stop offset="0.723" stop-color="#a70c10"/><stop offset="1.000" stop-color="#a00c10"/></linearGradient><linearGradient id="g181" gradientUnits="userSpaceOnUse" x1="1069.5" y1="467.6" x2="1074.63" y2="471.52"><stop offset="0.085" stop-color="#dd5d67"/><stop offset="0.116" stop-color="#df5e68"/><stop offset="0.603" stop-color="#b02228"/><stop offset="0.631" stop-color="#a60c10"/><stop offset="0.718" stop-color="#a00c10"/><stop offset="0.889" stop-color="#a00c10"/></linearGradient></defs><path d="M132.5,247.0H141.5V308.0H132.5Z" fill="url(#g0)"/><path d="M140.5,243.2H149.5V313.2H140.5Z" fill="url(#g1)"/><path d="M148.5,239.6H157.5V318.7H148.5Z" fill="url(#g2)"/><path d="M156.5,236.4H165.5V323.8H156.5Z" fill="url(#g3)"/><path d="M164.5,232.1H173.5V328.4H164.5Z" fill="url(#g4)"/><path d="M172.5,228.4H181.5V332.7H172.5Z" fill="url(#g5)"/><path d="M180.5,226.6H189.5V337.4H180.5Z" fill="url(#g6)"/><path d="M188.5,225.5H197.5V342.3H188.5Z" fill="url(#g7)"/><path d="M196.5,225.0H205.5V347.2H196.5Z" fill="url(#g8)"/><path d="M204.5,224.7H213.5V352.0H204.5Z" fill="url(#g9)"/><path d="M212.5,224.9H221.5V356.7H212.5Z" fill="url(#g10)"/><path d="M220.5,225.6H229.5V361.4H220.5Z" fill="url(#g11)"/><path d="M228.5,226.5H237.5V366.0H228.5Z" fill="url(#g12)"/><path d="M236.5,227.3H245.5V370.6H236.5Z" fill="url(#g13)"/><path d="M244.5,228.1H253.5V375.1H244.5Z" fill="url(#g14)"/><path d="M252.5,228.9H261.5V379.5H252.5Z" fill="url(#g15)"/><path d="M260.5,229.8H269.5V383.9H260.5Z" fill="url(#g16)"/><path d="M268.5,230.8H277.5V388.2H268.5Z" fill="url(#g17)"/><path d="M276.5,231.7H285.5V392.4H276.5Z" fill="url(#g18)"/><path d="M284.5,232.7H293.5V396.6H284.5Z" fill="url(#g19)"/><path d="M292.5,233.8H301.5V400.7H292.5Z" fill="url(#g20)"/><path d="M300.5,234.9H309.5V404.7H300.5Z" fill="url(#g21)"/><path d="M308.5,236.0H317.5V408.7H308.5Z" fill="url(#g22)"/><path d="M316.5,237.2H325.5V412.6H316.5Z" fill="url(#g23)"/><path d="M324.5,238.4H333.5V416.4H324.5Z" fill="url(#g24)"/><path d="M332.5,239.7H341.5V420.2H332.5Z" fill="url(#g25)"/><path d="M340.5,241.0H349.5V423.9H340.5Z" fill="url(#g26)"/><path d="M348.5,242.3H357.5V427.5H348.5Z" fill="url(#g27)"/><path d="M356.5,243.7H365.5V431.0H356.5Z" fill="url(#g28)"/><path d="M364.5,245.0H373.5V434.5H364.5Z" fill="url(#g29)"/><path d="M372.5,246.5H381.5V438.0H372.5Z" fill="url(#g30)"/><path d="M380.5,247.9H389.5V441.3H380.5Z" fill="url(#g31)"/><path d="M388.5,249.4H397.5V444.6H388.5Z" fill="url(#g32)"/><path d="M396.5,250.8H405.5V447.8H396.5Z" fill="url(#g33)"/><path d="M404.5,252.4H413.5V451.0H404.5Z" fill="url(#g34)"/><path d="M412.5,253.9H421.5V454.1H412.5Z" fill="url(#g35)"/><path d="M420.5,255.5H429.5V457.1H420.5Z" fill="url(#g36)"/><path d="M428.5,257.1H437.5V460.1H428.5Z" fill="url(#g37)"/><path d="M436.5,258.7H445.5V463.0H436.5Z" fill="url(#g38)"/><path d="M444.5,260.3H453.5V465.8H444.5Z" fill="url(#g39)"/><path d="M452.5,262.0H461.5V468.7H452.5Z" fill="url(#g40)"/><path d="M460.5,263.7H469.5V471.4H460.5Z" fill="url(#g41)"/><path d="M468.5,265.4H477.5V474.1H468.5Z" fill="url(#g42)"/><path d="M476.5,267.1H485.5V476.7H476.5Z" fill="url(#g43)"/><path d="M484.5,268.9H493.5V479.3H484.5Z" fill="url(#g44)"/><path d="M492.5,270.6H501.5V481.8H492.5Z" fill="url(#g45)"/><path d="M500.5,272.4H509.5V484.3H500.5Z" fill="url(#g46)"/><path d="M508.5,274.2H517.5V486.7H508.5Z" fill="url(#g47)"/><path d="M516.5,276.0H525.5V489.1H516.5Z" fill="url(#g48)"/><path d="M524.5,277.8H533.5V491.4H524.5Z" fill="url(#g49)"/><path d="M532.5,279.7H541.5V493.7H532.5Z" fill="url(#g50)"/><path d="M540.5,281.6H549.5V495.9H540.5Z" fill="url(#g51)"/><path d="M548.5,283.4H557.5V498.1H548.5Z" fill="url(#g52)"/><path d="M556.5,284.7H560.5V499.6H556.5Z" fill="url(#g53)"/><path d="M559.5,285.5H564.5V500.5H559.5Z" fill="url(#g54)"/><path d="M563.5,286.5H568.5V501.6H563.5Z" fill="url(#g55)"/><path d="M567.5,287.4H572.5V502.6H567.5Z" fill="url(#g56)"/><path d="M571.5,288.4H576.5V503.6H571.5Z" fill="url(#g57)"/><path d="M575.5,289.3H580.5V504.6H575.5Z" fill="url(#g58)"/><path d="M579.5,290.3H584.5V505.6H579.5Z" fill="url(#g59)"/><path d="M583.5,291.3H588.5V506.6H583.5Z" fill="url(#g60)"/><path d="M587.5,292.2H592.5V507.6H587.5Z" fill="url(#g61)"/><path d="M591.5,293.2H596.5V508.6H591.5Z" fill="url(#g62)"/><path d="M595.5,294.2H600.5V509.5H595.5Z" fill="url(#g63)"/><path d="M599.5,295.2H604.5V510.5H599.5Z" fill="url(#g64)"/><path d="M603.5,296.2H608.5V511.4H603.5Z" fill="url(#g65)"/><path d="M607.5,297.2H612.5V512.4H607.5Z" fill="url(#g66)"/><path d="M611.5,298.1H616.5V513.3H611.5Z" fill="url(#g67)"/><path d="M615.5,299.1H620.5V514.2H615.5Z" fill="url(#g68)"/><path d="M619.5,300.1H624.5V515.1H619.5Z" fill="url(#g69)"/><path d="M623.5,301.1H628.5V516.0H623.5Z" fill="url(#g70)"/><path d="M627.5,302.1H632.5V516.9H627.5Z" fill="url(#g71)"/><path d="M631.5,303.1H636.5V517.8H631.5Z" fill="url(#g72)"/><path d="M635.5,304.1H640.5V518.7H635.5Z" fill="url(#g73)"/><path d="M639.5,305.1H644.5V519.5H639.5Z" fill="url(#g74)"/><path d="M643.5,306.1H648.5V520.4H643.5Z" fill="url(#g75)"/><path d="M647.5,307.1H652.5V521.2H647.5Z" fill="url(#g76)"/><path d="M651.5,308.2H656.5V522.1H651.5Z" fill="url(#g77)"/><path d="M655.5,309.2H660.5V522.9H655.5Z" fill="url(#g78)"/><path d="M659.5,310.2H664.5V523.7H659.5Z" fill="url(#g79)"/><path d="M663.5,311.2H668.5V524.5H663.5Z" fill="url(#g80)"/><path d="M667.5,312.3H672.5V525.3H667.5Z" fill="url(#g81)"/><path d="M671.5,313.3H676.5V526.1H671.5Z" fill="url(#g82)"/><path d="M675.5,314.4H680.5V526.9H675.5Z" fill="url(#g83)"/><path d="M679.5,315.4H684.5V527.7H679.5Z" fill="url(#g84)"/><path d="M683.5,316.5H688.5V528.4H683.5Z" fill="url(#g85)"/><path d="M687.5,317.5H692.5V529.2H687.5Z" fill="url(#g86)"/><path d="M691.5,318.5H696.5V529.9H691.5Z" fill="url(#g87)"/><path d="M695.5,319.6H700.5V530.7H695.5Z" fill="url(#g88)"/><path d="M699.5,320.6H704.5V531.4H699.5Z" fill="url(#g89)"/><path d="M703.5,321.7H708.5V532.1H703.5Z" fill="url(#g90)"/><path d="M707.5,322.7H712.5V532.8H707.5Z" fill="url(#g91)"/><path d="M711.5,323.8H716.5V533.5H711.5Z" fill="url(#g92)"/><path d="M715.5,324.9H720.5V534.2H715.5Z" fill="url(#g93)"/><path d="M719.5,325.9H724.5V534.8H719.5Z" fill="url(#g94)"/><path d="M723.5,327.0H728.5V535.5H723.5Z" fill="url(#g95)"/><path d="M727.5,328.1H732.5V536.1H727.5Z" fill="url(#g96)"/><path d="M731.5,329.2H736.5V536.8H731.5Z" fill="url(#g97)"/><path d="M735.5,330.2H740.5V537.4H735.5Z" fill="url(#g98)"/><path d="M739.5,331.3H744.5V538.0H739.5Z" fill="url(#g99)"/><path d="M743.5,332.4H748.5V538.6H743.5Z" fill="url(#g100)"/><path d="M747.5,333.5H752.5V539.2H747.5Z" fill="url(#g101)"/><path d="M751.5,334.6H756.5V539.8H751.5Z" fill="url(#g102)"/><path d="M755.5,335.7H760.5V540.4H755.5Z" fill="url(#g103)"/><path d="M759.5,336.8H764.5V540.9H759.5Z" fill="url(#g104)"/><path d="M763.5,337.9H768.5V541.5H763.5Z" fill="url(#g105)"/><path d="M767.5,339.0H772.5V542.0H767.5Z" fill="url(#g106)"/><path d="M771.5,340.1H776.5V542.5H771.5Z" fill="url(#g107)"/><path d="M775.5,341.2H780.5V543.0H775.5Z" fill="url(#g108)"/><path d="M779.5,342.4H784.5V543.5H779.5Z" fill="url(#g109)"/><path d="M783.5,343.5H788.5V544.0H783.5Z" fill="url(#g110)"/><path d="M787.5,344.6H792.5V544.5H787.5Z" fill="url(#g111)"/><path d="M791.5,345.7H796.5V545.0H791.5Z" fill="url(#g112)"/><path d="M795.5,346.9H800.5V545.4H795.5Z" fill="url(#g113)"/><path d="M799.5,348.0H804.5V545.9H799.5Z" fill="url(#g114)"/><path d="M803.5,349.2H808.5V546.3H803.5Z" fill="url(#g115)"/><path d="M807.5,350.3H812.5V546.7H807.5Z" fill="url(#g116)"/><path d="M811.5,351.4H816.5V547.1H811.5Z" fill="url(#g117)"/><path d="M815.5,352.6H820.5V547.4H815.5Z" fill="url(#g118)"/><path d="M819.5,353.8H824.5V547.8H819.5Z" fill="url(#g119)"/><path d="M823.5,354.9H828.5V548.1H823.5Z" fill="url(#g120)"/><path d="M827.5,356.1H832.5V548.4H827.5Z" fill="url(#g121)"/><path d="M831.5,357.2H836.5V548.7H831.5Z" fill="url(#g122)"/><path d="M835.5,358.4H840.5V549.0H835.5Z" fill="url(#g123)"/><path d="M839.5,359.6H844.5V549.2H839.5Z" fill="url(#g124)"/><path d="M843.5,360.8H848.5V549.5H843.5Z" fill="url(#g125)"/><path d="M847.5,361.9H852.5V549.7H847.5Z" fill="url(#g126)"/><path d="M851.5,363.1H856.5V549.9H851.5Z" fill="url(#g127)"/><path d="M855.5,364.3H860.5V550.1H855.5Z" fill="url(#g128)"/><path d="M859.5,365.5H864.5V550.2H859.5Z" fill="url(#g129)"/><path d="M863.5,366.7H868.5V550.4H863.5Z" fill="url(#g130)"/><path d="M867.5,367.9H872.5V550.5H867.5Z" fill="url(#g131)"/><path d="M871.5,369.1H876.5V550.6H871.5Z" fill="url(#g132)"/><path d="M875.5,370.3H880.5V550.7H875.5Z" fill="url(#g133)"/><path d="M879.5,371.6H884.5V550.7H879.5Z" fill="url(#g134)"/><path d="M883.5,372.8H888.5V550.8H883.5Z" fill="url(#g135)"/><path d="M887.5,374.1H892.5V550.8H887.5Z" fill="url(#g136)"/><path d="M891.5,375.3H896.5V550.8H891.5Z" fill="url(#g137)"/><path d="M895.5,376.6H900.5V550.7H895.5Z" fill="url(#g138)"/><path d="M899.5,377.8H904.5V550.7H899.5Z" fill="url(#g139)"/><path d="M903.5,379.1H908.5V550.6H903.5Z" fill="url(#g140)"/><path d="M907.5,380.3H912.5V550.4H907.5Z" fill="url(#g141)"/><path d="M911.5,381.6H916.5V550.3H911.5Z" fill="url(#g142)"/><path d="M915.5,382.9H920.5V550.1H915.5Z" fill="url(#g143)"/><path d="M919.5,384.1H924.5V549.9H919.5Z" fill="url(#g144)"/><path d="M923.5,385.4H928.5V549.6H923.5Z" fill="url(#g145)"/><path d="M927.5,386.7H932.5V549.3H927.5Z" fill="url(#g146)"/><path d="M931.5,388.0H936.5V549.0H931.5Z" fill="url(#g147)"/><path d="M935.5,389.3H940.5V548.6H935.5Z" fill="url(#g148)"/><path d="M939.5,390.6H944.5V548.2H939.5Z" fill="url(#g149)"/><path d="M943.5,391.9H948.5V547.8H943.5Z" fill="url(#g150)"/><path d="M947.5,393.2H952.5V547.3H947.5Z" fill="url(#g151)"/><path d="M951.5,394.6H956.5V546.8H951.5Z" fill="url(#g152)"/><path d="M955.5,395.9H960.5V546.3H955.5Z" fill="url(#g153)"/><path d="M959.5,397.3H964.5V545.7H959.5Z" fill="url(#g154)"/><path d="M963.5,398.6H968.5V545.1H963.5Z" fill="url(#g155)"/><path d="M967.5,400.0H972.5V544.4H967.5Z" fill="url(#g156)"/><path d="M971.5,401.4H976.5V543.7H971.5Z" fill="url(#g157)"/><path d="M975.5,402.8H980.5V543.0H975.5Z" fill="url(#g158)"/><path d="M979.5,404.2H984.5V542.2H979.5Z" fill="url(#g159)"/><path d="M983.5,405.6H988.5V541.4H983.5Z" fill="url(#g160)"/><path d="M987.5,407.0H992.5V540.5H987.5Z" fill="url(#g161)"/><path d="M991.5,408.4H996.5V539.6H991.5Z" fill="url(#g162)"/><path d="M995.5,409.7H1000.5V538.6H995.5Z" fill="url(#g163)"/><path d="M999.5,411.1H1004.5V537.6H999.5Z" fill="url(#g164)"/><path d="M1003.5,412.5H1008.5V536.6H1003.5Z" fill="url(#g165)"/><path d="M1007.5,413.9H1012.5V535.5H1007.5Z" fill="url(#g166)"/><path d="M1011.5,415.3H1016.5V534.3H1011.5Z" fill="url(#g167)"/><path d="M1015.5,416.9H1020.5V533.0H1015.5Z" fill="url(#g168)"/><path d="M1019.5,418.7H1024.5V531.6H1019.5Z" fill="url(#g169)"/><path d="M1023.5,420.6H1028.5V529.9H1023.5Z" fill="url(#g170)"/><path d="M1027.5,422.7H1032.5V528.2H1027.5Z" fill="url(#g171)"/><path d="M1031.5,424.9H1036.5V526.3H1031.5Z" fill="url(#g172)"/><path d="M1035.5,427.4H1040.5V524.3H1035.5Z" fill="url(#g173)"/><path d="M1039.5,430.0H1044.5V522.1H1039.5Z" fill="url(#g174)"/><path d="M1043.5,432.8H1048.5V519.7H1043.5Z" fill="url(#g175)"/><path d="M1047.5,435.8H1052.5V516.8H1047.5Z" fill="url(#g176)"/><path d="M1051.5,439.0H1056.5V513.5H1051.5Z" fill="url(#g177)"/><path d="M1055.5,442.4H1060.5V509.6H1055.5Z" fill="url(#g178)"/><path d="M1059.5,446.3H1064.5V504.8H1059.5Z" fill="url(#g179)"/><path d="M1063.5,451.6H1068.5V498.7H1063.5Z" fill="url(#g180)"/><path d="M1067.5,459.6H1071.5V486.2H1067.5Z" fill="url(#g181)"/></g><path d="M690.0,518.2 C685.0,517.2 670.0,514.3 660.0,512.3 C650.0,510.2 640.0,508.1 630.0,505.9 C620.0,503.7 610.0,501.4 600.0,499.0 C590.0,496.6 580.0,494.2 570.0,491.6 C560.0,489.0 550.0,486.3 540.0,483.5 C530.0,480.7 520.0,477.8 510.0,474.8 C500.0,471.8 490.0,468.7 480.0,465.4 C470.0,462.1 460.0,458.7 450.0,455.2 C440.0,451.7 430.0,448.0 420.0,444.2 C410.0,440.4 400.0,436.5 390.0,432.4 C380.0,428.3 370.0,424.0 360.0,419.6 C350.0,415.2 340.0,410.6 330.0,405.9 C320.0,401.2 310.0,396.2 300.0,391.2 C290.0,386.1 280.0,381.0 270.0,375.6 C260.0,370.2 250.0,364.7 240.0,359.0 C230.0,353.3 220.0,347.5 210.0,341.6 C200.0,335.7 187.9,328.0 180.0,323.4 C172.1,318.8 168.8,317.5 162.7,313.8 C156.6,310.1 148.0,304.6 143.4,301.0 C138.8,297.4 136.7,297.4 134.9,292.5 C133.1,287.6 132.8,275.1 132.4,271.6" stroke="#ff0000" stroke-width="1.1" fill="none"/><path d="M132.4,271.6 C132.8,270.0 132.8,264.7 134.8,261.8 C136.8,258.9 140.1,256.9 144.6,254.4 C149.1,251.9 155.9,249.7 161.8,247.0 C167.7,244.3 172.2,240.4 180.2,238.5 C188.2,236.6 200.0,235.8 210.0,235.7 C220.0,235.6 230.0,237.2 240.0,238.2 C250.0,239.1 260.0,240.2 270.0,241.4 C280.0,242.6 290.0,243.8 300.0,245.2 C310.0,246.6 320.0,248.0 330.0,249.6 C340.0,251.2 350.0,252.8 360.0,254.5 C370.0,256.2 380.0,258.0 390.0,259.8 C400.0,261.6 410.0,263.6 420.0,265.5 C430.0,267.4 440.0,269.4 450.0,271.5 C460.0,273.6 470.0,275.7 480.0,277.9 C490.0,280.1 500.0,282.2 510.0,284.5 C520.0,286.8 530.0,289.1 540.0,291.4 C550.0,293.7 560.0,296.0 570.0,298.4 C580.0,300.8 590.0,303.2 600.0,305.7 C610.0,308.1 620.0,310.6 630.0,313.1 C640.0,315.6 650.0,318.1 660.0,320.7 C670.0,323.3 680.0,325.9 690.0,328.5 C700.0,331.1 710.0,333.7 720.0,336.4 C730.0,339.1 740.0,341.8 750.0,344.5 C760.0,347.2 770.0,350.0 780.0,352.8 C790.0,355.6 800.0,358.4 810.0,361.3 C820.0,364.2 830.0,367.1 840.0,370.0 C850.0,372.9 860.0,375.9 870.0,378.9 C880.0,381.9 895.0,386.6 900.0,388.2" stroke="#ff0000" stroke-width="1.9" fill="none"/><path d="M870.0,378.9 C875.0,380.4 890.0,385.1 900.0,388.2 C910.0,391.3 920.0,394.5 930.0,397.7 C940.0,400.9 950.0,404.2 960.0,407.6 C970.0,411.0 980.0,414.5 990.0,418.0 C1000.0,421.5 1011.3,425.0 1020.0,428.8 C1028.7,432.6 1034.9,436.1 1042.0,441.0 C1049.1,445.9 1058.0,452.9 1062.7,458.0 C1067.4,463.1 1068.8,469.4 1070.0,471.7" stroke="#ff0000" stroke-width="1.2" fill="none"/><path d="M1064.0,460.0 C1064.8,461.2 1067.6,464.7 1068.5,467.0 C1069.4,469.3 1069.8,471.3 1069.5,474.0 C1069.2,476.7 1068.2,479.7 1067.0,483.0 C1065.8,486.3 1062.8,492.2 1062.0,494.0" stroke="#ff0000" stroke-width="3.2" fill="none"/><path d="M141.0,258.5 C141.5,258.1 142.7,255.0 144.2,255.8 C145.7,256.6 147.8,261.2 149.9,263.4 C152.0,265.6 153.0,266.2 156.5,269.1 C160.0,272.0 166.1,277.3 170.8,280.5 C175.6,283.7 179.0,285.4 185.0,288.5 C191.0,291.6 196.7,294.1 207.0,299.0 C217.3,303.9 232.3,311.5 247.0,317.8 C261.7,324.1 281.2,331.7 295.0,336.7 C308.8,341.7 312.5,342.2 330.0,348.0 C347.5,353.8 375.9,363.5 400.0,371.2 C424.1,378.9 454.5,388.2 474.7,394.3 C494.9,400.4 503.1,403.0 521.0,408.0 C538.9,413.0 563.8,420.5 582.0,424.3 C600.2,428.1 616.3,429.5 630.0,431.0 C643.7,432.5 652.3,433.4 664.0,433.5 C675.7,433.6 689.0,432.8 700.0,431.4 C711.0,430.0 720.9,428.0 730.0,425.0 C739.1,422.0 746.9,418.8 754.5,413.6 C762.1,408.4 770.8,399.4 775.7,394.0 C780.6,388.6 783.2,384.4 784.0,380.9 C784.8,377.3 782.8,375.7 780.6,372.7 C778.4,369.7 775.7,366.4 770.8,363.0 C765.9,359.6 757.5,355.3 751.0,352.3 C744.5,349.3 740.1,347.6 731.6,345.0 C723.1,342.4 715.3,341.5 700.0,337.0 C684.7,332.5 650.0,321.2 640.0,318.0" stroke="#ff0000" stroke-width="1.7" fill="none"/><path d="M132.6,271.5 C132.8,271.2 131.3,269.0 133.7,270.0 C136.1,271.0 142.4,274.8 147.0,277.7 C151.6,280.6 155.0,283.7 161.3,287.2 C167.6,290.7 172.3,292.3 185.0,298.6 C197.7,304.9 218.4,316.5 237.6,325.2 C256.8,333.9 272.9,341.1 300.0,350.8 C327.1,360.5 372.0,374.7 400.0,383.5 C428.0,392.3 441.3,396.3 468.0,403.8 C494.7,411.3 538.0,422.6 560.0,428.3 C582.0,434.0 570.0,431.4 600.0,438.0 C630.0,444.6 693.5,460.0 740.0,468.0 C786.5,476.0 842.0,482.7 879.0,486.0 C916.0,489.3 941.8,487.7 962.0,488.0 C982.2,488.3 988.7,488.6 1000.0,488.0 C1011.3,487.4 1022.4,485.3 1029.9,484.3 C1037.4,483.3 1038.9,483.0 1044.9,482.0 C1050.9,481.0 1061.8,480.0 1065.8,478.3 C1069.8,476.6 1068.5,473.1 1069.0,472.0" stroke="#ff0000" stroke-width="1.0" fill="none"/><path d="M243.8,359.5 C249.8,362.1 264.0,368.7 280.0,375.0 C296.0,381.3 323.3,391.1 340.0,397.5 C356.7,403.9 361.0,407.0 380.0,413.7 C399.0,420.4 431.1,430.3 454.0,437.8 C476.9,445.3 497.0,452.8 517.4,458.9 C537.8,465.0 559.1,470.4 576.2,474.6 C593.3,478.9 599.4,480.1 620.0,484.4 C640.6,488.7 680.0,496.8 700.0,500.6 C720.0,504.4 723.3,504.8 740.0,507.0 C756.7,509.2 781.5,512.1 800.0,513.7 C818.5,515.3 828.6,516.8 851.0,516.8 C873.4,516.8 909.8,515.4 934.6,514.0 C959.4,512.6 984.1,510.2 1000.0,508.2 C1015.9,506.2 1022.4,504.2 1029.9,502.2 C1037.4,500.2 1039.4,498.7 1044.9,496.2 C1050.4,493.7 1059.0,491.0 1062.8,487.3 C1066.6,483.6 1067.1,476.2 1068.0,474.0" stroke="#ff0000" stroke-width="1.3" fill="none"/><path d="M147.0,257.0 C148.4,256.0 151.0,251.6 155.7,251.0 C160.4,250.4 169.3,252.6 175.0,253.5 C180.7,254.4 184.0,255.0 190.0,256.5 C196.0,258.0 195.9,258.3 210.9,262.5 C225.9,266.7 256.5,274.9 280.0,281.8 C303.5,288.7 318.4,294.1 351.7,303.6 C385.0,313.1 445.3,329.5 480.0,339.0 C514.7,348.5 533.3,353.4 560.0,360.4 C586.7,367.4 615.8,375.0 640.0,380.9 C664.2,386.8 683.6,392.2 705.4,395.6 C727.2,399.0 748.2,397.8 770.6,401.4 C793.0,405.0 817.3,411.7 840.0,417.0 C862.7,422.3 877.1,426.7 906.8,433.4 C936.5,440.1 991.1,451.0 1018.0,457.0 C1044.9,463.0 1059.7,467.4 1068.0,469.5" stroke="#ff0000" stroke-width="1.8" fill="none"/><path d="M147.0,256.5 C149.2,255.4 152.8,252.2 160.0,250.0 C167.2,247.8 170.3,241.8 190.0,243.0 C209.7,244.2 244.7,250.3 278.0,257.0 C311.3,263.7 356.3,275.0 390.0,283.0 C423.7,291.0 455.0,298.8 480.0,305.0 C505.0,311.2 513.3,312.9 540.0,320.0 C566.7,327.1 615.2,340.6 640.0,347.4 C664.8,354.2 673.7,356.8 689.0,361.0 C704.3,365.2 717.4,368.0 731.6,372.7 C745.8,377.4 766.9,386.3 774.0,389.0" stroke="#ff0000" stroke-width="1.0" fill="none"/><path d="M145.0,258.0 C152.5,260.9 167.5,266.7 190.0,275.6 C212.5,284.5 246.7,299.8 280.0,311.5 C313.3,323.2 356.7,335.6 390.0,345.8 C423.3,356.1 455.0,365.2 480.0,373.0 C505.0,380.8 513.3,385.7 540.0,392.5 C566.7,399.3 613.3,409.2 640.0,413.6 C666.7,418.0 683.3,418.3 700.0,419.0 C716.7,419.7 731.0,419.0 740.0,418.0 C749.0,417.0 751.7,413.8 754.0,413.0" stroke="#ff0000" stroke-width="1.0" fill="none"/><path d="M150.0,252.0 C158.3,249.9 181.7,241.0 200.0,239.6 C218.3,238.3 238.3,241.6 260.0,243.9 C281.7,246.1 303.3,249.0 330.0,253.2 C356.7,257.4 388.3,262.9 420.0,269.1 C451.7,275.3 486.7,282.9 520.0,290.4 C553.3,297.9 590.0,306.8 620.0,314.2 C650.0,321.6 686.7,331.3 700.0,334.7" stroke="#ff0000" stroke-width="1.2" fill="none"/><path d="M171.8,281.2 C174.2,280.0 179.8,277.2 186.1,274.0 C192.3,270.8 201.7,266.3 209.3,262.0 C216.9,257.8 225.6,252.1 231.8,248.4 C238.1,244.7 244.3,241.3 246.8,239.9" stroke="#ff0000" stroke-width="1.0" fill="none"/><path d="M206.2,298.6 C208.7,296.9 214.5,292.8 221.0,288.4 C227.5,284.0 237.3,277.5 245.2,272.0 C253.1,266.4 262.1,259.8 268.6,255.1 C275.1,250.5 281.6,246.0 284.2,244.1" stroke="#ff0000" stroke-width="1.0" fill="none"/><path d="M247.0,317.8 C250.4,316.0 258.5,311.9 267.5,307.0 C276.5,302.0 290.0,294.5 301.0,288.2 C312.0,281.9 324.4,275.0 333.4,269.4 C342.4,263.8 351.4,257.1 355.0,254.7" stroke="#ff0000" stroke-width="1.0" fill="none"/><path d="M294.0,336.3 C297.5,334.1 305.9,328.6 315.3,323.1 C324.6,317.6 338.6,310.1 350.0,303.1 C361.4,296.2 374.3,288.0 383.6,281.5 C392.9,274.9 402.3,266.7 406.0,263.8" stroke="#ff0000" stroke-width="1.0" fill="none"/><path d="M351.0,355.0 C354.7,352.6 363.6,346.6 373.4,340.8 C383.3,334.9 398.0,327.2 410.0,319.9 C422.0,312.5 435.6,303.7 445.4,296.4 C455.2,289.2 465.1,279.8 469.0,276.5" stroke="#ff0000" stroke-width="1.0" fill="none"/><path d="M411.0,374.7 C414.9,372.1 424.0,365.5 434.2,359.1 C444.3,352.8 459.6,344.7 472.0,336.8 C484.4,329.0 498.4,319.6 508.6,312.0 C518.8,304.3 528.9,294.3 533.0,290.8" stroke="#ff0000" stroke-width="1.0" fill="none"/><path d="M474.0,394.1 C478.0,391.6 487.4,385.6 497.9,379.0 C508.4,372.4 524.2,362.6 537.0,354.3 C549.8,346.1 564.3,337.4 574.8,329.4 C585.3,321.5 595.8,310.5 600.0,306.7" stroke="#ff0000" stroke-width="1.0" fill="none"/><path d="M521.0,408.0 C524.7,405.6 533.6,400.4 543.4,393.4 C553.3,386.3 568.0,374.4 580.0,365.6 C592.0,356.8 605.6,348.8 615.4,340.6 C625.2,332.4 635.1,320.4 639.0,316.4" stroke="#ff0000" stroke-width="1.0" fill="none"/><path d="M584.0,424.7 C587.4,421.7 595.3,414.3 604.1,406.9 C613.0,399.4 626.2,388.8 637.0,380.2 C647.8,371.6 660.0,363.8 668.8,355.4 C677.6,346.9 686.5,333.8 690.0,329.5" stroke="#ff0000" stroke-width="1.0" fill="none"/><path d="M662.0,433.5 C665.2,430.9 672.7,424.3 681.0,418.1 C689.3,412.0 701.8,403.5 712.0,396.5 C722.2,389.5 733.7,384.3 742.0,376.4 C750.3,368.4 758.7,353.4 762.0,348.8" stroke="#ff0000" stroke-width="1.0" fill="none"/><path d="M172.8,281.8 C171.6,283.1 167.9,286.2 165.8,289.5 C163.7,292.9 160.6,297.9 160.0,301.9 C159.4,305.9 161.7,311.6 162.0,313.5" stroke="#ff0000" stroke-width="1.0" fill="none"/><path d="M206.2,298.6 C205.0,299.8 201.6,302.5 199.2,305.9 C196.8,309.4 192.9,315.2 192.0,319.6 C191.1,323.9 193.7,329.9 194.0,332.0" stroke="#ff0000" stroke-width="1.0" fill="none"/><path d="M247.0,317.8 C245.8,319.2 242.3,322.4 240.0,326.3 C237.7,330.2 233.8,336.3 233.0,341.3 C232.2,346.3 234.7,353.7 235.0,356.2" stroke="#ff0000" stroke-width="1.0" fill="none"/><path d="M294.0,336.3 C292.8,337.9 289.0,339.4 287.0,346.0 C285.0,352.7 282.5,370.0 282.0,376.2 C281.5,382.3 283.7,381.9 284.0,383.0" stroke="#ff0000" stroke-width="1.0" fill="none"/><path d="M351.0,355.0 C349.8,356.8 346.5,358.8 344.0,365.6 C341.5,372.5 336.8,389.0 335.8,396.3 C334.8,403.6 337.5,407.3 337.8,409.5" stroke="#ff0000" stroke-width="1.0" fill="none"/><path d="M411.0,374.7 C409.8,376.4 406.3,377.2 404.0,384.8 C401.7,392.3 397.8,411.2 397.0,419.8 C396.2,428.3 398.7,433.2 399.0,435.9" stroke="#ff0000" stroke-width="1.0" fill="none"/><path d="M474.0,394.1 C472.8,395.7 469.2,395.8 467.0,403.5 C464.8,411.2 461.7,431.1 461.0,440.5 C460.3,449.8 462.7,456.4 463.0,459.6" stroke="#ff0000" stroke-width="1.0" fill="none"/><path d="M521.0,408.0 C519.8,409.4 516.1,408.2 514.0,416.2 C511.9,424.3 509.1,446.7 508.5,456.5 C507.9,466.2 510.2,471.7 510.5,474.8" stroke="#ff0000" stroke-width="1.0" fill="none"/><path d="M584.0,424.7 C582.8,426.1 579.2,424.7 577.0,432.8 C574.8,440.9 571.7,463.7 571.0,473.6 C570.3,483.4 572.7,489.0 573.0,492.1" stroke="#ff0000" stroke-width="1.0" fill="none"/><path d="M662.0,433.5 C660.8,436.3 658.8,441.3 655.0,450.5 C651.2,459.7 641.3,479.0 639.0,488.6 C636.7,498.1 640.7,504.8 641.0,508.0" stroke="#ff0000" stroke-width="1.0" fill="none"/><path d="M847.0,373.6 C840.8,379.4 821.3,396.6 809.5,408.4 C797.7,420.2 784.1,434.6 776.0,444.5 C767.9,454.4 764.9,457.8 761.0,468.0 C757.1,478.2 754.2,495.7 752.5,505.7 C750.8,515.7 751.2,524.3 751.0,528.0" stroke="#ff0000" stroke-width="1.0" fill="none"/><path d="M886.0,384.8 C880.2,390.6 861.4,408.1 851.0,419.5 C840.6,430.9 830.3,443.2 823.4,452.9 C816.5,462.6 813.2,469.1 809.5,477.9 C805.8,486.7 802.1,496.0 801.0,505.7 C799.9,515.4 802.3,531.0 802.6,536.0" stroke="#ff0000" stroke-width="1.0" fill="none"/><path d="M947.0,402.8 C942.6,408.4 928.8,426.5 920.7,436.2 C912.6,445.9 903.8,453.3 898.5,461.2 C893.2,469.1 891.5,474.6 888.7,483.4 C885.9,492.2 883.2,504.6 881.8,514.0 C880.4,523.4 880.6,535.7 880.4,540.0" stroke="#ff0000" stroke-width="1.0" fill="none"/><path d="M1000.0,422.3 C996.5,427.4 985.3,443.6 979.0,452.9 C972.7,462.2 966.8,469.1 962.4,477.9 C958.0,486.7 954.8,496.5 952.7,505.7 C950.6,514.9 950.5,528.5 950.0,533.0" stroke="#ff0000" stroke-width="1.0" fill="none"/><path d="M1038.9,440.4 C1036.4,444.8 1028.2,458.2 1023.6,466.8 C1019.0,475.4 1014.3,482.8 1011.0,491.8 C1007.7,500.8 1005.2,516.1 1004.0,521.0" stroke="#ff0000" stroke-width="1.0" fill="none"/><path d="M1061.0,457.0 C1059.4,460.0 1054.4,467.8 1051.4,475.0 C1048.4,482.2 1044.9,494.5 1043.0,500.0 C1041.1,505.5 1040.5,506.7 1040.0,508.0" stroke="#ff0000" stroke-width="1.0" fill="none"/><path d="M1068.0,469.5 C1067.1,473.7 1063.4,490.4 1062.5,494.6" stroke="#ff0000" stroke-width="1.0" fill="none"/><path d="M785.4,359.8 C781.7,365.1 772.4,381.0 763.4,391.6 C754.4,402.2 741.4,413.2 731.6,423.4 C721.8,433.6 710.6,442.6 704.7,452.8 C698.8,463.0 697.3,473.1 696.0,484.6 C694.7,496.1 696.8,515.8 697.0,522.0" stroke="#ff0000" stroke-width="0.8" fill="none"/><path d="M793.5,360.9 C788.9,367.0 775.6,386.1 765.6,397.5 C755.7,408.9 743.1,419.3 733.8,429.3 C724.5,439.2 715.2,447.4 709.8,457.2 C704.5,467.0 702.8,477.4 701.5,488.3 C700.3,499.1 702.4,516.6 702.6,522.3" stroke="#ff0000" stroke-width="0.8" fill="none"/><path d="M802.1,362.1 C796.4,369.0 779.0,391.5 768.0,403.8 C757.0,416.0 745.0,425.9 736.2,435.6 C727.4,445.2 720.1,452.5 715.3,461.9 C710.5,471.3 708.6,482.0 707.5,492.2 C706.4,502.3 708.4,517.5 708.6,522.6" stroke="#ff0000" stroke-width="0.8" fill="none"/><path d="M806.5,362.7 C800.2,370.1 780.7,394.2 769.2,406.9 C757.7,419.6 745.9,429.1 737.4,438.7 C728.8,448.3 722.5,455.0 718.0,464.3 C713.5,473.5 711.5,484.4 710.4,494.1 C709.4,503.9 711.4,518.0 711.6,522.8" stroke="#ff0000" stroke-width="0.8" fill="none"/><path d="M809.7,363.1 C803.1,370.8 782.0,396.3 770.1,409.2 C758.2,422.2 746.6,431.6 738.3,441.0 C729.9,450.5 724.4,456.9 720.1,466.0 C715.8,475.1 713.7,486.1 712.7,495.6 C711.6,505.1 713.6,518.3 713.8,522.9" stroke="#ff0000" stroke-width="0.8" fill="none"/><path d="M812.4,363.5 C805.5,371.4 783.0,397.9 770.8,411.2 C758.6,424.4 747.2,433.6 739.0,443.0 C730.8,452.4 725.9,458.5 721.8,467.5 C717.7,476.5 715.5,487.6 714.5,496.8 C713.5,506.1 715.5,518.6 715.7,523.0" stroke="#ff0000" stroke-width="0.8" fill="none"/><path d="M678.8,516.0 C678.8,513.8 678.3,512.9 678.8,503.0 C679.2,493.1 678.8,468.1 681.5,456.8 C684.2,445.5 689.6,440.5 695.0,435.0 C700.4,429.5 706.8,426.7 714.0,424.0 C721.2,421.3 734.0,419.8 738.0,419.0" stroke="#ff0000" stroke-width="0.9" fill="none"/><path d="M770.6,403.0 C782.2,405.7 817.3,413.6 840.0,419.0 C862.7,424.4 877.1,428.7 906.8,435.4 C936.5,442.1 991.1,453.2 1018.0,459.0 C1044.9,464.8 1059.7,468.2 1068.0,470.0" stroke="#ff0000" stroke-width="1.0" fill="none"/><path d="M136.9,262.5 C137.9,261.8 140.5,259.5 142.9,258.1 C145.2,256.6 147.5,255.5 150.9,254.0 C154.2,252.5 158.2,251.2 162.9,249.1 C167.5,246.9 173.2,243.0 178.9,241.2 C184.5,239.4 189.8,238.9 196.8,238.4 C203.8,237.9 211.8,237.7 220.8,238.2 C229.8,238.6 239.1,239.9 250.8,241.2 C262.5,242.5 284.1,245.1 290.8,245.9" stroke="#ff0000" stroke-width="0.8" fill="none"/><path d="M137.8,264.7 C138.8,264.0 141.4,261.6 143.7,260.2 C146.1,258.8 148.4,257.6 151.7,256.1 C155.0,254.6 159.0,253.2 163.6,251.0 C168.3,248.8 173.9,244.8 179.6,243.0 C185.2,241.1 190.5,240.5 197.5,239.9 C204.4,239.4 212.4,239.1 221.3,239.5 C230.3,239.9 239.6,241.0 251.2,242.2 C262.8,243.4 284.5,246.1 291.2,246.9" stroke="#ff0000" stroke-width="0.8" fill="none"/><path d="M138.6,266.9 C139.6,266.2 142.3,263.8 144.6,262.3 C146.9,260.9 149.2,259.7 152.5,258.1 C155.8,256.6 159.8,255.1 164.4,252.9 C169.0,250.7 174.6,246.6 180.3,244.7 C185.9,242.8 191.2,242.2 198.1,241.5 C205.0,240.9 213.0,240.5 221.9,240.8 C230.8,241.1 240.0,242.0 251.6,243.2 C263.2,244.4 284.9,247.1 291.6,247.9" stroke="#ff0000" stroke-width="0.8" fill="none"/></g><rect x="66" y="137" width="91" height="17" fill="#859eeb"/><text x="73.5" y="150.2" font-family="Liberation Sans" font-weight="700" font-size="11.5" fill="#1e2230">Perspective</text><path d="M146.5,139 V154" stroke="#111" stroke-width="1.2"/><path d="M149,144.5 H155.5 L152.25,148.5 Z" fill="#111"/><path d="M102.4,641 V615 M102.4,641 L116.6,628 M102.4,641 L128,648.5" stroke="#5d6168" stroke-width="1.2" fill="none"/><g font-family="Liberation Sans" font-size="12" fill="#5d6168"><text x="104.2" y="615.5">z</text><text x="119.5" y="627">y</text><text x="130.8" y="649.5">x</text></g></svg><span class="t" style="left:1184.2px;top:141px;font-size:11.5px;color:#1e1e1e">Calq...</span><svg class="r" style="left:1176px;top:150px" width="47" height="160"><defs><radialGradient id="pb" cx="0.35" cy="0.35" r="0.7"><stop offset="0" stop-color="#b8ccff"/><stop offset="1" stop-color="#1a2aa0"/></radialGradient></defs><circle cx="15.5" cy="17" r="5.5" fill="url(#pb)" stroke="#111" stroke-width="0.7"/><path d="M16,11 L19,9" stroke="#222" stroke-width="1"/><path d="M27,21 L37,11 L40,14 L30,24 Z" fill="#fff" stroke="#333" stroke-width="0.8"/><path d="M34,14 L37,11 L40,14 L37,17 Z" fill="#e85020"/><path d="M10.5,36 H15 L16,37.5 H21 V45.5 H10.5 Z" fill="#f2c63a" stroke="#7a5a00" stroke-width="0.8"/><rect x="25.5" y="33" width="14" height="13" fill="#2a54d0" stroke="#333" stroke-width="0.8"/><rect x="26" y="33.5" width="13" height="2.5" fill="#9ab0f0"/><text x="32.5" y="44.5" text-anchor="middle" font-family="Liberation Sans" font-weight="700" font-size="9" fill="#fff">?</text><circle cx="15.5" cy="63" r="5.5" fill="none" stroke="#e020a0" stroke-width="2.6"/><path d="M15.5,57.5 A5.5,5.5 0 0 1 21,63" stroke="#20c040" stroke-width="2.6" fill="none"/><path d="M10,63 A5.5,5.5 0 0 0 15.5,68.5" stroke="#2060ff" stroke-width="2.6" fill="none"/><path d="M21.4,50.5 V72.5" stroke="#b8c4da" stroke-width="1"/><path d="M24,55 L35,62 L30,63 L34,70 L31,71 L27,64 L24,67 Z" fill="#f05a28" stroke="#222" stroke-width="0.6"/><circle cx="38" cy="64" r="5.5" fill="none" stroke="#bbb" stroke-width="2" stroke-dasharray="2 1.4"/><circle cx="38" cy="64" r="2" fill="none" stroke="#bbb" stroke-width="1"/></svg><div class="r" style="left:1181px;top:222px;width:41px;height:465px;border:1px solid #c2cbe0;border-right:none;box-sizing:border-box;background:#fff"></div><div class="r" style="left:1182px;top:223px;width:38px;height:33px;background:#eaebf0;border-bottom:1px solid #c2cbe0"></div><div class="r" style="left:1182px;top:670px;width:38px;height:16px;background:#efefef"></div><div class="r" style="left:1182px;top:299px;width:38px;height:1px;background:#e6e6e6"></div><svg class="r" style="left:1190px;top:231px" width="32" height="20"><path d="M2.5,1.5 H9.5 L13.5,5.5 V17.5 H2.5 Z" fill="#f4f4f4" stroke="#222" stroke-width="1"/><path d="M23,4 H30 V14 H23 Z M26,7 H32 V17 H26 Z" fill="#bdbdbd" stroke="#999" stroke-width="0.8"/></svg><span class="t" style="left:1187.7px;top:263.3px;font-size:11.5px;color:#1e1e1e">Calqu</span><span class="t" style="left:1190.7px;top:285.3px;font-size:11.5px;font-weight:700;color:#1e1e1e">IGES</span><svg class="r" style="left:64px;top:669px" width="80" height="22"><path d="M2.5 0 L2.5 8 L11 19.5 L75.5 19.5 L75.5 0" fill="#eaebf0" stroke="#b8c4da" stroke-width="1"/></svg><span class="t" style="left:75.2px;top:674.27px;font-size:11.5px;font-weight:400;color:#1e1e1e;">Perspective</span><span class="t" style="left:150.4px;top:674.27px;font-size:11.5px;font-weight:400;color:#1e1e1e;">Dessus</span><span class="t" style="left:201.0px;top:674.27px;font-size:11.5px;font-weight:400;color:#1e1e1e;">Face</span><span class="t" style="left:240.4px;top:674.27px;font-size:11.5px;font-weight:400;color:#1e1e1e;">Droite</span><svg class="r" style="left:285px;top:673px" width="12" height="12"><path d="M4.5,1 H7.5 V4.5 H11 V7.5 H7.5 V11 H4.5 V7.5 H1 V4.5 H4.5 Z" fill="#f4f4f6" stroke="#6c6c6c" stroke-width="1"/></svg><div class="r" style="left:4px;top:695px;width:3px;height:20px;border-left:1px solid #c4cad6;border-right:1px solid #c4cad6;box-sizing:border-box"></div><div class="r" style="left:10px;top:699px;width:12.5px;height:13px;border:1px solid #4a4a4a;border-radius:3px;background:#f4f4f5;box-sizing:border-box"></div><span class="t" style="left:26.0px;top:700.27px;font-size:11.5px;font-weight:400;color:#1e1e1e;">Fin</span><div class="r" style="left:49px;top:699px;width:12.5px;height:13px;border:1px solid #4a4a4a;border-radius:3px;background:#f4f4f5;box-sizing:border-box"></div><span class="t" style="left:65.4px;top:700.27px;font-size:11.5px;font-weight:400;color:#1e1e1e;">Proche</span><div class="r" style="left:109px;top:699px;width:12.5px;height:13px;border:1px solid #4a4a4a;border-radius:3px;background:#f4f4f5;box-sizing:border-box"></div><span class="t" style="left:125.3px;top:700.27px;font-size:11.5px;font-weight:400;color:#1e1e1e;">Point</span><div class="r" style="left:160px;top:699px;width:12.5px;height:13px;border:1px solid #4a4a4a;border-radius:3px;background:#f4f4f5;box-sizing:border-box"></div><span class="t" style="left:176.6px;top:700.27px;font-size:11.5px;font-weight:400;color:#1e1e1e;">Mi</span><div class="r" style="left:197px;top:699px;width:12.5px;height:13px;border:1px solid #4a4a4a;border-radius:3px;background:#f4f4f5;box-sizing:border-box"></div><span class="t" style="left:213.0px;top:700.27px;font-size:11.5px;font-weight:400;color:#1e1e1e;">Cen</span><div class="r" style="left:241px;top:699px;width:12.5px;height:13px;border:1px solid #4a4a4a;border-radius:3px;background:#f4f4f5;box-sizing:border-box"></div><span class="t" style="left:257.4px;top:700.27px;font-size:11.5px;font-weight:400;color:#1e1e1e;">Int</span><div class="r" style="left:278px;top:699px;width:12.5px;height:13px;border:1px solid #4a4a4a;border-radius:3px;background:#f4f4f5;box-sizing:border-box"></div><span class="t" style="left:293.7px;top:700.27px;font-size:11.5px;font-weight:400;color:#1e1e1e;">Perp</span><div class="r" style="left:325px;top:699px;width:12.5px;height:13px;border:1px solid #4a4a4a;border-radius:3px;background:#f4f4f5;box-sizing:border-box"></div><span class="t" style="left:341.0px;top:700.27px;font-size:11.5px;font-weight:400;color:#1e1e1e;">Tan</span><div class="r" style="left:366px;top:699px;width:12.5px;height:13px;border:1px solid #4a4a4a;border-radius:3px;background:#f4f4f5;box-sizing:border-box"></div><span class="t" style="left:382.7px;top:700.27px;font-size:11.5px;font-weight:400;color:#1e1e1e;">Quad</span><div class="r" style="left:420px;top:699px;width:12.5px;height:13px;border:1px solid #4a4a4a;border-radius:3px;background:#f4f4f5;box-sizing:border-box"></div><span class="t" style="left:435.0px;top:700.27px;font-size:11.5px;font-weight:400;color:#1e1e1e;">Nœud</span><div class="r" style="left:476px;top:699px;width:12.5px;height:13px;border:1px solid #4a4a4a;border-radius:3px;background:#f4f4f5;box-sizing:border-box"></div><span class="t" style="left:492.3px;top:700.27px;font-size:11.5px;font-weight:400;color:#1e1e1e;">Sommet</span><div class="r" style="left:546px;top:700px;width:11px;height:11px;border:1px solid #d0d0d0;border-radius:50%;background:#f9f9f9;box-sizing:border-box"></div><span class="t" style="left:559.6px;top:700.27px;font-size:11.5px;font-weight:400;color:#1e1e1e;">Projeter</span><div class="r" style="left:609px;top:700px;width:11px;height:11px;border:1px solid #d0d0d0;border-radius:50%;background:#f9f9f9;box-sizing:border-box"></div><span class="t" style="left:623.8px;top:700.27px;font-size:11.5px;font-weight:400;color:#1e1e1e;">Désactiver</span><div class="r" style="left:1px;top:716px;width:1220px;height:1px;background:#c9d1e0"></div><div class="r" style="left:41px;top:717px;width:1px;height:19px;background:#c9d1e0"></div><div class="r" style="left:124px;top:717px;width:1px;height:19px;background:#c9d1e0"></div><div class="r" style="left:207px;top:717px;width:1px;height:19px;background:#c9d1e0"></div><div class="r" style="left:290px;top:717px;width:1px;height:19px;background:#c9d1e0"></div><div class="r" style="left:372px;top:717px;width:1px;height:19px;background:#c9d1e0"></div><div class="r" style="left:532px;top:717px;width:1px;height:19px;background:#c9d1e0"></div><div class="r" style="left:703px;top:717px;width:1px;height:19px;background:#c9d1e0"></div><div class="r" style="left:756px;top:717px;width:1px;height:19px;background:#c9d1e0"></div><div class="r" style="left:947px;top:717px;width:1px;height:19px;background:#c9d1e0"></div><div class="r" style="left:1025px;top:717px;width:1px;height:19px;background:#c9d1e0"></div><div class="r" style="left:1151px;top:717px;width:1px;height:19px;background:#c9d1e0"></div><div class="r" style="left:1188px;top:717px;width:1px;height:19px;background:#c9d1e0"></div><div class="r" style="left:1196px;top:717px;width:1px;height:19px;background:#c9d1e0"></div><div class="r" style="left:662px;top:717px;width:41px;height:19px;background:#cdd6ef"></div><div class="r" style="left:834px;top:717px;width:112px;height:19px;background:#cdd6ef"></div><div class="r" style="left:377px;top:720px;width:13px;height:13px;background:#ff0000;border:1px solid #222;box-sizing:border-box"></div><span class="t" style="left:5.0px;top:721.31px;font-size:11.8px;font-weight:400;color:#1e1e1e;">PlanC</span><span class="t" style="left:61.5px;top:721.31px;font-size:11.8px;font-weight:400;color:#1e1e1e;">x 86.624</span><span class="t" style="left:141.3px;top:721.31px;font-size:11.8px;font-weight:400;color:#1e1e1e;">y 117.392</span><span class="t" style="left:231.6px;top:721.31px;font-size:11.8px;font-weight:400;color:#1e1e1e;">z 0.000</span><span class="t" style="left:300.0px;top:721.31px;font-size:11.8px;font-weight:400;color:#1e1e1e;">Centimètres</span><span class="t" style="left:393.0px;top:721.31px;font-size:11.8px;font-weight:400;color:#1e1e1e;">IGES level 2</span><span class="t" style="left:536.0px;top:721.31px;font-size:11.8px;font-weight:400;color:#1e1e1e;">Magnétisme de la grille</span><span class="t" style="left:666.0px;top:721.31px;font-size:11.8px;font-weight:700;color:#1e1e1e;">Ortho</span><span class="t" style="left:708.6px;top:721.31px;font-size:11.8px;font-weight:400;color:#1e1e1e;">Planéité</span><span class="t" style="left:761.0px;top:721.31px;font-size:11.8px;font-weight:400;color:#1e1e1e;">Accrochages</span><div class="r" style="left:834px;top:717px;width:112px;height:19px;overflow:hidden"><span class="t" style="left:1.6px;top:4.31px;font-size:11.8px;font-weight:700;color:#1e1e1e;">Repérage intelligen</span></div><span class="t" style="left:950.5px;top:721.31px;font-size:11.8px;font-weight:400;color:#1e1e1e;">Manipulateur</span><span class="t" style="left:1029.0px;top:721.31px;font-size:11.8px;font-weight:400;color:#1e1e1e;">Enregistrer l'historique</span><span class="t" style="left:1157.0px;top:721.31px;font-size:11.8px;font-weight:400;color:#1e1e1e;">Filtre</span><div class="r" style="left:1189px;top:717px;width:7.5px;height:19px;overflow:hidden"><span class="t" style="left:0.5px;top:4.31px;font-size:11.8px;font-weight:400;color:#1e1e1e;">M</span></div>
</body></html>
